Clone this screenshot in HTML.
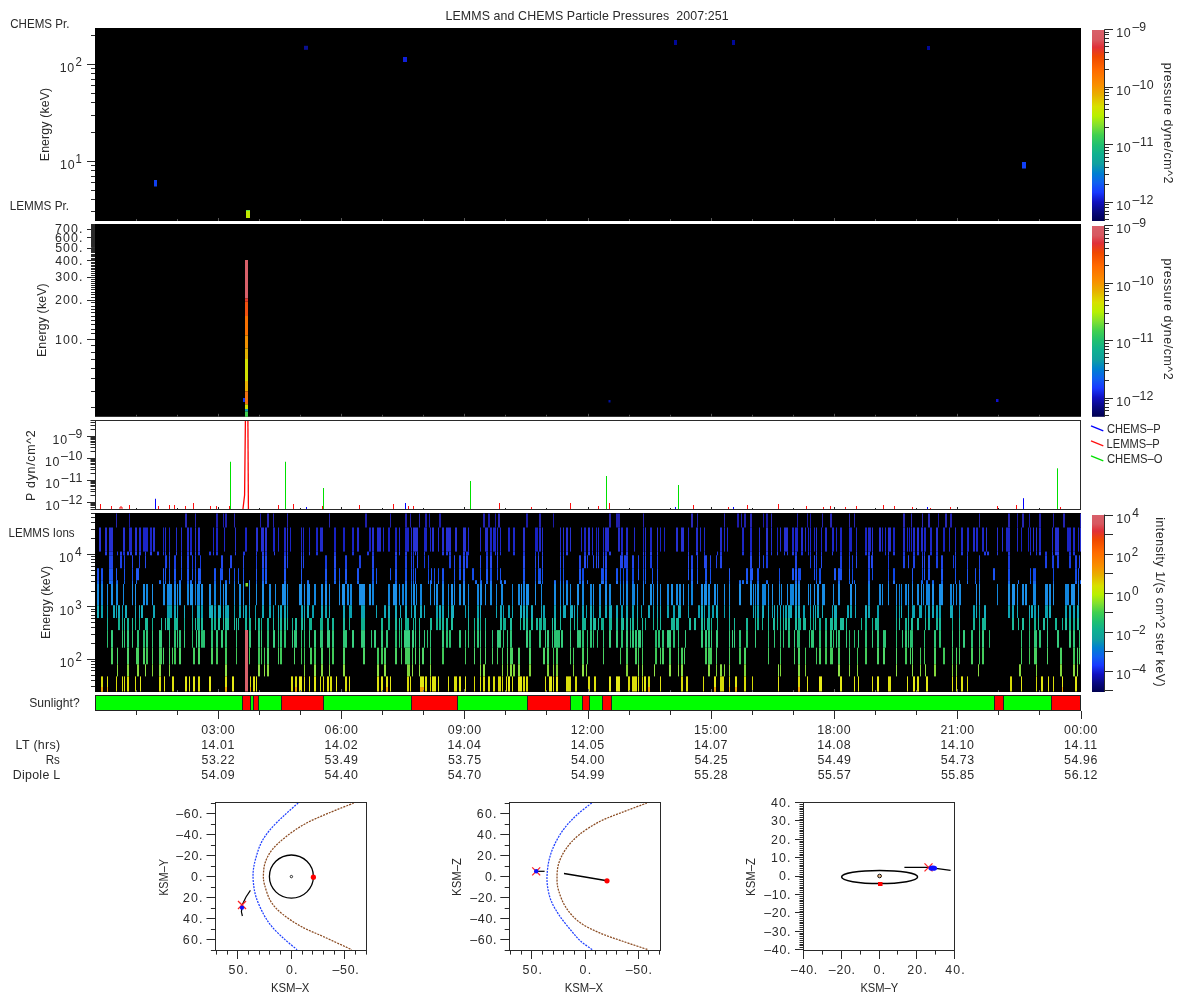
<!DOCTYPE html>
<html><head><meta charset="utf-8"><style>
html,body{margin:0;padding:0;background:#fff;width:1200px;height:1000px;overflow:hidden}
svg{display:block;will-change:transform}
text{font-family:"Liberation Sans",sans-serif;white-space:pre}
</style></head><body>
<svg width="1200" height="1000" viewBox="0 0 1200 1000">
<defs><linearGradient id="cmap" x1="0" y1="0" x2="0" y2="1"><stop offset="0.0" stop-color="rgb(216, 96, 106)"/><stop offset="0.05" stop-color="rgb(216, 88, 96)"/><stop offset="0.09" stop-color="rgb(224, 48, 56)"/><stop offset="0.14" stop-color="rgb(240, 72, 0)"/><stop offset="0.21" stop-color="rgb(255, 106, 0)"/><stop offset="0.29" stop-color="rgb(248, 144, 0)"/><stop offset="0.34" stop-color="rgb(232, 176, 0)"/><stop offset="0.4" stop-color="rgb(216, 224, 0)"/><stop offset="0.45" stop-color="rgb(184, 240, 0)"/><stop offset="0.5" stop-color="rgb(128, 224, 48)"/><stop offset="0.55" stop-color="rgb(64, 208, 80)"/><stop offset="0.6" stop-color="rgb(32, 192, 112)"/><stop offset="0.65" stop-color="rgb(16, 176, 144)"/><stop offset="0.7" stop-color="rgb(16, 160, 160)"/><stop offset="0.75" stop-color="rgb(0, 128, 208)"/><stop offset="0.8" stop-color="rgb(16, 96, 240)"/><stop offset="0.85" stop-color="rgb(24, 56, 255)"/><stop offset="0.9" stop-color="rgb(16, 16, 192)"/><stop offset="0.95" stop-color="rgb(8, 8, 128)"/><stop offset="1.0" stop-color="rgb(0, 0, 80)"/></linearGradient></defs>
<rect x="0" y="0" width="1200" height="1000" fill="#fff"/>
<text x="445.49" y="19.75" font-size="12.4" fill="#2a2a2a" textLength="283.18" lengthAdjust="spacing">LEMMS and CHEMS Particle Pressures  2007:251</text>
<rect x="95.00" y="28.00" width="986.00" height="193.00" fill="#000" />
<line x1="91.00" y1="211.50" x2="95.00" y2="211.50" stroke="#2a2a2a" stroke-width="1"/>
<line x1="91.00" y1="199.50" x2="95.00" y2="199.50" stroke="#2a2a2a" stroke-width="1"/>
<line x1="91.00" y1="190.50" x2="95.00" y2="190.50" stroke="#2a2a2a" stroke-width="1"/>
<line x1="91.00" y1="182.50" x2="95.00" y2="182.50" stroke="#2a2a2a" stroke-width="1"/>
<line x1="91.00" y1="176.50" x2="95.00" y2="176.50" stroke="#2a2a2a" stroke-width="1"/>
<line x1="91.00" y1="170.50" x2="95.00" y2="170.50" stroke="#2a2a2a" stroke-width="1"/>
<line x1="91.00" y1="165.50" x2="95.00" y2="165.50" stroke="#2a2a2a" stroke-width="1"/>
<line x1="87.00" y1="161.50" x2="95.00" y2="161.50" stroke="#2a2a2a" stroke-width="1"/>
<line x1="91.00" y1="132.50" x2="95.00" y2="132.50" stroke="#2a2a2a" stroke-width="1"/>
<line x1="91.00" y1="115.50" x2="95.00" y2="115.50" stroke="#2a2a2a" stroke-width="1"/>
<line x1="91.00" y1="102.50" x2="95.00" y2="102.50" stroke="#2a2a2a" stroke-width="1"/>
<line x1="91.00" y1="93.50" x2="95.00" y2="93.50" stroke="#2a2a2a" stroke-width="1"/>
<line x1="91.00" y1="85.50" x2="95.00" y2="85.50" stroke="#2a2a2a" stroke-width="1"/>
<line x1="91.00" y1="79.50" x2="95.00" y2="79.50" stroke="#2a2a2a" stroke-width="1"/>
<line x1="91.00" y1="73.50" x2="95.00" y2="73.50" stroke="#2a2a2a" stroke-width="1"/>
<line x1="91.00" y1="68.50" x2="95.00" y2="68.50" stroke="#2a2a2a" stroke-width="1"/>
<line x1="87.00" y1="64.50" x2="95.00" y2="64.50" stroke="#2a2a2a" stroke-width="1"/>
<line x1="91.00" y1="35.50" x2="95.00" y2="35.50" stroke="#2a2a2a" stroke-width="1"/>
<text x="75.40" y="66.10" font-size="12.4" fill="#2a2a2a" textLength="6.39" lengthAdjust="spacingAndGlyphs">2</text>
<text x="59.80" y="72.10" font-size="12.4" fill="#2a2a2a" textLength="14.46" lengthAdjust="spacing">10</text>
<text x="75.41" y="163.00" font-size="12.4" fill="#2a2a2a" textLength="6.32" lengthAdjust="spacingAndGlyphs">1</text>
<text x="60.09" y="169.00" font-size="12.4" fill="#2a2a2a" textLength="14.46" lengthAdjust="spacing">10</text>
<text x="10.22" y="27.90" font-size="12.4" fill="#2a2a2a" textLength="59.14" lengthAdjust="spacingAndGlyphs">CHEMS Pr.</text>
<text x="9.66" y="209.60" font-size="12.4" fill="#2a2a2a" textLength="59.42" lengthAdjust="spacingAndGlyphs">LEMMS Pr.</text>
<text transform="translate(49.00,161.21) rotate(-90)" x="0" y="0" font-size="12.4" fill="#2a2a2a" textLength="73.37" lengthAdjust="spacing">Energy (keV)</text>
<rect x="304.00" y="45.80" width="4.00" height="4.00" fill="#0a1090" />
<rect x="403.00" y="57.00" width="4.00" height="5.00" fill="#1020d8" />
<rect x="674.00" y="40.00" width="3.00" height="5.00" fill="#000898" />
<rect x="732.00" y="40.00" width="3.00" height="5.00" fill="#000898" />
<rect x="927.00" y="46.00" width="3.00" height="4.00" fill="#000898" />
<rect x="1022.00" y="162.00" width="4.00" height="6.50" fill="#1040f8" />
<rect x="154.00" y="180.00" width="3.00" height="6.50" fill="#1040f0" />
<rect x="246.00" y="210.00" width="4.00" height="8.00" fill="#c0e800" />
<rect x="246.00" y="210.00" width="4.00" height="1.00" fill="#60e040" />
<line x1="136.50" y1="219.00" x2="136.50" y2="221.00" stroke="#555" stroke-width="1"/>
<line x1="177.50" y1="219.00" x2="177.50" y2="221.00" stroke="#555" stroke-width="1"/>
<line x1="218.50" y1="218.00" x2="218.50" y2="221.00" stroke="#555" stroke-width="1"/>
<line x1="259.50" y1="219.00" x2="259.50" y2="221.00" stroke="#555" stroke-width="1"/>
<line x1="300.50" y1="219.00" x2="300.50" y2="221.00" stroke="#555" stroke-width="1"/>
<line x1="341.50" y1="218.00" x2="341.50" y2="221.00" stroke="#555" stroke-width="1"/>
<line x1="382.50" y1="219.00" x2="382.50" y2="221.00" stroke="#555" stroke-width="1"/>
<line x1="423.50" y1="219.00" x2="423.50" y2="221.00" stroke="#555" stroke-width="1"/>
<line x1="464.50" y1="218.00" x2="464.50" y2="221.00" stroke="#555" stroke-width="1"/>
<line x1="505.50" y1="219.00" x2="505.50" y2="221.00" stroke="#555" stroke-width="1"/>
<line x1="546.50" y1="219.00" x2="546.50" y2="221.00" stroke="#555" stroke-width="1"/>
<line x1="588.50" y1="218.00" x2="588.50" y2="221.00" stroke="#555" stroke-width="1"/>
<line x1="629.50" y1="219.00" x2="629.50" y2="221.00" stroke="#555" stroke-width="1"/>
<line x1="670.50" y1="219.00" x2="670.50" y2="221.00" stroke="#555" stroke-width="1"/>
<line x1="711.50" y1="218.00" x2="711.50" y2="221.00" stroke="#555" stroke-width="1"/>
<line x1="752.50" y1="219.00" x2="752.50" y2="221.00" stroke="#555" stroke-width="1"/>
<line x1="793.50" y1="219.00" x2="793.50" y2="221.00" stroke="#555" stroke-width="1"/>
<line x1="834.50" y1="218.00" x2="834.50" y2="221.00" stroke="#555" stroke-width="1"/>
<line x1="875.50" y1="219.00" x2="875.50" y2="221.00" stroke="#555" stroke-width="1"/>
<line x1="916.50" y1="219.00" x2="916.50" y2="221.00" stroke="#555" stroke-width="1"/>
<line x1="957.50" y1="218.00" x2="957.50" y2="221.00" stroke="#555" stroke-width="1"/>
<line x1="998.50" y1="219.00" x2="998.50" y2="221.00" stroke="#555" stroke-width="1"/>
<line x1="1039.50" y1="219.00" x2="1039.50" y2="221.00" stroke="#555" stroke-width="1"/>
<rect x="95.00" y="224.00" width="986.00" height="192.80" fill="#000" />
<rect x="91.20" y="224.00" width="3.80" height="26.40" fill="#333" />
<line x1="91.00" y1="407.50" x2="95.00" y2="407.50" stroke="#2a2a2a" stroke-width="1"/>
<line x1="91.00" y1="391.50" x2="95.00" y2="391.50" stroke="#2a2a2a" stroke-width="1"/>
<line x1="91.00" y1="378.50" x2="95.00" y2="378.50" stroke="#2a2a2a" stroke-width="1"/>
<line x1="91.00" y1="368.50" x2="95.00" y2="368.50" stroke="#2a2a2a" stroke-width="1"/>
<line x1="91.00" y1="359.50" x2="95.00" y2="359.50" stroke="#2a2a2a" stroke-width="1"/>
<line x1="91.00" y1="352.50" x2="95.00" y2="352.50" stroke="#2a2a2a" stroke-width="1"/>
<line x1="91.00" y1="345.50" x2="95.00" y2="345.50" stroke="#2a2a2a" stroke-width="1"/>
<line x1="87.00" y1="339.50" x2="95.00" y2="339.50" stroke="#2a2a2a" stroke-width="1"/>
<line x1="91.00" y1="333.50" x2="95.00" y2="333.50" stroke="#2a2a2a" stroke-width="1"/>
<line x1="91.00" y1="329.50" x2="95.00" y2="329.50" stroke="#2a2a2a" stroke-width="1"/>
<line x1="91.00" y1="324.50" x2="95.00" y2="324.50" stroke="#2a2a2a" stroke-width="1"/>
<line x1="91.00" y1="320.50" x2="95.00" y2="320.50" stroke="#2a2a2a" stroke-width="1"/>
<line x1="91.00" y1="316.50" x2="95.00" y2="316.50" stroke="#2a2a2a" stroke-width="1"/>
<line x1="91.00" y1="312.50" x2="95.00" y2="312.50" stroke="#2a2a2a" stroke-width="1"/>
<line x1="91.00" y1="309.50" x2="95.00" y2="309.50" stroke="#2a2a2a" stroke-width="1"/>
<line x1="91.00" y1="306.50" x2="95.00" y2="306.50" stroke="#2a2a2a" stroke-width="1"/>
<line x1="91.00" y1="302.50" x2="95.00" y2="302.50" stroke="#2a2a2a" stroke-width="1"/>
<line x1="87.00" y1="300.50" x2="95.00" y2="300.50" stroke="#2a2a2a" stroke-width="1"/>
<line x1="91.00" y1="297.50" x2="95.00" y2="297.50" stroke="#2a2a2a" stroke-width="1"/>
<line x1="91.00" y1="294.50" x2="95.00" y2="294.50" stroke="#2a2a2a" stroke-width="1"/>
<line x1="91.00" y1="292.50" x2="95.00" y2="292.50" stroke="#2a2a2a" stroke-width="1"/>
<line x1="91.00" y1="289.50" x2="95.00" y2="289.50" stroke="#2a2a2a" stroke-width="1"/>
<line x1="91.00" y1="287.50" x2="95.00" y2="287.50" stroke="#2a2a2a" stroke-width="1"/>
<line x1="91.00" y1="285.50" x2="95.00" y2="285.50" stroke="#2a2a2a" stroke-width="1"/>
<line x1="91.00" y1="283.50" x2="95.00" y2="283.50" stroke="#2a2a2a" stroke-width="1"/>
<line x1="91.00" y1="281.50" x2="95.00" y2="281.50" stroke="#2a2a2a" stroke-width="1"/>
<line x1="91.00" y1="279.50" x2="95.00" y2="279.50" stroke="#2a2a2a" stroke-width="1"/>
<line x1="87.00" y1="277.50" x2="95.00" y2="277.50" stroke="#2a2a2a" stroke-width="1"/>
<line x1="91.00" y1="275.50" x2="95.00" y2="275.50" stroke="#2a2a2a" stroke-width="1"/>
<line x1="91.00" y1="273.50" x2="95.00" y2="273.50" stroke="#2a2a2a" stroke-width="1"/>
<line x1="91.00" y1="271.50" x2="95.00" y2="271.50" stroke="#2a2a2a" stroke-width="1"/>
<line x1="91.00" y1="269.50" x2="95.00" y2="269.50" stroke="#2a2a2a" stroke-width="1"/>
<line x1="91.00" y1="268.50" x2="95.00" y2="268.50" stroke="#2a2a2a" stroke-width="1"/>
<line x1="91.00" y1="266.50" x2="95.00" y2="266.50" stroke="#2a2a2a" stroke-width="1"/>
<line x1="91.00" y1="265.50" x2="95.00" y2="265.50" stroke="#2a2a2a" stroke-width="1"/>
<line x1="91.00" y1="263.50" x2="95.00" y2="263.50" stroke="#2a2a2a" stroke-width="1"/>
<line x1="91.00" y1="262.50" x2="95.00" y2="262.50" stroke="#2a2a2a" stroke-width="1"/>
<line x1="87.00" y1="260.50" x2="95.00" y2="260.50" stroke="#2a2a2a" stroke-width="1"/>
<line x1="91.00" y1="259.50" x2="95.00" y2="259.50" stroke="#2a2a2a" stroke-width="1"/>
<line x1="91.00" y1="258.50" x2="95.00" y2="258.50" stroke="#2a2a2a" stroke-width="1"/>
<line x1="91.00" y1="256.50" x2="95.00" y2="256.50" stroke="#2a2a2a" stroke-width="1"/>
<line x1="91.00" y1="255.50" x2="95.00" y2="255.50" stroke="#2a2a2a" stroke-width="1"/>
<line x1="91.00" y1="254.50" x2="95.00" y2="254.50" stroke="#2a2a2a" stroke-width="1"/>
<line x1="91.00" y1="252.50" x2="95.00" y2="252.50" stroke="#2a2a2a" stroke-width="1"/>
<line x1="91.00" y1="251.50" x2="95.00" y2="251.50" stroke="#2a2a2a" stroke-width="1"/>
<line x1="91.00" y1="250.50" x2="95.00" y2="250.50" stroke="#2a2a2a" stroke-width="1"/>
<line x1="91.00" y1="249.50" x2="95.00" y2="249.50" stroke="#2a2a2a" stroke-width="1"/>
<line x1="87.00" y1="248.50" x2="95.00" y2="248.50" stroke="#2a2a2a" stroke-width="1"/>
<line x1="91.00" y1="246.50" x2="95.00" y2="246.50" stroke="#2a2a2a" stroke-width="1"/>
<line x1="91.00" y1="245.50" x2="95.00" y2="245.50" stroke="#2a2a2a" stroke-width="1"/>
<line x1="91.00" y1="244.50" x2="95.00" y2="244.50" stroke="#2a2a2a" stroke-width="1"/>
<line x1="91.00" y1="243.50" x2="95.00" y2="243.50" stroke="#2a2a2a" stroke-width="1"/>
<line x1="91.00" y1="242.50" x2="95.00" y2="242.50" stroke="#2a2a2a" stroke-width="1"/>
<line x1="91.00" y1="241.50" x2="95.00" y2="241.50" stroke="#2a2a2a" stroke-width="1"/>
<line x1="91.00" y1="240.50" x2="95.00" y2="240.50" stroke="#2a2a2a" stroke-width="1"/>
<line x1="91.00" y1="239.50" x2="95.00" y2="239.50" stroke="#2a2a2a" stroke-width="1"/>
<line x1="91.00" y1="238.50" x2="95.00" y2="238.50" stroke="#2a2a2a" stroke-width="1"/>
<line x1="87.00" y1="237.50" x2="95.00" y2="237.50" stroke="#2a2a2a" stroke-width="1"/>
<line x1="91.00" y1="236.50" x2="95.00" y2="236.50" stroke="#2a2a2a" stroke-width="1"/>
<line x1="91.00" y1="235.50" x2="95.00" y2="235.50" stroke="#2a2a2a" stroke-width="1"/>
<line x1="91.00" y1="235.50" x2="95.00" y2="235.50" stroke="#2a2a2a" stroke-width="1"/>
<line x1="91.00" y1="234.50" x2="95.00" y2="234.50" stroke="#2a2a2a" stroke-width="1"/>
<line x1="91.00" y1="233.50" x2="95.00" y2="233.50" stroke="#2a2a2a" stroke-width="1"/>
<line x1="91.00" y1="232.50" x2="95.00" y2="232.50" stroke="#2a2a2a" stroke-width="1"/>
<line x1="91.00" y1="231.50" x2="95.00" y2="231.50" stroke="#2a2a2a" stroke-width="1"/>
<line x1="91.00" y1="230.50" x2="95.00" y2="230.50" stroke="#2a2a2a" stroke-width="1"/>
<line x1="91.00" y1="229.50" x2="95.00" y2="229.50" stroke="#2a2a2a" stroke-width="1"/>
<line x1="87.00" y1="229.50" x2="95.00" y2="229.50" stroke="#2a2a2a" stroke-width="1"/>
<line x1="91.00" y1="228.50" x2="95.00" y2="228.50" stroke="#2a2a2a" stroke-width="1"/>
<line x1="91.00" y1="227.50" x2="95.00" y2="227.50" stroke="#2a2a2a" stroke-width="1"/>
<line x1="91.00" y1="226.50" x2="95.00" y2="226.50" stroke="#2a2a2a" stroke-width="1"/>
<line x1="91.00" y1="225.50" x2="95.00" y2="225.50" stroke="#2a2a2a" stroke-width="1"/>
<line x1="91.00" y1="225.50" x2="95.00" y2="225.50" stroke="#2a2a2a" stroke-width="1"/>
<line x1="91.00" y1="224.50" x2="95.00" y2="224.50" stroke="#2a2a2a" stroke-width="1"/>
<text x="55.08" y="343.50" font-size="12.4" fill="#2a2a2a" textLength="27.41" lengthAdjust="spacing">100.</text>
<text x="55.01" y="304.19" font-size="12.4" fill="#2a2a2a" textLength="27.48" lengthAdjust="spacing">200.</text>
<text x="55.16" y="281.19" font-size="12.4" fill="#2a2a2a" textLength="27.32" lengthAdjust="spacing">300.</text>
<text x="55.13" y="264.87" font-size="12.4" fill="#2a2a2a" textLength="27.36" lengthAdjust="spacing">400.</text>
<text x="55.16" y="252.21" font-size="12.4" fill="#2a2a2a" textLength="27.32" lengthAdjust="spacing">500.</text>
<text x="54.91" y="241.87" font-size="12.4" fill="#2a2a2a" textLength="27.59" lengthAdjust="spacing">600.</text>
<text x="55.12" y="233.13" font-size="12.4" fill="#2a2a2a" textLength="27.36" lengthAdjust="spacing">700.</text>
<text transform="translate(45.60,357.01) rotate(-90)" x="0" y="0" font-size="12.4" fill="#2a2a2a" textLength="73.78" lengthAdjust="spacing">Energy (keV)</text>
<rect x="245.00" y="260.00" width="3.00" height="38.50" fill="#d8606a" />
<rect x="245.00" y="298.50" width="3.00" height="3.20" fill="#e83828" />
<rect x="245.00" y="301.70" width="3.00" height="14.30" fill="#f05010" />
<rect x="245.00" y="316.00" width="3.00" height="19.50" fill="#f87000" />
<rect x="245.00" y="335.50" width="3.00" height="13.00" fill="#f09000" />
<rect x="245.00" y="348.50" width="3.00" height="10.50" fill="#e0b000" />
<rect x="245.00" y="359.00" width="3.00" height="22.00" fill="#d0e000" />
<rect x="245.00" y="381.00" width="3.00" height="10.40" fill="#e8b000" />
<rect x="245.00" y="391.40" width="3.00" height="13.00" fill="#f07010" />
<rect x="245.00" y="404.40" width="3.00" height="4.60" fill="#d0e000" />
<rect x="245.00" y="409.00" width="3.00" height="2.60" fill="#10a0b0" />
<rect x="245.00" y="411.60" width="3.00" height="5.20" fill="#40d050" />
<rect x="243.00" y="398.00" width="2.00" height="4.00" fill="#1030f0" />
<rect x="608.50" y="400.00" width="2.00" height="2.50" fill="#0010a0" />
<rect x="996.00" y="399.00" width="2.50" height="3.00" fill="#1010d0" />
<line x1="136.50" y1="414.80" x2="136.50" y2="416.80" stroke="#555" stroke-width="1"/>
<line x1="177.50" y1="414.80" x2="177.50" y2="416.80" stroke="#555" stroke-width="1"/>
<line x1="218.50" y1="413.80" x2="218.50" y2="416.80" stroke="#555" stroke-width="1"/>
<line x1="259.50" y1="414.80" x2="259.50" y2="416.80" stroke="#555" stroke-width="1"/>
<line x1="300.50" y1="414.80" x2="300.50" y2="416.80" stroke="#555" stroke-width="1"/>
<line x1="341.50" y1="413.80" x2="341.50" y2="416.80" stroke="#555" stroke-width="1"/>
<line x1="382.50" y1="414.80" x2="382.50" y2="416.80" stroke="#555" stroke-width="1"/>
<line x1="423.50" y1="414.80" x2="423.50" y2="416.80" stroke="#555" stroke-width="1"/>
<line x1="464.50" y1="413.80" x2="464.50" y2="416.80" stroke="#555" stroke-width="1"/>
<line x1="505.50" y1="414.80" x2="505.50" y2="416.80" stroke="#555" stroke-width="1"/>
<line x1="546.50" y1="414.80" x2="546.50" y2="416.80" stroke="#555" stroke-width="1"/>
<line x1="588.50" y1="413.80" x2="588.50" y2="416.80" stroke="#555" stroke-width="1"/>
<line x1="629.50" y1="414.80" x2="629.50" y2="416.80" stroke="#555" stroke-width="1"/>
<line x1="670.50" y1="414.80" x2="670.50" y2="416.80" stroke="#555" stroke-width="1"/>
<line x1="711.50" y1="413.80" x2="711.50" y2="416.80" stroke="#555" stroke-width="1"/>
<line x1="752.50" y1="414.80" x2="752.50" y2="416.80" stroke="#555" stroke-width="1"/>
<line x1="793.50" y1="414.80" x2="793.50" y2="416.80" stroke="#555" stroke-width="1"/>
<line x1="834.50" y1="413.80" x2="834.50" y2="416.80" stroke="#555" stroke-width="1"/>
<line x1="875.50" y1="414.80" x2="875.50" y2="416.80" stroke="#555" stroke-width="1"/>
<line x1="916.50" y1="414.80" x2="916.50" y2="416.80" stroke="#555" stroke-width="1"/>
<line x1="957.50" y1="413.80" x2="957.50" y2="416.80" stroke="#555" stroke-width="1"/>
<line x1="998.50" y1="414.80" x2="998.50" y2="416.80" stroke="#555" stroke-width="1"/>
<line x1="1039.50" y1="414.80" x2="1039.50" y2="416.80" stroke="#555" stroke-width="1"/>
<rect x="95.00" y="420.00" width="986.00" height="90.00" fill="#fff" />
<line x1="90.50" y1="509.50" x2="95.00" y2="509.50" stroke="#2a2a2a" stroke-width="1"/>
<line x1="90.50" y1="507.50" x2="95.00" y2="507.50" stroke="#2a2a2a" stroke-width="1"/>
<line x1="90.50" y1="505.50" x2="95.00" y2="505.50" stroke="#2a2a2a" stroke-width="1"/>
<line x1="90.50" y1="504.50" x2="95.00" y2="504.50" stroke="#2a2a2a" stroke-width="1"/>
<line x1="90.50" y1="503.50" x2="95.00" y2="503.50" stroke="#2a2a2a" stroke-width="1"/>
<line x1="87.00" y1="502.50" x2="95.00" y2="502.50" stroke="#2a2a2a" stroke-width="1"/>
<line x1="90.50" y1="495.50" x2="95.00" y2="495.50" stroke="#2a2a2a" stroke-width="1"/>
<line x1="90.50" y1="491.50" x2="95.00" y2="491.50" stroke="#2a2a2a" stroke-width="1"/>
<line x1="90.50" y1="489.50" x2="95.00" y2="489.50" stroke="#2a2a2a" stroke-width="1"/>
<line x1="90.50" y1="486.50" x2="95.00" y2="486.50" stroke="#2a2a2a" stroke-width="1"/>
<line x1="90.50" y1="485.50" x2="95.00" y2="485.50" stroke="#2a2a2a" stroke-width="1"/>
<line x1="90.50" y1="483.50" x2="95.00" y2="483.50" stroke="#2a2a2a" stroke-width="1"/>
<line x1="90.50" y1="482.50" x2="95.00" y2="482.50" stroke="#2a2a2a" stroke-width="1"/>
<line x1="90.50" y1="481.50" x2="95.00" y2="481.50" stroke="#2a2a2a" stroke-width="1"/>
<line x1="87.00" y1="480.50" x2="95.00" y2="480.50" stroke="#2a2a2a" stroke-width="1"/>
<line x1="90.50" y1="473.50" x2="95.00" y2="473.50" stroke="#2a2a2a" stroke-width="1"/>
<line x1="90.50" y1="469.50" x2="95.00" y2="469.50" stroke="#2a2a2a" stroke-width="1"/>
<line x1="90.50" y1="467.50" x2="95.00" y2="467.50" stroke="#2a2a2a" stroke-width="1"/>
<line x1="90.50" y1="464.50" x2="95.00" y2="464.50" stroke="#2a2a2a" stroke-width="1"/>
<line x1="90.50" y1="463.50" x2="95.00" y2="463.50" stroke="#2a2a2a" stroke-width="1"/>
<line x1="90.50" y1="461.50" x2="95.00" y2="461.50" stroke="#2a2a2a" stroke-width="1"/>
<line x1="90.50" y1="460.50" x2="95.00" y2="460.50" stroke="#2a2a2a" stroke-width="1"/>
<line x1="90.50" y1="459.50" x2="95.00" y2="459.50" stroke="#2a2a2a" stroke-width="1"/>
<line x1="87.00" y1="458.50" x2="95.00" y2="458.50" stroke="#2a2a2a" stroke-width="1"/>
<line x1="90.50" y1="451.50" x2="95.00" y2="451.50" stroke="#2a2a2a" stroke-width="1"/>
<line x1="90.50" y1="447.50" x2="95.00" y2="447.50" stroke="#2a2a2a" stroke-width="1"/>
<line x1="90.50" y1="444.50" x2="95.00" y2="444.50" stroke="#2a2a2a" stroke-width="1"/>
<line x1="90.50" y1="442.50" x2="95.00" y2="442.50" stroke="#2a2a2a" stroke-width="1"/>
<line x1="90.50" y1="441.50" x2="95.00" y2="441.50" stroke="#2a2a2a" stroke-width="1"/>
<line x1="90.50" y1="439.50" x2="95.00" y2="439.50" stroke="#2a2a2a" stroke-width="1"/>
<line x1="90.50" y1="438.50" x2="95.00" y2="438.50" stroke="#2a2a2a" stroke-width="1"/>
<line x1="90.50" y1="437.50" x2="95.00" y2="437.50" stroke="#2a2a2a" stroke-width="1"/>
<line x1="87.00" y1="436.50" x2="95.00" y2="436.50" stroke="#2a2a2a" stroke-width="1"/>
<line x1="90.50" y1="429.50" x2="95.00" y2="429.50" stroke="#2a2a2a" stroke-width="1"/>
<line x1="90.50" y1="425.50" x2="95.00" y2="425.50" stroke="#2a2a2a" stroke-width="1"/>
<line x1="90.50" y1="422.50" x2="95.00" y2="422.50" stroke="#2a2a2a" stroke-width="1"/>
<line x1="90.50" y1="420.50" x2="95.00" y2="420.50" stroke="#2a2a2a" stroke-width="1"/>
<text x="68.80" y="437.90" font-size="12.4" fill="#2a2a2a" textLength="13.58" lengthAdjust="spacingAndGlyphs">–9</text>
<text x="52.62" y="443.90" font-size="12.4" fill="#2a2a2a" textLength="14.46" lengthAdjust="spacing">10</text>
<text x="61.10" y="459.97" font-size="12.4" fill="#2a2a2a" textLength="21.19" lengthAdjust="spacing">–10</text>
<text x="44.92" y="465.97" font-size="12.4" fill="#2a2a2a" textLength="14.46" lengthAdjust="spacing">10</text>
<text x="61.40" y="482.04" font-size="12.4" fill="#2a2a2a" textLength="20.98" lengthAdjust="spacing">–11</text>
<text x="45.22" y="488.04" font-size="12.4" fill="#2a2a2a" textLength="14.46" lengthAdjust="spacing">10</text>
<text x="61.50" y="504.11" font-size="12.4" fill="#2a2a2a" textLength="20.97" lengthAdjust="spacing">–12</text>
<text x="45.32" y="510.11" font-size="12.4" fill="#2a2a2a" textLength="14.46" lengthAdjust="spacing">10</text>
<text transform="translate(35.10,500.89) rotate(-90)" x="0" y="0" font-size="12.4" fill="#2a2a2a" textLength="70.58" lengthAdjust="spacing">P dyn/cm^2</text>
<line x1="136.50" y1="508.00" x2="136.50" y2="510.00" stroke="#222" stroke-width="1"/>
<line x1="177.50" y1="508.00" x2="177.50" y2="510.00" stroke="#222" stroke-width="1"/>
<line x1="218.50" y1="507.00" x2="218.50" y2="510.00" stroke="#222" stroke-width="1"/>
<line x1="259.50" y1="508.00" x2="259.50" y2="510.00" stroke="#222" stroke-width="1"/>
<line x1="300.50" y1="508.00" x2="300.50" y2="510.00" stroke="#222" stroke-width="1"/>
<line x1="341.50" y1="507.00" x2="341.50" y2="510.00" stroke="#222" stroke-width="1"/>
<line x1="382.50" y1="508.00" x2="382.50" y2="510.00" stroke="#222" stroke-width="1"/>
<line x1="423.50" y1="508.00" x2="423.50" y2="510.00" stroke="#222" stroke-width="1"/>
<line x1="464.50" y1="507.00" x2="464.50" y2="510.00" stroke="#222" stroke-width="1"/>
<line x1="505.50" y1="508.00" x2="505.50" y2="510.00" stroke="#222" stroke-width="1"/>
<line x1="546.50" y1="508.00" x2="546.50" y2="510.00" stroke="#222" stroke-width="1"/>
<line x1="588.50" y1="507.00" x2="588.50" y2="510.00" stroke="#222" stroke-width="1"/>
<line x1="629.50" y1="508.00" x2="629.50" y2="510.00" stroke="#222" stroke-width="1"/>
<line x1="670.50" y1="508.00" x2="670.50" y2="510.00" stroke="#222" stroke-width="1"/>
<line x1="711.50" y1="507.00" x2="711.50" y2="510.00" stroke="#222" stroke-width="1"/>
<line x1="752.50" y1="508.00" x2="752.50" y2="510.00" stroke="#222" stroke-width="1"/>
<line x1="793.50" y1="508.00" x2="793.50" y2="510.00" stroke="#222" stroke-width="1"/>
<line x1="834.50" y1="507.00" x2="834.50" y2="510.00" stroke="#222" stroke-width="1"/>
<line x1="875.50" y1="508.00" x2="875.50" y2="510.00" stroke="#222" stroke-width="1"/>
<line x1="916.50" y1="508.00" x2="916.50" y2="510.00" stroke="#222" stroke-width="1"/>
<line x1="957.50" y1="507.00" x2="957.50" y2="510.00" stroke="#222" stroke-width="1"/>
<line x1="998.50" y1="508.00" x2="998.50" y2="510.00" stroke="#222" stroke-width="1"/>
<line x1="1039.50" y1="508.00" x2="1039.50" y2="510.00" stroke="#222" stroke-width="1"/>
<line x1="155.50" y1="498.75" x2="155.50" y2="509.50" stroke="#0000ff" stroke-width="1"/>
<line x1="230.50" y1="461.75" x2="230.50" y2="509.50" stroke="#00e000" stroke-width="1"/>
<line x1="285.50" y1="461.75" x2="285.50" y2="509.50" stroke="#00e000" stroke-width="1"/>
<line x1="323.50" y1="488.00" x2="323.50" y2="509.50" stroke="#00e000" stroke-width="1"/>
<line x1="470.50" y1="481.00" x2="470.50" y2="509.50" stroke="#00e000" stroke-width="1"/>
<line x1="606.50" y1="476.00" x2="606.50" y2="509.50" stroke="#00e000" stroke-width="1"/>
<line x1="678.50" y1="485.00" x2="678.50" y2="509.50" stroke="#00e000" stroke-width="1"/>
<line x1="1057.50" y1="468.30" x2="1057.50" y2="509.50" stroke="#00e000" stroke-width="1"/>
<line x1="1023.50" y1="498.20" x2="1023.50" y2="509.50" stroke="#0000ff" stroke-width="1"/>
<line x1="405.50" y1="503.00" x2="405.50" y2="509.50" stroke="#0000ff" stroke-width="1"/>
<line x1="100.50" y1="504.00" x2="100.50" y2="509.50" stroke="#ff1010" stroke-width="1"/>
<line x1="111.50" y1="506.00" x2="111.50" y2="509.50" stroke="#ff1010" stroke-width="1"/>
<line x1="129.50" y1="505.00" x2="129.50" y2="509.50" stroke="#ff1010" stroke-width="1"/>
<line x1="158.50" y1="506.00" x2="158.50" y2="509.50" stroke="#ff1010" stroke-width="1"/>
<line x1="169.50" y1="505.00" x2="169.50" y2="509.50" stroke="#ff1010" stroke-width="1"/>
<line x1="174.50" y1="505.00" x2="174.50" y2="509.50" stroke="#ff1010" stroke-width="1"/>
<line x1="185.50" y1="506.00" x2="185.50" y2="509.50" stroke="#ff1010" stroke-width="1"/>
<line x1="193.50" y1="503.00" x2="193.50" y2="509.50" stroke="#ff1010" stroke-width="1"/>
<line x1="210.50" y1="506.00" x2="210.50" y2="509.50" stroke="#ff1010" stroke-width="1"/>
<line x1="216.50" y1="506.00" x2="216.50" y2="509.50" stroke="#ff1010" stroke-width="1"/>
<line x1="229.50" y1="506.00" x2="229.50" y2="509.50" stroke="#ff1010" stroke-width="1"/>
<line x1="278.50" y1="505.00" x2="278.50" y2="509.50" stroke="#ff1010" stroke-width="1"/>
<line x1="293.50" y1="504.00" x2="293.50" y2="509.50" stroke="#ff1010" stroke-width="1"/>
<line x1="306.50" y1="507.00" x2="306.50" y2="509.50" stroke="#0000ff" stroke-width="1"/>
<line x1="322.50" y1="506.00" x2="322.50" y2="509.50" stroke="#ff1010" stroke-width="1"/>
<line x1="359.50" y1="505.00" x2="359.50" y2="509.50" stroke="#ff1010" stroke-width="1"/>
<line x1="393.50" y1="504.00" x2="393.50" y2="509.50" stroke="#ff1010" stroke-width="1"/>
<line x1="408.50" y1="506.00" x2="408.50" y2="509.50" stroke="#ff1010" stroke-width="1"/>
<line x1="413.50" y1="506.00" x2="413.50" y2="509.50" stroke="#ff1010" stroke-width="1"/>
<line x1="499.50" y1="503.00" x2="499.50" y2="509.50" stroke="#ff1010" stroke-width="1"/>
<line x1="531.50" y1="507.00" x2="531.50" y2="509.50" stroke="#ff1010" stroke-width="1"/>
<line x1="570.50" y1="503.00" x2="570.50" y2="509.50" stroke="#ff1010" stroke-width="1"/>
<line x1="598.50" y1="506.00" x2="598.50" y2="509.50" stroke="#ff1010" stroke-width="1"/>
<line x1="609.50" y1="503.00" x2="609.50" y2="509.50" stroke="#ff1010" stroke-width="1"/>
<line x1="675.50" y1="507.00" x2="675.50" y2="509.50" stroke="#0000ff" stroke-width="1"/>
<line x1="693.50" y1="505.00" x2="693.50" y2="509.50" stroke="#ff1010" stroke-width="1"/>
<line x1="728.50" y1="507.00" x2="728.50" y2="509.50" stroke="#ff1010" stroke-width="1"/>
<line x1="733.50" y1="507.00" x2="733.50" y2="509.50" stroke="#0000ff" stroke-width="1"/>
<line x1="747.50" y1="505.00" x2="747.50" y2="509.50" stroke="#ff1010" stroke-width="1"/>
<line x1="778.50" y1="504.00" x2="778.50" y2="509.50" stroke="#ff1010" stroke-width="1"/>
<line x1="806.50" y1="506.00" x2="806.50" y2="509.50" stroke="#ff1010" stroke-width="1"/>
<line x1="823.50" y1="507.00" x2="823.50" y2="509.50" stroke="#ff1010" stroke-width="1"/>
<line x1="830.50" y1="506.00" x2="830.50" y2="509.50" stroke="#ff1010" stroke-width="1"/>
<line x1="845.50" y1="507.00" x2="845.50" y2="509.50" stroke="#ff1010" stroke-width="1"/>
<line x1="856.50" y1="506.00" x2="856.50" y2="509.50" stroke="#ff1010" stroke-width="1"/>
<line x1="883.50" y1="505.00" x2="883.50" y2="509.50" stroke="#ff1010" stroke-width="1"/>
<line x1="894.50" y1="506.00" x2="894.50" y2="509.50" stroke="#ff1010" stroke-width="1"/>
<line x1="912.50" y1="507.00" x2="912.50" y2="509.50" stroke="#ff1010" stroke-width="1"/>
<line x1="927.50" y1="507.00" x2="927.50" y2="509.50" stroke="#0000ff" stroke-width="1"/>
<line x1="930.50" y1="508.00" x2="930.50" y2="509.50" stroke="#ff1010" stroke-width="1"/>
<line x1="950.50" y1="507.00" x2="950.50" y2="509.50" stroke="#ff1010" stroke-width="1"/>
<line x1="997.50" y1="506.00" x2="997.50" y2="509.50" stroke="#ff1010" stroke-width="1"/>
<line x1="1016.50" y1="505.00" x2="1016.50" y2="509.50" stroke="#ff1010" stroke-width="1"/>
<line x1="1060.50" y1="507.00" x2="1060.50" y2="509.50" stroke="#ff1010" stroke-width="1"/>
<polyline points="242.9,509.5 244.6,495 245.4,420.5" fill="none" stroke="#ff0000" stroke-width="1.3"/>
<polyline points="247.9,420.5 248.4,509.5" fill="none" stroke="#ff0000" stroke-width="1.3"/>
<polyline points="120,510 120,507 122,507 122,510" fill="none" stroke="#ff1010" stroke-width="1"/>
<rect x="95.50" y="420.50" width="985.00" height="89.00" fill="none" stroke="#2a2a2a" stroke-width="1"/>
<line x1="1091.00" y1="425.80" x2="1103.30" y2="430.80" stroke="#0000ff" stroke-width="1.3"/>
<text x="1106.95" y="432.60" font-size="12.4" fill="#2a2a2a" textLength="53.61" lengthAdjust="spacingAndGlyphs">CHEMS–P</text>
<line x1="1091.00" y1="440.80" x2="1103.30" y2="445.80" stroke="#ff1010" stroke-width="1.3"/>
<text x="1106.61" y="447.60" font-size="12.4" fill="#2a2a2a" textLength="53.14" lengthAdjust="spacingAndGlyphs">LEMMS–P</text>
<line x1="1091.00" y1="455.80" x2="1103.30" y2="460.80" stroke="#00e000" stroke-width="1.3"/>
<text x="1106.94" y="462.60" font-size="12.4" fill="#2a2a2a" textLength="55.57" lengthAdjust="spacingAndGlyphs">CHEMS–O</text>
<rect x="1092.00" y="30.00" width="12.40" height="191.00" fill="url(#cmap)" />
<line x1="1104.50" y1="29.50" x2="1104.50" y2="221.00" stroke="#2a2a2a" stroke-width="1"/>
<line x1="1104.50" y1="202.50" x2="1113.00" y2="202.50" stroke="#2a2a2a" stroke-width="1"/>
<line x1="1104.50" y1="144.50" x2="1113.00" y2="144.50" stroke="#2a2a2a" stroke-width="1"/>
<line x1="1104.50" y1="87.50" x2="1113.00" y2="87.50" stroke="#2a2a2a" stroke-width="1"/>
<line x1="1104.50" y1="29.50" x2="1113.00" y2="29.50" stroke="#2a2a2a" stroke-width="1"/>
<line x1="1104.50" y1="219.50" x2="1109.00" y2="219.50" stroke="#2a2a2a" stroke-width="1"/>
<line x1="1104.50" y1="214.50" x2="1109.00" y2="214.50" stroke="#2a2a2a" stroke-width="1"/>
<line x1="1104.50" y1="211.50" x2="1109.00" y2="211.50" stroke="#2a2a2a" stroke-width="1"/>
<line x1="1104.50" y1="207.50" x2="1109.00" y2="207.50" stroke="#2a2a2a" stroke-width="1"/>
<line x1="1104.50" y1="204.50" x2="1109.00" y2="204.50" stroke="#2a2a2a" stroke-width="1"/>
<line x1="1104.50" y1="184.50" x2="1109.00" y2="184.50" stroke="#2a2a2a" stroke-width="1"/>
<line x1="1104.50" y1="174.50" x2="1109.00" y2="174.50" stroke="#2a2a2a" stroke-width="1"/>
<line x1="1104.50" y1="167.50" x2="1109.00" y2="167.50" stroke="#2a2a2a" stroke-width="1"/>
<line x1="1104.50" y1="161.50" x2="1109.00" y2="161.50" stroke="#2a2a2a" stroke-width="1"/>
<line x1="1104.50" y1="157.50" x2="1109.00" y2="157.50" stroke="#2a2a2a" stroke-width="1"/>
<line x1="1104.50" y1="153.50" x2="1109.00" y2="153.50" stroke="#2a2a2a" stroke-width="1"/>
<line x1="1104.50" y1="150.50" x2="1109.00" y2="150.50" stroke="#2a2a2a" stroke-width="1"/>
<line x1="1104.50" y1="147.50" x2="1109.00" y2="147.50" stroke="#2a2a2a" stroke-width="1"/>
<line x1="1104.50" y1="127.50" x2="1109.00" y2="127.50" stroke="#2a2a2a" stroke-width="1"/>
<line x1="1104.50" y1="117.50" x2="1109.00" y2="117.50" stroke="#2a2a2a" stroke-width="1"/>
<line x1="1104.50" y1="109.50" x2="1109.00" y2="109.50" stroke="#2a2a2a" stroke-width="1"/>
<line x1="1104.50" y1="104.50" x2="1109.00" y2="104.50" stroke="#2a2a2a" stroke-width="1"/>
<line x1="1104.50" y1="99.50" x2="1109.00" y2="99.50" stroke="#2a2a2a" stroke-width="1"/>
<line x1="1104.50" y1="95.50" x2="1109.00" y2="95.50" stroke="#2a2a2a" stroke-width="1"/>
<line x1="1104.50" y1="92.50" x2="1109.00" y2="92.50" stroke="#2a2a2a" stroke-width="1"/>
<line x1="1104.50" y1="89.50" x2="1109.00" y2="89.50" stroke="#2a2a2a" stroke-width="1"/>
<line x1="1104.50" y1="69.50" x2="1109.00" y2="69.50" stroke="#2a2a2a" stroke-width="1"/>
<line x1="1104.50" y1="59.50" x2="1109.00" y2="59.50" stroke="#2a2a2a" stroke-width="1"/>
<line x1="1104.50" y1="52.50" x2="1109.00" y2="52.50" stroke="#2a2a2a" stroke-width="1"/>
<line x1="1104.50" y1="46.50" x2="1109.00" y2="46.50" stroke="#2a2a2a" stroke-width="1"/>
<line x1="1104.50" y1="42.50" x2="1109.00" y2="42.50" stroke="#2a2a2a" stroke-width="1"/>
<line x1="1104.50" y1="38.50" x2="1109.00" y2="38.50" stroke="#2a2a2a" stroke-width="1"/>
<line x1="1104.50" y1="34.50" x2="1109.00" y2="34.50" stroke="#2a2a2a" stroke-width="1"/>
<line x1="1104.50" y1="32.50" x2="1109.00" y2="32.50" stroke="#2a2a2a" stroke-width="1"/>
<text x="1116.23" y="209.90" font-size="12.4" fill="#2a2a2a" textLength="14.46" lengthAdjust="spacing">10</text>
<text x="1132.40" y="203.90" font-size="12.4" fill="#2a2a2a" textLength="20.97" lengthAdjust="spacing">–12</text>
<text x="1116.23" y="152.30" font-size="12.4" fill="#2a2a2a" textLength="14.46" lengthAdjust="spacing">10</text>
<text x="1132.40" y="146.30" font-size="12.4" fill="#2a2a2a" textLength="20.98" lengthAdjust="spacing">–11</text>
<text x="1116.23" y="94.70" font-size="12.4" fill="#2a2a2a" textLength="14.46" lengthAdjust="spacing">10</text>
<text x="1132.40" y="88.70" font-size="12.4" fill="#2a2a2a" textLength="21.19" lengthAdjust="spacing">–10</text>
<text x="1116.23" y="37.10" font-size="12.4" fill="#2a2a2a" textLength="14.46" lengthAdjust="spacing">10</text>
<text x="1132.40" y="31.10" font-size="12.4" fill="#2a2a2a" textLength="13.58" lengthAdjust="spacingAndGlyphs">–9</text>
<text transform="translate(1164.20,62.73) rotate(90)" x="0" y="0" font-size="12.4" fill="#2a2a2a" textLength="120.79" lengthAdjust="spacing">pressure dyne/cm^2</text>
<rect x="1092.00" y="226.00" width="12.40" height="190.80" fill="url(#cmap)" />
<line x1="1104.50" y1="225.50" x2="1104.50" y2="416.80" stroke="#2a2a2a" stroke-width="1"/>
<line x1="1104.50" y1="398.50" x2="1113.00" y2="398.50" stroke="#2a2a2a" stroke-width="1"/>
<line x1="1104.50" y1="340.50" x2="1113.00" y2="340.50" stroke="#2a2a2a" stroke-width="1"/>
<line x1="1104.50" y1="283.50" x2="1113.00" y2="283.50" stroke="#2a2a2a" stroke-width="1"/>
<line x1="1104.50" y1="225.50" x2="1113.00" y2="225.50" stroke="#2a2a2a" stroke-width="1"/>
<line x1="1104.50" y1="415.50" x2="1109.00" y2="415.50" stroke="#2a2a2a" stroke-width="1"/>
<line x1="1104.50" y1="410.50" x2="1109.00" y2="410.50" stroke="#2a2a2a" stroke-width="1"/>
<line x1="1104.50" y1="407.50" x2="1109.00" y2="407.50" stroke="#2a2a2a" stroke-width="1"/>
<line x1="1104.50" y1="403.50" x2="1109.00" y2="403.50" stroke="#2a2a2a" stroke-width="1"/>
<line x1="1104.50" y1="400.50" x2="1109.00" y2="400.50" stroke="#2a2a2a" stroke-width="1"/>
<line x1="1104.50" y1="380.50" x2="1109.00" y2="380.50" stroke="#2a2a2a" stroke-width="1"/>
<line x1="1104.50" y1="370.50" x2="1109.00" y2="370.50" stroke="#2a2a2a" stroke-width="1"/>
<line x1="1104.50" y1="363.50" x2="1109.00" y2="363.50" stroke="#2a2a2a" stroke-width="1"/>
<line x1="1104.50" y1="357.50" x2="1109.00" y2="357.50" stroke="#2a2a2a" stroke-width="1"/>
<line x1="1104.50" y1="353.50" x2="1109.00" y2="353.50" stroke="#2a2a2a" stroke-width="1"/>
<line x1="1104.50" y1="349.50" x2="1109.00" y2="349.50" stroke="#2a2a2a" stroke-width="1"/>
<line x1="1104.50" y1="346.50" x2="1109.00" y2="346.50" stroke="#2a2a2a" stroke-width="1"/>
<line x1="1104.50" y1="343.50" x2="1109.00" y2="343.50" stroke="#2a2a2a" stroke-width="1"/>
<line x1="1104.50" y1="323.50" x2="1109.00" y2="323.50" stroke="#2a2a2a" stroke-width="1"/>
<line x1="1104.50" y1="313.50" x2="1109.00" y2="313.50" stroke="#2a2a2a" stroke-width="1"/>
<line x1="1104.50" y1="305.50" x2="1109.00" y2="305.50" stroke="#2a2a2a" stroke-width="1"/>
<line x1="1104.50" y1="300.50" x2="1109.00" y2="300.50" stroke="#2a2a2a" stroke-width="1"/>
<line x1="1104.50" y1="295.50" x2="1109.00" y2="295.50" stroke="#2a2a2a" stroke-width="1"/>
<line x1="1104.50" y1="291.50" x2="1109.00" y2="291.50" stroke="#2a2a2a" stroke-width="1"/>
<line x1="1104.50" y1="288.50" x2="1109.00" y2="288.50" stroke="#2a2a2a" stroke-width="1"/>
<line x1="1104.50" y1="285.50" x2="1109.00" y2="285.50" stroke="#2a2a2a" stroke-width="1"/>
<line x1="1104.50" y1="265.50" x2="1109.00" y2="265.50" stroke="#2a2a2a" stroke-width="1"/>
<line x1="1104.50" y1="255.50" x2="1109.00" y2="255.50" stroke="#2a2a2a" stroke-width="1"/>
<line x1="1104.50" y1="248.50" x2="1109.00" y2="248.50" stroke="#2a2a2a" stroke-width="1"/>
<line x1="1104.50" y1="242.50" x2="1109.00" y2="242.50" stroke="#2a2a2a" stroke-width="1"/>
<line x1="1104.50" y1="238.50" x2="1109.00" y2="238.50" stroke="#2a2a2a" stroke-width="1"/>
<line x1="1104.50" y1="234.50" x2="1109.00" y2="234.50" stroke="#2a2a2a" stroke-width="1"/>
<line x1="1104.50" y1="230.50" x2="1109.00" y2="230.50" stroke="#2a2a2a" stroke-width="1"/>
<line x1="1104.50" y1="228.50" x2="1109.00" y2="228.50" stroke="#2a2a2a" stroke-width="1"/>
<text x="1116.23" y="405.90" font-size="12.4" fill="#2a2a2a" textLength="14.46" lengthAdjust="spacing">10</text>
<text x="1132.40" y="399.90" font-size="12.4" fill="#2a2a2a" textLength="20.97" lengthAdjust="spacing">–12</text>
<text x="1116.23" y="348.30" font-size="12.4" fill="#2a2a2a" textLength="14.46" lengthAdjust="spacing">10</text>
<text x="1132.40" y="342.30" font-size="12.4" fill="#2a2a2a" textLength="20.98" lengthAdjust="spacing">–11</text>
<text x="1116.23" y="290.70" font-size="12.4" fill="#2a2a2a" textLength="14.46" lengthAdjust="spacing">10</text>
<text x="1132.40" y="284.70" font-size="12.4" fill="#2a2a2a" textLength="21.19" lengthAdjust="spacing">–10</text>
<text x="1116.23" y="233.10" font-size="12.4" fill="#2a2a2a" textLength="14.46" lengthAdjust="spacing">10</text>
<text x="1132.40" y="227.10" font-size="12.4" fill="#2a2a2a" textLength="13.58" lengthAdjust="spacingAndGlyphs">–9</text>
<text transform="translate(1163.60,258.62) rotate(90)" x="0" y="0" font-size="12.4" fill="#2a2a2a" textLength="121.00" lengthAdjust="spacing">pressure dyne/cm^2</text>
<rect x="95.00" y="513.00" width="986.00" height="179.00" fill="#000" />
<rect x="116.00" y="513.50" width="1.00" height="14.00" fill="#2424b2" />
<rect x="129.00" y="513.50" width="1.00" height="14.00" fill="#1919a7" />
<rect x="185.00" y="513.50" width="2.00" height="14.00" fill="#2828b6" />
<rect x="195.00" y="513.50" width="1.00" height="14.00" fill="#2424b2" />
<rect x="216.00" y="513.50" width="2.00" height="14.00" fill="#1e1eac" />
<rect x="223.00" y="513.50" width="1.00" height="14.00" fill="#1f1fad" />
<rect x="225.00" y="513.50" width="2.00" height="14.00" fill="#1f1fad" />
<rect x="234.00" y="513.50" width="1.00" height="14.00" fill="#2828b6" />
<rect x="260.00" y="513.50" width="1.00" height="14.00" fill="#1f1fad" />
<rect x="267.00" y="513.50" width="2.00" height="14.00" fill="#2727b5" />
<rect x="273.00" y="513.50" width="1.00" height="14.00" fill="#2424b2" />
<rect x="287.00" y="513.50" width="1.00" height="14.00" fill="#2525b3" />
<rect x="329.00" y="513.50" width="1.00" height="14.00" fill="#2626b4" />
<rect x="365.00" y="513.50" width="2.00" height="14.00" fill="#1e1eac" />
<rect x="390.00" y="513.50" width="1.00" height="14.00" fill="#2222b0" />
<rect x="405.00" y="513.50" width="2.00" height="14.00" fill="#2020ae" />
<rect x="410.00" y="513.50" width="1.00" height="14.00" fill="#2323b1" />
<rect x="419.00" y="513.50" width="1.00" height="14.00" fill="#2727b5" />
<rect x="425.00" y="513.50" width="2.00" height="14.00" fill="#1e1eac" />
<rect x="429.00" y="513.50" width="1.00" height="14.00" fill="#1d1dab" />
<rect x="439.00" y="513.50" width="2.00" height="14.00" fill="#1c1caa" />
<rect x="483.00" y="513.50" width="2.00" height="14.00" fill="#2121af" />
<rect x="488.00" y="513.50" width="2.00" height="14.00" fill="#1b1ba9" />
<rect x="495.00" y="513.50" width="1.00" height="14.00" fill="#1919a7" />
<rect x="498.00" y="513.50" width="2.00" height="14.00" fill="#2b2bb9" />
<rect x="526.00" y="513.50" width="2.00" height="14.00" fill="#1b1ba9" />
<rect x="539.00" y="513.50" width="2.00" height="14.00" fill="#2222b0" />
<rect x="553.00" y="513.50" width="1.00" height="14.00" fill="#1a1aa8" />
<rect x="609.00" y="513.50" width="2.00" height="14.00" fill="#2323b1" />
<rect x="616.00" y="513.50" width="4.00" height="14.00" fill="#1f1fad" />
<rect x="643.00" y="513.50" width="1.00" height="14.00" fill="#2424b2" />
<rect x="691.00" y="513.50" width="2.00" height="14.00" fill="#2929b7" />
<rect x="697.00" y="513.50" width="1.00" height="14.00" fill="#2121af" />
<rect x="724.00" y="513.50" width="1.00" height="14.00" fill="#2727b5" />
<rect x="737.00" y="513.50" width="2.00" height="14.00" fill="#1c1caa" />
<rect x="741.00" y="513.50" width="1.00" height="14.00" fill="#2222b0" />
<rect x="744.00" y="513.50" width="2.00" height="14.00" fill="#1f1fad" />
<rect x="750.00" y="513.50" width="2.00" height="14.00" fill="#2525b3" />
<rect x="763.00" y="513.50" width="1.00" height="14.00" fill="#1b1ba9" />
<rect x="766.00" y="513.50" width="2.00" height="14.00" fill="#1919a7" />
<rect x="771.00" y="513.50" width="1.00" height="14.00" fill="#2929b7" />
<rect x="797.00" y="513.50" width="1.00" height="14.00" fill="#1b1ba9" />
<rect x="807.00" y="513.50" width="1.00" height="14.00" fill="#1919a7" />
<rect x="810.00" y="513.50" width="1.00" height="14.00" fill="#1818a6" />
<rect x="822.00" y="513.50" width="1.00" height="14.00" fill="#2525b3" />
<rect x="830.00" y="513.50" width="2.00" height="14.00" fill="#2626b4" />
<rect x="849.00" y="513.50" width="1.00" height="14.00" fill="#2a2ab8" />
<rect x="854.00" y="513.50" width="1.00" height="14.00" fill="#2626b4" />
<rect x="903.00" y="513.50" width="2.00" height="14.00" fill="#2828b6" />
<rect x="911.00" y="513.50" width="1.00" height="14.00" fill="#2727b5" />
<rect x="922.00" y="513.50" width="1.00" height="14.00" fill="#2b2bb9" />
<rect x="928.00" y="513.50" width="2.00" height="14.00" fill="#2a2ab8" />
<rect x="938.00" y="513.50" width="1.00" height="14.00" fill="#1818a6" />
<rect x="945.00" y="513.50" width="2.00" height="14.00" fill="#2727b5" />
<rect x="950.00" y="513.50" width="2.00" height="14.00" fill="#2020ae" />
<rect x="979.00" y="513.50" width="1.00" height="14.00" fill="#2323b1" />
<rect x="1008.00" y="513.50" width="2.00" height="14.00" fill="#2727b5" />
<rect x="1017.00" y="513.50" width="1.00" height="14.00" fill="#1a1aa8" />
<rect x="1022.00" y="513.50" width="2.00" height="14.00" fill="#2727b5" />
<rect x="1029.00" y="513.50" width="1.00" height="14.00" fill="#1818a6" />
<rect x="1039.00" y="513.50" width="2.00" height="14.00" fill="#1e1eac" />
<rect x="1053.00" y="513.50" width="1.00" height="14.00" fill="#1f1fad" />
<rect x="1063.00" y="513.50" width="2.00" height="14.00" fill="#2323b1" />
<rect x="1080.00" y="513.50" width="1.00" height="14.00" fill="#2121af" />
<rect x="99.00" y="527.50" width="2.00" height="24.10" fill="#2933d5" />
<rect x="105.00" y="527.50" width="2.00" height="24.10" fill="#242ed0" />
<rect x="109.00" y="527.50" width="4.00" height="24.10" fill="#2630d2" />
<rect x="123.00" y="527.50" width="2.00" height="24.10" fill="#2731d3" />
<rect x="129.00" y="527.50" width="3.00" height="24.10" fill="#1d27c9" />
<rect x="135.00" y="527.50" width="2.00" height="24.10" fill="#2731d3" />
<rect x="139.00" y="527.50" width="2.00" height="24.10" fill="#212bcd" />
<rect x="143.00" y="527.50" width="5.00" height="24.10" fill="#1b25c7" />
<rect x="150.00" y="527.50" width="2.00" height="24.10" fill="#1a24c6" />
<rect x="153.00" y="527.50" width="2.00" height="24.10" fill="#2630d2" />
<rect x="163.00" y="527.50" width="1.00" height="24.10" fill="#1822c4" />
<rect x="165.00" y="527.50" width="1.00" height="24.10" fill="#242ed0" />
<rect x="169.00" y="527.50" width="1.00" height="24.10" fill="#1721c3" />
<rect x="176.00" y="527.50" width="1.00" height="24.10" fill="#212bcd" />
<rect x="181.00" y="527.50" width="1.00" height="24.10" fill="#232dcf" />
<rect x="187.00" y="527.50" width="2.00" height="24.10" fill="#212bcd" />
<rect x="190.00" y="527.50" width="2.00" height="24.10" fill="#1721c3" />
<rect x="195.00" y="527.50" width="1.00" height="24.10" fill="#252fd1" />
<rect x="198.00" y="527.50" width="2.00" height="24.10" fill="#252fd1" />
<rect x="213.00" y="527.50" width="1.00" height="24.10" fill="#1a24c6" />
<rect x="216.00" y="527.50" width="2.00" height="24.10" fill="#1a24c6" />
<rect x="224.00" y="527.50" width="1.00" height="24.10" fill="#1e28ca" />
<rect x="235.00" y="527.50" width="1.00" height="24.10" fill="#252fd1" />
<rect x="245.00" y="527.50" width="2.00" height="24.10" fill="#1b25c7" />
<rect x="256.00" y="527.50" width="2.00" height="24.10" fill="#2731d3" />
<rect x="261.00" y="527.50" width="3.00" height="24.10" fill="#2731d3" />
<rect x="265.00" y="527.50" width="2.00" height="24.10" fill="#2832d4" />
<rect x="273.00" y="527.50" width="2.00" height="24.10" fill="#1b25c7" />
<rect x="278.00" y="527.50" width="1.00" height="24.10" fill="#1d27c9" />
<rect x="284.00" y="527.50" width="2.00" height="24.10" fill="#1c26c8" />
<rect x="287.00" y="527.50" width="1.00" height="24.10" fill="#2933d5" />
<rect x="290.00" y="527.50" width="1.00" height="24.10" fill="#1a24c6" />
<rect x="301.00" y="527.50" width="1.00" height="24.10" fill="#1e28ca" />
<rect x="303.00" y="527.50" width="1.00" height="24.10" fill="#1f29cb" />
<rect x="309.00" y="527.50" width="1.00" height="24.10" fill="#1822c4" />
<rect x="316.00" y="527.50" width="2.00" height="24.10" fill="#1a24c6" />
<rect x="320.00" y="527.50" width="3.00" height="24.10" fill="#212bcd" />
<rect x="334.00" y="527.50" width="2.00" height="24.10" fill="#1822c4" />
<rect x="343.00" y="527.50" width="2.00" height="24.10" fill="#1721c3" />
<rect x="352.00" y="527.50" width="2.00" height="24.10" fill="#1822c4" />
<rect x="357.00" y="527.50" width="2.00" height="24.10" fill="#212bcd" />
<rect x="369.00" y="527.50" width="2.00" height="24.10" fill="#1620c2" />
<rect x="372.00" y="527.50" width="2.00" height="24.10" fill="#252fd1" />
<rect x="377.00" y="527.50" width="4.00" height="24.10" fill="#202acc" />
<rect x="383.00" y="527.50" width="1.00" height="24.10" fill="#1e28ca" />
<rect x="388.00" y="527.50" width="2.00" height="24.10" fill="#1620c2" />
<rect x="395.00" y="527.50" width="2.00" height="24.10" fill="#1721c3" />
<rect x="399.00" y="527.50" width="1.00" height="24.10" fill="#232dcf" />
<rect x="405.00" y="527.50" width="4.00" height="24.10" fill="#1923c5" />
<rect x="411.00" y="527.50" width="1.00" height="24.10" fill="#252fd1" />
<rect x="413.00" y="527.50" width="5.00" height="24.10" fill="#2933d5" />
<rect x="424.00" y="527.50" width="3.00" height="24.10" fill="#1b25c7" />
<rect x="430.00" y="527.50" width="1.00" height="24.10" fill="#1d27c9" />
<rect x="432.00" y="527.50" width="2.00" height="24.10" fill="#2630d2" />
<rect x="438.00" y="527.50" width="1.00" height="24.10" fill="#232dcf" />
<rect x="442.00" y="527.50" width="2.00" height="24.10" fill="#252fd1" />
<rect x="446.00" y="527.50" width="5.00" height="24.10" fill="#252fd1" />
<rect x="455.00" y="527.50" width="2.00" height="24.10" fill="#2832d4" />
<rect x="463.00" y="527.50" width="3.00" height="24.10" fill="#2832d4" />
<rect x="468.00" y="527.50" width="1.00" height="24.10" fill="#212bcd" />
<rect x="480.00" y="527.50" width="1.00" height="24.10" fill="#222cce" />
<rect x="485.00" y="527.50" width="3.00" height="24.10" fill="#252fd1" />
<rect x="490.00" y="527.50" width="2.00" height="24.10" fill="#1d27c9" />
<rect x="493.00" y="527.50" width="3.00" height="24.10" fill="#1b25c7" />
<rect x="497.00" y="527.50" width="1.00" height="24.10" fill="#202acc" />
<rect x="500.00" y="527.50" width="1.00" height="24.10" fill="#1e28ca" />
<rect x="508.00" y="527.50" width="2.00" height="24.10" fill="#1b25c7" />
<rect x="513.00" y="527.50" width="2.00" height="24.10" fill="#1d27c9" />
<rect x="523.00" y="527.50" width="2.00" height="24.10" fill="#2731d3" />
<rect x="535.00" y="527.50" width="3.00" height="24.10" fill="#1721c3" />
<rect x="539.00" y="527.50" width="2.00" height="24.10" fill="#1f29cb" />
<rect x="542.00" y="527.50" width="1.00" height="24.10" fill="#232dcf" />
<rect x="560.00" y="527.50" width="1.00" height="24.10" fill="#232dcf" />
<rect x="563.00" y="527.50" width="1.00" height="24.10" fill="#2933d5" />
<rect x="566.00" y="527.50" width="2.00" height="24.10" fill="#2731d3" />
<rect x="570.00" y="527.50" width="1.00" height="24.10" fill="#2731d3" />
<rect x="581.00" y="527.50" width="1.00" height="24.10" fill="#1e28ca" />
<rect x="584.00" y="527.50" width="2.00" height="24.10" fill="#1a24c6" />
<rect x="588.00" y="527.50" width="2.00" height="24.10" fill="#2731d3" />
<rect x="592.00" y="527.50" width="1.00" height="24.10" fill="#232dcf" />
<rect x="596.00" y="527.50" width="1.00" height="24.10" fill="#1721c3" />
<rect x="598.00" y="527.50" width="1.00" height="24.10" fill="#202acc" />
<rect x="603.00" y="527.50" width="1.00" height="24.10" fill="#1c26c8" />
<rect x="605.00" y="527.50" width="4.00" height="24.10" fill="#222cce" />
<rect x="618.00" y="527.50" width="2.00" height="24.10" fill="#242ed0" />
<rect x="621.00" y="527.50" width="2.00" height="24.10" fill="#1b25c7" />
<rect x="626.00" y="527.50" width="2.00" height="24.10" fill="#202acc" />
<rect x="634.00" y="527.50" width="1.00" height="24.10" fill="#212bcd" />
<rect x="643.00" y="527.50" width="1.00" height="24.10" fill="#1923c5" />
<rect x="645.00" y="527.50" width="1.00" height="24.10" fill="#242ed0" />
<rect x="650.00" y="527.50" width="2.00" height="24.10" fill="#1d27c9" />
<rect x="657.00" y="527.50" width="1.00" height="24.10" fill="#2832d4" />
<rect x="660.00" y="527.50" width="1.00" height="24.10" fill="#1a24c6" />
<rect x="664.00" y="527.50" width="1.00" height="24.10" fill="#1923c5" />
<rect x="676.00" y="527.50" width="2.00" height="24.10" fill="#2630d2" />
<rect x="681.00" y="527.50" width="3.00" height="24.10" fill="#2731d3" />
<rect x="688.00" y="527.50" width="1.00" height="24.10" fill="#1b25c7" />
<rect x="696.00" y="527.50" width="2.00" height="24.10" fill="#232dcf" />
<rect x="700.00" y="527.50" width="1.00" height="24.10" fill="#202acc" />
<rect x="704.00" y="527.50" width="1.00" height="24.10" fill="#1e28ca" />
<rect x="720.00" y="527.50" width="2.00" height="24.10" fill="#232dcf" />
<rect x="724.00" y="527.50" width="1.00" height="24.10" fill="#1d27c9" />
<rect x="727.00" y="527.50" width="1.00" height="24.10" fill="#1e28ca" />
<rect x="742.00" y="527.50" width="2.00" height="24.10" fill="#1c26c8" />
<rect x="750.00" y="527.50" width="2.00" height="24.10" fill="#1a24c6" />
<rect x="759.00" y="527.50" width="1.00" height="24.10" fill="#212bcd" />
<rect x="766.00" y="527.50" width="2.00" height="24.10" fill="#2933d5" />
<rect x="771.00" y="527.50" width="1.00" height="24.10" fill="#242ed0" />
<rect x="777.00" y="527.50" width="1.00" height="24.10" fill="#1620c2" />
<rect x="780.00" y="527.50" width="1.00" height="24.10" fill="#252fd1" />
<rect x="784.00" y="527.50" width="4.00" height="24.10" fill="#2630d2" />
<rect x="792.00" y="527.50" width="2.00" height="24.10" fill="#1b25c7" />
<rect x="795.00" y="527.50" width="3.00" height="24.10" fill="#1b25c7" />
<rect x="801.00" y="527.50" width="2.00" height="24.10" fill="#232dcf" />
<rect x="805.00" y="527.50" width="1.00" height="24.10" fill="#232dcf" />
<rect x="808.00" y="527.50" width="1.00" height="24.10" fill="#1a24c6" />
<rect x="810.00" y="527.50" width="1.00" height="24.10" fill="#1f29cb" />
<rect x="814.00" y="527.50" width="1.00" height="24.10" fill="#1b25c7" />
<rect x="816.00" y="527.50" width="1.00" height="24.10" fill="#2630d2" />
<rect x="821.00" y="527.50" width="1.00" height="24.10" fill="#1e28ca" />
<rect x="825.00" y="527.50" width="2.00" height="24.10" fill="#202acc" />
<rect x="832.00" y="527.50" width="2.00" height="24.10" fill="#1d27c9" />
<rect x="836.00" y="527.50" width="1.00" height="24.10" fill="#1a24c6" />
<rect x="840.00" y="527.50" width="2.00" height="24.10" fill="#1b25c7" />
<rect x="849.00" y="527.50" width="3.00" height="24.10" fill="#1a24c6" />
<rect x="856.00" y="527.50" width="1.00" height="24.10" fill="#1d27c9" />
<rect x="865.00" y="527.50" width="2.00" height="24.10" fill="#1b25c7" />
<rect x="868.00" y="527.50" width="3.00" height="24.10" fill="#1e28ca" />
<rect x="872.00" y="527.50" width="1.00" height="24.10" fill="#2630d2" />
<rect x="879.00" y="527.50" width="2.00" height="24.10" fill="#2731d3" />
<rect x="882.00" y="527.50" width="1.00" height="24.10" fill="#1923c5" />
<rect x="885.00" y="527.50" width="1.00" height="24.10" fill="#1e28ca" />
<rect x="888.00" y="527.50" width="3.00" height="24.10" fill="#2630d2" />
<rect x="893.00" y="527.50" width="2.00" height="24.10" fill="#1923c5" />
<rect x="903.00" y="527.50" width="2.00" height="24.10" fill="#222cce" />
<rect x="907.00" y="527.50" width="1.00" height="24.10" fill="#1c26c8" />
<rect x="909.00" y="527.50" width="1.00" height="24.10" fill="#1721c3" />
<rect x="911.00" y="527.50" width="1.00" height="24.10" fill="#1a24c6" />
<rect x="913.00" y="527.50" width="2.00" height="24.10" fill="#212bcd" />
<rect x="917.00" y="527.50" width="2.00" height="24.10" fill="#2630d2" />
<rect x="921.00" y="527.50" width="2.00" height="24.10" fill="#212bcd" />
<rect x="924.00" y="527.50" width="2.00" height="24.10" fill="#1b25c7" />
<rect x="930.00" y="527.50" width="2.00" height="24.10" fill="#1c26c8" />
<rect x="936.00" y="527.50" width="2.00" height="24.10" fill="#2832d4" />
<rect x="943.00" y="527.50" width="2.00" height="24.10" fill="#1822c4" />
<rect x="949.00" y="527.50" width="1.00" height="24.10" fill="#1c26c8" />
<rect x="955.00" y="527.50" width="1.00" height="24.10" fill="#1e28ca" />
<rect x="961.00" y="527.50" width="2.00" height="24.10" fill="#1e28ca" />
<rect x="967.00" y="527.50" width="2.00" height="24.10" fill="#1c26c8" />
<rect x="973.00" y="527.50" width="2.00" height="24.10" fill="#202acc" />
<rect x="976.00" y="527.50" width="2.00" height="24.10" fill="#1c26c8" />
<rect x="982.00" y="527.50" width="2.00" height="24.10" fill="#1d27c9" />
<rect x="986.00" y="527.50" width="1.00" height="24.10" fill="#2933d5" />
<rect x="997.00" y="527.50" width="1.00" height="24.10" fill="#252fd1" />
<rect x="1002.00" y="527.50" width="1.00" height="24.10" fill="#2832d4" />
<rect x="1006.00" y="527.50" width="4.00" height="24.10" fill="#1b25c7" />
<rect x="1017.00" y="527.50" width="1.00" height="24.10" fill="#1e28ca" />
<rect x="1021.00" y="527.50" width="1.00" height="24.10" fill="#1923c5" />
<rect x="1028.00" y="527.50" width="1.00" height="24.10" fill="#1721c3" />
<rect x="1030.00" y="527.50" width="1.00" height="24.10" fill="#1822c4" />
<rect x="1033.00" y="527.50" width="1.00" height="24.10" fill="#2933d5" />
<rect x="1036.00" y="527.50" width="1.00" height="24.10" fill="#2933d5" />
<rect x="1039.00" y="527.50" width="2.00" height="24.10" fill="#1c26c8" />
<rect x="1052.00" y="527.50" width="1.00" height="24.10" fill="#232dcf" />
<rect x="1055.00" y="527.50" width="4.00" height="24.10" fill="#242ed0" />
<rect x="1067.00" y="527.50" width="4.00" height="24.10" fill="#1923c5" />
<rect x="1073.00" y="527.50" width="2.00" height="24.10" fill="#1d27c9" />
<rect x="1078.00" y="527.50" width="1.00" height="24.10" fill="#1b25c7" />
<rect x="1080.00" y="527.50" width="1.00" height="24.10" fill="#242ed0" />
<rect x="105.00" y="551.60" width="2.00" height="3.70" fill="#243ce4" />
<rect x="109.00" y="551.60" width="4.00" height="3.70" fill="#233be3" />
<rect x="117.00" y="551.60" width="1.00" height="3.70" fill="#1b33db" />
<rect x="120.00" y="551.60" width="2.00" height="3.70" fill="#233be3" />
<rect x="123.00" y="551.60" width="2.00" height="3.70" fill="#1830d8" />
<rect x="127.00" y="551.60" width="2.00" height="3.70" fill="#273fe7" />
<rect x="130.00" y="551.60" width="2.00" height="3.70" fill="#273fe7" />
<rect x="135.00" y="551.60" width="2.00" height="3.70" fill="#273fe7" />
<rect x="139.00" y="551.60" width="2.00" height="3.70" fill="#2038e0" />
<rect x="145.00" y="551.60" width="1.00" height="3.70" fill="#243ce4" />
<rect x="150.00" y="551.60" width="2.00" height="3.70" fill="#263ee6" />
<rect x="157.00" y="551.60" width="2.00" height="3.70" fill="#263ee6" />
<rect x="163.00" y="551.60" width="1.00" height="3.70" fill="#1e36de" />
<rect x="165.00" y="551.60" width="1.00" height="3.70" fill="#1e36de" />
<rect x="169.00" y="551.60" width="1.00" height="3.70" fill="#2840e8" />
<rect x="176.00" y="551.60" width="1.00" height="3.70" fill="#243ce4" />
<rect x="181.00" y="551.60" width="1.00" height="3.70" fill="#1d35dd" />
<rect x="187.00" y="551.60" width="2.00" height="3.70" fill="#1d35dd" />
<rect x="190.00" y="551.60" width="2.00" height="3.70" fill="#2038e0" />
<rect x="195.00" y="551.60" width="1.00" height="3.70" fill="#253de5" />
<rect x="198.00" y="551.60" width="2.00" height="3.70" fill="#1c34dc" />
<rect x="209.00" y="551.60" width="2.00" height="3.70" fill="#1e36de" />
<rect x="213.00" y="551.60" width="1.00" height="3.70" fill="#1e36de" />
<rect x="216.00" y="551.60" width="2.00" height="3.70" fill="#1a32da" />
<rect x="235.00" y="551.60" width="1.00" height="3.70" fill="#233be3" />
<rect x="243.00" y="551.60" width="2.00" height="3.70" fill="#1d35dd" />
<rect x="256.00" y="551.60" width="1.00" height="3.70" fill="#1f37df" />
<rect x="262.00" y="551.60" width="2.00" height="3.70" fill="#2840e8" />
<rect x="265.00" y="551.60" width="2.00" height="3.70" fill="#1a32da" />
<rect x="274.00" y="551.60" width="1.00" height="3.70" fill="#2941e9" />
<rect x="284.00" y="551.60" width="2.00" height="3.70" fill="#172fd7" />
<rect x="287.00" y="551.60" width="1.00" height="3.70" fill="#243ce4" />
<rect x="301.00" y="551.60" width="1.00" height="3.70" fill="#1e36de" />
<rect x="303.00" y="551.60" width="1.00" height="3.70" fill="#1a32da" />
<rect x="309.00" y="551.60" width="1.00" height="3.70" fill="#263ee6" />
<rect x="316.00" y="551.60" width="2.00" height="3.70" fill="#1931d9" />
<rect x="334.00" y="551.60" width="2.00" height="3.70" fill="#1f37df" />
<rect x="352.00" y="551.60" width="2.00" height="3.70" fill="#1a32da" />
<rect x="367.00" y="551.60" width="2.00" height="3.70" fill="#1d35dd" />
<rect x="372.00" y="551.60" width="2.00" height="3.70" fill="#1d35dd" />
<rect x="395.00" y="551.60" width="2.00" height="3.70" fill="#2941e9" />
<rect x="399.00" y="551.60" width="1.00" height="3.70" fill="#273fe7" />
<rect x="405.00" y="551.60" width="2.00" height="3.70" fill="#253de5" />
<rect x="411.00" y="551.60" width="1.00" height="3.70" fill="#1a32da" />
<rect x="413.00" y="551.60" width="1.00" height="3.70" fill="#1931d9" />
<rect x="415.00" y="551.60" width="1.00" height="3.70" fill="#2840e8" />
<rect x="417.00" y="551.60" width="1.00" height="3.70" fill="#2139e1" />
<rect x="424.00" y="551.60" width="1.00" height="3.70" fill="#233be3" />
<rect x="442.00" y="551.60" width="2.00" height="3.70" fill="#233be3" />
<rect x="446.00" y="551.60" width="2.00" height="3.70" fill="#2139e1" />
<rect x="449.00" y="551.60" width="2.00" height="3.70" fill="#223ae2" />
<rect x="463.00" y="551.60" width="2.00" height="3.70" fill="#233be3" />
<rect x="466.00" y="551.60" width="3.00" height="3.70" fill="#1a32da" />
<rect x="486.00" y="551.60" width="2.00" height="3.70" fill="#172fd7" />
<rect x="490.00" y="551.60" width="2.00" height="3.70" fill="#1830d8" />
<rect x="495.00" y="551.60" width="1.00" height="3.70" fill="#1d35dd" />
<rect x="497.00" y="551.60" width="1.00" height="3.70" fill="#2941e9" />
<rect x="500.00" y="551.60" width="1.00" height="3.70" fill="#1b33db" />
<rect x="513.00" y="551.60" width="2.00" height="3.70" fill="#1b33db" />
<rect x="523.00" y="551.60" width="2.00" height="3.70" fill="#1a32da" />
<rect x="535.00" y="551.60" width="1.00" height="3.70" fill="#162ed6" />
<rect x="538.00" y="551.60" width="1.00" height="3.70" fill="#172fd7" />
<rect x="542.00" y="551.60" width="1.00" height="3.70" fill="#253de5" />
<rect x="560.00" y="551.60" width="1.00" height="3.70" fill="#243ce4" />
<rect x="563.00" y="551.60" width="1.00" height="3.70" fill="#233be3" />
<rect x="566.00" y="551.60" width="2.00" height="3.70" fill="#2941e9" />
<rect x="584.00" y="551.60" width="2.00" height="3.70" fill="#1a32da" />
<rect x="588.00" y="551.60" width="2.00" height="3.70" fill="#273fe7" />
<rect x="592.00" y="551.60" width="1.00" height="3.70" fill="#172fd7" />
<rect x="596.00" y="551.60" width="1.00" height="3.70" fill="#1e36de" />
<rect x="598.00" y="551.60" width="1.00" height="3.70" fill="#2139e1" />
<rect x="603.00" y="551.60" width="1.00" height="3.70" fill="#263ee6" />
<rect x="605.00" y="551.60" width="2.00" height="3.70" fill="#1830d8" />
<rect x="609.00" y="551.60" width="2.00" height="3.70" fill="#243ce4" />
<rect x="621.00" y="551.60" width="2.00" height="3.70" fill="#1e36de" />
<rect x="626.00" y="551.60" width="2.00" height="3.70" fill="#243ce4" />
<rect x="643.00" y="551.60" width="1.00" height="3.70" fill="#273fe7" />
<rect x="645.00" y="551.60" width="1.00" height="3.70" fill="#2139e1" />
<rect x="650.00" y="551.60" width="2.00" height="3.70" fill="#2941e9" />
<rect x="657.00" y="551.60" width="1.00" height="3.70" fill="#2941e9" />
<rect x="688.00" y="551.60" width="1.00" height="3.70" fill="#2840e8" />
<rect x="696.00" y="551.60" width="2.00" height="3.70" fill="#263ee6" />
<rect x="704.00" y="551.60" width="1.00" height="3.70" fill="#162ed6" />
<rect x="717.00" y="551.60" width="1.00" height="3.70" fill="#1d35dd" />
<rect x="720.00" y="551.60" width="2.00" height="3.70" fill="#2139e1" />
<rect x="742.00" y="551.60" width="2.00" height="3.70" fill="#1b33db" />
<rect x="750.00" y="551.60" width="2.00" height="3.70" fill="#1830d8" />
<rect x="759.00" y="551.60" width="1.00" height="3.70" fill="#273fe7" />
<rect x="766.00" y="551.60" width="2.00" height="3.70" fill="#233be3" />
<rect x="771.00" y="551.60" width="1.00" height="3.70" fill="#223ae2" />
<rect x="777.00" y="551.60" width="1.00" height="3.70" fill="#2941e9" />
<rect x="784.00" y="551.60" width="1.00" height="3.70" fill="#223ae2" />
<rect x="787.00" y="551.60" width="1.00" height="3.70" fill="#243ce4" />
<rect x="792.00" y="551.60" width="2.00" height="3.70" fill="#243ce4" />
<rect x="795.00" y="551.60" width="2.00" height="3.70" fill="#1a32da" />
<rect x="801.00" y="551.60" width="2.00" height="3.70" fill="#172fd7" />
<rect x="808.00" y="551.60" width="1.00" height="3.70" fill="#162ed6" />
<rect x="810.00" y="551.60" width="1.00" height="3.70" fill="#1a32da" />
<rect x="816.00" y="551.60" width="1.00" height="3.70" fill="#243ce4" />
<rect x="821.00" y="551.60" width="1.00" height="3.70" fill="#233be3" />
<rect x="832.00" y="551.60" width="1.00" height="3.70" fill="#243ce4" />
<rect x="840.00" y="551.60" width="2.00" height="3.70" fill="#1830d8" />
<rect x="849.00" y="551.60" width="1.00" height="3.70" fill="#1830d8" />
<rect x="856.00" y="551.60" width="1.00" height="3.70" fill="#1f37df" />
<rect x="865.00" y="551.60" width="2.00" height="3.70" fill="#1a32da" />
<rect x="868.00" y="551.60" width="2.00" height="3.70" fill="#223ae2" />
<rect x="872.00" y="551.60" width="1.00" height="3.70" fill="#263ee6" />
<rect x="885.00" y="551.60" width="1.00" height="3.70" fill="#162ed6" />
<rect x="888.00" y="551.60" width="1.00" height="3.70" fill="#263ee6" />
<rect x="893.00" y="551.60" width="2.00" height="3.70" fill="#2139e1" />
<rect x="903.00" y="551.60" width="2.00" height="3.70" fill="#1c34dc" />
<rect x="913.00" y="551.60" width="2.00" height="3.70" fill="#1a32da" />
<rect x="917.00" y="551.60" width="2.00" height="3.70" fill="#1c34dc" />
<rect x="922.00" y="551.60" width="1.00" height="3.70" fill="#1a32da" />
<rect x="924.00" y="551.60" width="1.00" height="3.70" fill="#1c34dc" />
<rect x="930.00" y="551.60" width="2.00" height="3.70" fill="#162ed6" />
<rect x="936.00" y="551.60" width="2.00" height="3.70" fill="#1d35dd" />
<rect x="955.00" y="551.60" width="1.00" height="3.70" fill="#273fe7" />
<rect x="961.00" y="551.60" width="2.00" height="3.70" fill="#1f37df" />
<rect x="967.00" y="551.60" width="1.00" height="3.70" fill="#1830d8" />
<rect x="984.00" y="551.60" width="2.00" height="3.70" fill="#2038e0" />
<rect x="987.00" y="551.60" width="2.00" height="3.70" fill="#253de5" />
<rect x="997.00" y="551.60" width="1.00" height="3.70" fill="#2139e1" />
<rect x="1008.00" y="551.60" width="2.00" height="3.70" fill="#1f37df" />
<rect x="1030.00" y="551.60" width="1.00" height="3.70" fill="#2139e1" />
<rect x="1036.00" y="551.60" width="1.00" height="3.70" fill="#1a32da" />
<rect x="1039.00" y="551.60" width="2.00" height="3.70" fill="#2840e8" />
<rect x="1045.00" y="551.60" width="2.00" height="3.70" fill="#1931d9" />
<rect x="1052.00" y="551.60" width="1.00" height="3.70" fill="#2139e1" />
<rect x="1055.00" y="551.60" width="4.00" height="3.70" fill="#2941e9" />
<rect x="1069.00" y="551.60" width="2.00" height="3.70" fill="#1830d8" />
<rect x="1073.00" y="551.60" width="2.00" height="3.70" fill="#1b33db" />
<rect x="109.00" y="555.30" width="4.00" height="12.90" fill="#2145e9" />
<rect x="120.00" y="555.30" width="2.00" height="12.90" fill="#1d41e5" />
<rect x="124.00" y="555.30" width="1.00" height="12.90" fill="#1b3fe3" />
<rect x="132.00" y="555.30" width="1.00" height="12.90" fill="#2246ea" />
<rect x="139.00" y="555.30" width="1.00" height="12.90" fill="#1a3ee2" />
<rect x="145.00" y="555.30" width="1.00" height="12.90" fill="#2549ed" />
<rect x="165.00" y="555.30" width="2.00" height="12.90" fill="#1f43e7" />
<rect x="169.00" y="555.30" width="1.00" height="12.90" fill="#2145e9" />
<rect x="174.00" y="555.30" width="2.00" height="12.90" fill="#1b3fe3" />
<rect x="181.00" y="555.30" width="1.00" height="12.90" fill="#2549ed" />
<rect x="187.00" y="555.30" width="2.00" height="12.90" fill="#2044e8" />
<rect x="192.00" y="555.30" width="1.00" height="12.90" fill="#183ce0" />
<rect x="195.00" y="555.30" width="1.00" height="12.90" fill="#1c40e4" />
<rect x="200.00" y="555.30" width="1.00" height="12.90" fill="#173bdf" />
<rect x="221.00" y="555.30" width="2.00" height="12.90" fill="#2448ec" />
<rect x="230.00" y="555.30" width="2.00" height="12.90" fill="#2347eb" />
<rect x="243.00" y="555.30" width="1.00" height="12.90" fill="#2549ed" />
<rect x="256.00" y="555.30" width="1.00" height="12.90" fill="#183ce0" />
<rect x="262.00" y="555.30" width="2.00" height="12.90" fill="#284cf0" />
<rect x="265.00" y="555.30" width="2.00" height="12.90" fill="#2347eb" />
<rect x="284.00" y="555.30" width="2.00" height="12.90" fill="#2448ec" />
<rect x="287.00" y="555.30" width="1.00" height="12.90" fill="#2044e8" />
<rect x="301.00" y="555.30" width="1.00" height="12.90" fill="#2347eb" />
<rect x="303.00" y="555.30" width="1.00" height="12.90" fill="#2145e9" />
<rect x="325.00" y="555.30" width="2.00" height="12.90" fill="#173bdf" />
<rect x="334.00" y="555.30" width="2.00" height="12.90" fill="#284cf0" />
<rect x="345.00" y="555.30" width="2.00" height="12.90" fill="#1d41e5" />
<rect x="359.00" y="555.30" width="2.00" height="12.90" fill="#1c40e4" />
<rect x="372.00" y="555.30" width="2.00" height="12.90" fill="#2347eb" />
<rect x="395.00" y="555.30" width="2.00" height="12.90" fill="#1d41e5" />
<rect x="405.00" y="555.30" width="2.00" height="12.90" fill="#1f43e7" />
<rect x="411.00" y="555.30" width="1.00" height="12.90" fill="#1d41e5" />
<rect x="413.00" y="555.30" width="1.00" height="12.90" fill="#2044e8" />
<rect x="417.00" y="555.30" width="1.00" height="12.90" fill="#294df1" />
<rect x="424.00" y="555.30" width="1.00" height="12.90" fill="#173bdf" />
<rect x="428.00" y="555.30" width="1.00" height="12.90" fill="#173bdf" />
<rect x="449.00" y="555.30" width="2.00" height="12.90" fill="#1a3ee2" />
<rect x="454.00" y="555.30" width="1.00" height="12.90" fill="#2448ec" />
<rect x="459.00" y="555.30" width="2.00" height="12.90" fill="#1e42e6" />
<rect x="463.00" y="555.30" width="2.00" height="12.90" fill="#274bef" />
<rect x="466.00" y="555.30" width="2.00" height="12.90" fill="#1f43e7" />
<rect x="480.00" y="555.30" width="1.00" height="12.90" fill="#274bef" />
<rect x="486.00" y="555.30" width="2.00" height="12.90" fill="#1e42e6" />
<rect x="490.00" y="555.30" width="2.00" height="12.90" fill="#294df1" />
<rect x="497.00" y="555.30" width="1.00" height="12.90" fill="#2347eb" />
<rect x="523.00" y="555.30" width="2.00" height="12.90" fill="#284cf0" />
<rect x="535.00" y="555.30" width="1.00" height="12.90" fill="#2347eb" />
<rect x="538.00" y="555.30" width="1.00" height="12.90" fill="#274bef" />
<rect x="542.00" y="555.30" width="1.00" height="12.90" fill="#274bef" />
<rect x="560.00" y="555.30" width="1.00" height="12.90" fill="#2246ea" />
<rect x="563.00" y="555.30" width="1.00" height="12.90" fill="#2448ec" />
<rect x="579.00" y="555.30" width="2.00" height="12.90" fill="#2347eb" />
<rect x="584.00" y="555.30" width="2.00" height="12.90" fill="#294df1" />
<rect x="587.00" y="555.30" width="1.00" height="12.90" fill="#1c40e4" />
<rect x="593.00" y="555.30" width="1.00" height="12.90" fill="#264aee" />
<rect x="596.00" y="555.30" width="1.00" height="12.90" fill="#264aee" />
<rect x="598.00" y="555.30" width="1.00" height="12.90" fill="#274bef" />
<rect x="603.00" y="555.30" width="1.00" height="12.90" fill="#264aee" />
<rect x="605.00" y="555.30" width="2.00" height="12.90" fill="#264aee" />
<rect x="620.00" y="555.30" width="3.00" height="12.90" fill="#2347eb" />
<rect x="624.00" y="555.30" width="4.00" height="12.90" fill="#1d41e5" />
<rect x="632.00" y="555.30" width="2.00" height="12.90" fill="#2246ea" />
<rect x="638.00" y="555.30" width="1.00" height="12.90" fill="#1c40e4" />
<rect x="643.00" y="555.30" width="1.00" height="12.90" fill="#173bdf" />
<rect x="645.00" y="555.30" width="1.00" height="12.90" fill="#2145e9" />
<rect x="650.00" y="555.30" width="2.00" height="12.90" fill="#193de1" />
<rect x="657.00" y="555.30" width="1.00" height="12.90" fill="#1b3fe3" />
<rect x="688.00" y="555.30" width="1.00" height="12.90" fill="#284cf0" />
<rect x="691.00" y="555.30" width="2.00" height="12.90" fill="#2044e8" />
<rect x="697.00" y="555.30" width="1.00" height="12.90" fill="#1e42e6" />
<rect x="704.00" y="555.30" width="3.00" height="12.90" fill="#2549ed" />
<rect x="710.00" y="555.30" width="1.00" height="12.90" fill="#2246ea" />
<rect x="716.00" y="555.30" width="1.00" height="12.90" fill="#1f43e7" />
<rect x="720.00" y="555.30" width="2.00" height="12.90" fill="#2347eb" />
<rect x="750.00" y="555.30" width="2.00" height="12.90" fill="#264aee" />
<rect x="759.00" y="555.30" width="1.00" height="12.90" fill="#294df1" />
<rect x="763.00" y="555.30" width="1.00" height="12.90" fill="#1f43e7" />
<rect x="766.00" y="555.30" width="2.00" height="12.90" fill="#163ade" />
<rect x="795.00" y="555.30" width="2.00" height="12.90" fill="#2246ea" />
<rect x="810.00" y="555.30" width="1.00" height="12.90" fill="#1c40e4" />
<rect x="814.00" y="555.30" width="1.00" height="12.90" fill="#274bef" />
<rect x="816.00" y="555.30" width="1.00" height="12.90" fill="#1b3fe3" />
<rect x="821.00" y="555.30" width="1.00" height="12.90" fill="#264aee" />
<rect x="840.00" y="555.30" width="2.00" height="12.90" fill="#1b3fe3" />
<rect x="849.00" y="555.30" width="1.00" height="12.90" fill="#193de1" />
<rect x="852.00" y="555.30" width="1.00" height="12.90" fill="#183ce0" />
<rect x="856.00" y="555.30" width="1.00" height="12.90" fill="#2549ed" />
<rect x="868.00" y="555.30" width="2.00" height="12.90" fill="#2347eb" />
<rect x="871.00" y="555.30" width="2.00" height="12.90" fill="#2448ec" />
<rect x="888.00" y="555.30" width="1.00" height="12.90" fill="#173bdf" />
<rect x="903.00" y="555.30" width="2.00" height="12.90" fill="#1e42e6" />
<rect x="908.00" y="555.30" width="1.00" height="12.90" fill="#2549ed" />
<rect x="913.00" y="555.30" width="2.00" height="12.90" fill="#1e42e6" />
<rect x="922.00" y="555.30" width="1.00" height="12.90" fill="#284cf0" />
<rect x="924.00" y="555.30" width="1.00" height="12.90" fill="#284cf0" />
<rect x="928.00" y="555.30" width="2.00" height="12.90" fill="#264aee" />
<rect x="936.00" y="555.30" width="2.00" height="12.90" fill="#1b3fe3" />
<rect x="941.00" y="555.30" width="2.00" height="12.90" fill="#2145e9" />
<rect x="953.00" y="555.30" width="1.00" height="12.90" fill="#173bdf" />
<rect x="955.00" y="555.30" width="1.00" height="12.90" fill="#2145e9" />
<rect x="967.00" y="555.30" width="1.00" height="12.90" fill="#1b3fe3" />
<rect x="979.00" y="555.30" width="1.00" height="12.90" fill="#1c40e4" />
<rect x="1008.00" y="555.30" width="2.00" height="12.90" fill="#183ce0" />
<rect x="1045.00" y="555.30" width="2.00" height="12.90" fill="#1c40e4" />
<rect x="1052.00" y="555.30" width="2.00" height="12.90" fill="#1a3ee2" />
<rect x="1057.00" y="555.30" width="2.00" height="12.90" fill="#1b3fe3" />
<rect x="1069.00" y="555.30" width="2.00" height="12.90" fill="#193de1" />
<rect x="1075.00" y="555.30" width="2.00" height="12.90" fill="#1d41e5" />
<rect x="1079.00" y="555.30" width="1.00" height="12.90" fill="#274bef" />
<rect x="97.00" y="568.20" width="2.00" height="12.00" fill="#1850f0" />
<rect x="101.00" y="568.20" width="2.00" height="12.00" fill="#174fef" />
<rect x="109.00" y="568.20" width="4.00" height="12.00" fill="#1e56f6" />
<rect x="116.00" y="568.20" width="1.00" height="12.00" fill="#1e56f6" />
<rect x="124.00" y="568.20" width="1.00" height="12.00" fill="#1a52f2" />
<rect x="132.00" y="568.20" width="1.00" height="12.00" fill="#134beb" />
<rect x="136.00" y="568.20" width="3.00" height="12.00" fill="#2159f9" />
<rect x="163.00" y="568.20" width="1.00" height="12.00" fill="#2159f9" />
<rect x="165.00" y="568.20" width="1.00" height="12.00" fill="#1f57f7" />
<rect x="169.00" y="568.20" width="1.00" height="12.00" fill="#1850f0" />
<rect x="174.00" y="568.20" width="2.00" height="12.00" fill="#1f57f7" />
<rect x="181.00" y="568.20" width="1.00" height="12.00" fill="#144cec" />
<rect x="187.00" y="568.20" width="2.00" height="12.00" fill="#1c54f4" />
<rect x="192.00" y="568.20" width="1.00" height="12.00" fill="#1951f1" />
<rect x="195.00" y="568.20" width="1.00" height="12.00" fill="#174fef" />
<rect x="198.00" y="568.20" width="3.00" height="12.00" fill="#1e56f6" />
<rect x="214.00" y="568.20" width="2.00" height="12.00" fill="#1a52f2" />
<rect x="220.00" y="568.20" width="3.00" height="12.00" fill="#1951f1" />
<rect x="229.00" y="568.20" width="1.00" height="12.00" fill="#1f57f7" />
<rect x="234.00" y="568.20" width="1.00" height="12.00" fill="#144cec" />
<rect x="238.00" y="568.20" width="1.00" height="12.00" fill="#124aea" />
<rect x="243.00" y="568.20" width="1.00" height="12.00" fill="#1951f1" />
<rect x="256.00" y="568.20" width="1.00" height="12.00" fill="#2058f8" />
<rect x="262.00" y="568.20" width="2.00" height="12.00" fill="#174fef" />
<rect x="265.00" y="568.20" width="2.00" height="12.00" fill="#1a52f2" />
<rect x="284.00" y="568.20" width="2.00" height="12.00" fill="#2159f9" />
<rect x="301.00" y="568.20" width="1.00" height="12.00" fill="#2058f8" />
<rect x="325.00" y="568.20" width="2.00" height="12.00" fill="#1e56f6" />
<rect x="334.00" y="568.20" width="2.00" height="12.00" fill="#1c54f4" />
<rect x="339.00" y="568.20" width="1.00" height="12.00" fill="#1149e9" />
<rect x="345.00" y="568.20" width="2.00" height="12.00" fill="#2159f9" />
<rect x="357.00" y="568.20" width="2.00" height="12.00" fill="#1b53f3" />
<rect x="372.00" y="568.20" width="2.00" height="12.00" fill="#174fef" />
<rect x="376.00" y="568.20" width="1.00" height="12.00" fill="#134beb" />
<rect x="390.00" y="568.20" width="1.00" height="12.00" fill="#1b53f3" />
<rect x="395.00" y="568.20" width="2.00" height="12.00" fill="#1c54f4" />
<rect x="405.00" y="568.20" width="2.00" height="12.00" fill="#164eee" />
<rect x="411.00" y="568.20" width="1.00" height="12.00" fill="#1951f1" />
<rect x="413.00" y="568.20" width="1.00" height="12.00" fill="#164eee" />
<rect x="415.00" y="568.20" width="1.00" height="12.00" fill="#1951f1" />
<rect x="428.00" y="568.20" width="1.00" height="12.00" fill="#0f47e7" />
<rect x="431.00" y="568.20" width="1.00" height="12.00" fill="#1f57f7" />
<rect x="434.00" y="568.20" width="1.00" height="12.00" fill="#134beb" />
<rect x="438.00" y="568.20" width="1.00" height="12.00" fill="#134beb" />
<rect x="442.00" y="568.20" width="2.00" height="12.00" fill="#1951f1" />
<rect x="454.00" y="568.20" width="1.00" height="12.00" fill="#1b53f3" />
<rect x="459.00" y="568.20" width="2.00" height="12.00" fill="#164eee" />
<rect x="463.00" y="568.20" width="2.00" height="12.00" fill="#2159f9" />
<rect x="472.00" y="568.20" width="2.00" height="12.00" fill="#144cec" />
<rect x="480.00" y="568.20" width="1.00" height="12.00" fill="#144cec" />
<rect x="486.00" y="568.20" width="2.00" height="12.00" fill="#2058f8" />
<rect x="490.00" y="568.20" width="2.00" height="12.00" fill="#1149e9" />
<rect x="497.00" y="568.20" width="1.00" height="12.00" fill="#154ded" />
<rect x="500.00" y="568.20" width="1.00" height="12.00" fill="#1850f0" />
<rect x="523.00" y="568.20" width="2.00" height="12.00" fill="#1c54f4" />
<rect x="535.00" y="568.20" width="1.00" height="12.00" fill="#1149e9" />
<rect x="538.00" y="568.20" width="3.00" height="12.00" fill="#134beb" />
<rect x="542.00" y="568.20" width="1.00" height="12.00" fill="#174fef" />
<rect x="560.00" y="568.20" width="1.00" height="12.00" fill="#144cec" />
<rect x="563.00" y="568.20" width="1.00" height="12.00" fill="#1850f0" />
<rect x="579.00" y="568.20" width="2.00" height="12.00" fill="#2058f8" />
<rect x="582.00" y="568.20" width="2.00" height="12.00" fill="#1048e8" />
<rect x="601.00" y="568.20" width="3.00" height="12.00" fill="#174fef" />
<rect x="605.00" y="568.20" width="2.00" height="12.00" fill="#1a52f2" />
<rect x="616.00" y="568.20" width="2.00" height="12.00" fill="#1850f0" />
<rect x="620.00" y="568.20" width="1.00" height="12.00" fill="#1048e8" />
<rect x="623.00" y="568.20" width="1.00" height="12.00" fill="#0e46e6" />
<rect x="626.00" y="568.20" width="2.00" height="12.00" fill="#1048e8" />
<rect x="632.00" y="568.20" width="2.00" height="12.00" fill="#1048e8" />
<rect x="638.00" y="568.20" width="1.00" height="12.00" fill="#1f57f7" />
<rect x="643.00" y="568.20" width="1.00" height="12.00" fill="#1149e9" />
<rect x="645.00" y="568.20" width="1.00" height="12.00" fill="#1b53f3" />
<rect x="652.00" y="568.20" width="1.00" height="12.00" fill="#154ded" />
<rect x="657.00" y="568.20" width="1.00" height="12.00" fill="#1c54f4" />
<rect x="688.00" y="568.20" width="1.00" height="12.00" fill="#2058f8" />
<rect x="691.00" y="568.20" width="2.00" height="12.00" fill="#2058f8" />
<rect x="697.00" y="568.20" width="1.00" height="12.00" fill="#144cec" />
<rect x="705.00" y="568.20" width="2.00" height="12.00" fill="#1b53f3" />
<rect x="710.00" y="568.20" width="1.00" height="12.00" fill="#174fef" />
<rect x="729.00" y="568.20" width="1.00" height="12.00" fill="#2159f9" />
<rect x="746.00" y="568.20" width="2.00" height="12.00" fill="#1d55f5" />
<rect x="750.00" y="568.20" width="3.00" height="12.00" fill="#2159f9" />
<rect x="757.00" y="568.20" width="2.00" height="12.00" fill="#134beb" />
<rect x="779.00" y="568.20" width="1.00" height="12.00" fill="#1149e9" />
<rect x="792.00" y="568.20" width="2.00" height="12.00" fill="#1e56f6" />
<rect x="795.00" y="568.20" width="2.00" height="12.00" fill="#2159f9" />
<rect x="798.00" y="568.20" width="3.00" height="12.00" fill="#144cec" />
<rect x="814.00" y="568.20" width="1.00" height="12.00" fill="#1c54f4" />
<rect x="816.00" y="568.20" width="1.00" height="12.00" fill="#0f47e7" />
<rect x="819.00" y="568.20" width="2.00" height="12.00" fill="#124aea" />
<rect x="834.00" y="568.20" width="2.00" height="12.00" fill="#2058f8" />
<rect x="838.00" y="568.20" width="4.00" height="12.00" fill="#1a52f2" />
<rect x="849.00" y="568.20" width="1.00" height="12.00" fill="#2159f9" />
<rect x="852.00" y="568.20" width="1.00" height="12.00" fill="#1149e9" />
<rect x="868.00" y="568.20" width="2.00" height="12.00" fill="#1149e9" />
<rect x="872.00" y="568.20" width="1.00" height="12.00" fill="#134beb" />
<rect x="888.00" y="568.20" width="1.00" height="12.00" fill="#1149e9" />
<rect x="893.00" y="568.20" width="2.00" height="12.00" fill="#0e46e6" />
<rect x="912.00" y="568.20" width="1.00" height="12.00" fill="#2058f8" />
<rect x="922.00" y="568.20" width="1.00" height="12.00" fill="#1048e8" />
<rect x="924.00" y="568.20" width="1.00" height="12.00" fill="#2159f9" />
<rect x="928.00" y="568.20" width="2.00" height="12.00" fill="#1a52f2" />
<rect x="941.00" y="568.20" width="2.00" height="12.00" fill="#2058f8" />
<rect x="955.00" y="568.20" width="1.00" height="12.00" fill="#164eee" />
<rect x="967.00" y="568.20" width="1.00" height="12.00" fill="#1b53f3" />
<rect x="975.00" y="568.20" width="1.00" height="12.00" fill="#1951f1" />
<rect x="979.00" y="568.20" width="1.00" height="12.00" fill="#1d55f5" />
<rect x="993.00" y="568.20" width="2.00" height="12.00" fill="#1a52f2" />
<rect x="1008.00" y="568.20" width="2.00" height="12.00" fill="#144cec" />
<rect x="1030.00" y="568.20" width="1.00" height="12.00" fill="#134beb" />
<rect x="1033.00" y="568.20" width="3.00" height="12.00" fill="#124aea" />
<rect x="1053.00" y="568.20" width="1.00" height="12.00" fill="#1048e8" />
<rect x="1075.00" y="568.20" width="2.00" height="12.00" fill="#134beb" />
<rect x="1078.00" y="568.20" width="1.00" height="12.00" fill="#1d55f5" />
<rect x="97.00" y="580.20" width="2.00" height="3.80" fill="#1262ea" />
<rect x="101.00" y="580.20" width="2.00" height="3.80" fill="#1161e9" />
<rect x="109.00" y="580.20" width="4.00" height="3.80" fill="#1868f0" />
<rect x="116.00" y="580.20" width="2.00" height="3.80" fill="#1363eb" />
<rect x="124.00" y="580.20" width="1.00" height="3.80" fill="#0e5ee6" />
<rect x="132.00" y="580.20" width="1.00" height="3.80" fill="#1c6cf4" />
<rect x="136.00" y="580.20" width="1.00" height="3.80" fill="#1464ec" />
<rect x="159.00" y="580.20" width="2.00" height="3.80" fill="#1767ef" />
<rect x="163.00" y="580.20" width="1.00" height="3.80" fill="#1161e9" />
<rect x="165.00" y="580.20" width="1.00" height="3.80" fill="#1c6cf4" />
<rect x="169.00" y="580.20" width="1.00" height="3.80" fill="#1d6df5" />
<rect x="174.00" y="580.20" width="2.00" height="3.80" fill="#1262ea" />
<rect x="179.00" y="580.20" width="2.00" height="3.80" fill="#1868f0" />
<rect x="187.00" y="580.20" width="2.00" height="3.80" fill="#1161e9" />
<rect x="190.00" y="580.20" width="2.00" height="3.80" fill="#1c6cf4" />
<rect x="195.00" y="580.20" width="1.00" height="3.80" fill="#1868f0" />
<rect x="198.00" y="580.20" width="3.00" height="3.80" fill="#1868f0" />
<rect x="214.00" y="580.20" width="2.00" height="3.80" fill="#1464ec" />
<rect x="220.00" y="580.20" width="1.00" height="3.80" fill="#1666ee" />
<rect x="225.00" y="580.20" width="2.00" height="3.80" fill="#1666ee" />
<rect x="229.00" y="580.20" width="1.00" height="3.80" fill="#1161e9" />
<rect x="234.00" y="580.20" width="1.00" height="3.80" fill="#1767ef" />
<rect x="238.00" y="580.20" width="1.00" height="3.80" fill="#1b6bf3" />
<rect x="243.00" y="580.20" width="1.00" height="3.80" fill="#1b6bf3" />
<rect x="249.00" y="580.20" width="1.00" height="3.80" fill="#2171f9" />
<rect x="256.00" y="580.20" width="1.00" height="3.80" fill="#1262ea" />
<rect x="262.00" y="580.20" width="2.00" height="3.80" fill="#1f6ff7" />
<rect x="265.00" y="580.20" width="2.00" height="3.80" fill="#1767ef" />
<rect x="284.00" y="580.20" width="2.00" height="3.80" fill="#1f6ff7" />
<rect x="301.00" y="580.20" width="1.00" height="3.80" fill="#0f5fe7" />
<rect x="307.00" y="580.20" width="2.00" height="3.80" fill="#1b6bf3" />
<rect x="325.00" y="580.20" width="2.00" height="3.80" fill="#1363eb" />
<rect x="334.00" y="580.20" width="2.00" height="3.80" fill="#1464ec" />
<rect x="339.00" y="580.20" width="1.00" height="3.80" fill="#1b6bf3" />
<rect x="345.00" y="580.20" width="2.00" height="3.80" fill="#1767ef" />
<rect x="357.00" y="580.20" width="2.00" height="3.80" fill="#1666ee" />
<rect x="372.00" y="580.20" width="2.00" height="3.80" fill="#1161e9" />
<rect x="376.00" y="580.20" width="1.00" height="3.80" fill="#1767ef" />
<rect x="395.00" y="580.20" width="2.00" height="3.80" fill="#1161e9" />
<rect x="405.00" y="580.20" width="2.00" height="3.80" fill="#1e6ef6" />
<rect x="411.00" y="580.20" width="1.00" height="3.80" fill="#1363eb" />
<rect x="413.00" y="580.20" width="1.00" height="3.80" fill="#1767ef" />
<rect x="415.00" y="580.20" width="1.00" height="3.80" fill="#1e6ef6" />
<rect x="428.00" y="580.20" width="1.00" height="3.80" fill="#1b6bf3" />
<rect x="430.00" y="580.20" width="2.00" height="3.80" fill="#1c6cf4" />
<rect x="434.00" y="580.20" width="1.00" height="3.80" fill="#1161e9" />
<rect x="438.00" y="580.20" width="1.00" height="3.80" fill="#2070f8" />
<rect x="442.00" y="580.20" width="2.00" height="3.80" fill="#1767ef" />
<rect x="454.00" y="580.20" width="1.00" height="3.80" fill="#0e5ee6" />
<rect x="463.00" y="580.20" width="2.00" height="3.80" fill="#2171f9" />
<rect x="475.00" y="580.20" width="2.00" height="3.80" fill="#1767ef" />
<rect x="480.00" y="580.20" width="2.00" height="3.80" fill="#1969f1" />
<rect x="486.00" y="580.20" width="2.00" height="3.80" fill="#1565ed" />
<rect x="490.00" y="580.20" width="2.00" height="3.80" fill="#2070f8" />
<rect x="500.00" y="580.20" width="2.00" height="3.80" fill="#1d6df5" />
<rect x="504.00" y="580.20" width="2.00" height="3.80" fill="#1f6ff7" />
<rect x="523.00" y="580.20" width="2.00" height="3.80" fill="#1868f0" />
<rect x="535.00" y="580.20" width="1.00" height="3.80" fill="#1868f0" />
<rect x="538.00" y="580.20" width="3.00" height="3.80" fill="#1e6ef6" />
<rect x="542.00" y="580.20" width="1.00" height="3.80" fill="#1060e8" />
<rect x="554.00" y="580.20" width="2.00" height="3.80" fill="#1c6cf4" />
<rect x="560.00" y="580.20" width="1.00" height="3.80" fill="#1e6ef6" />
<rect x="563.00" y="580.20" width="1.00" height="3.80" fill="#1e6ef6" />
<rect x="566.00" y="580.20" width="2.00" height="3.80" fill="#1464ec" />
<rect x="579.00" y="580.20" width="2.00" height="3.80" fill="#1161e9" />
<rect x="582.00" y="580.20" width="2.00" height="3.80" fill="#1f6ff7" />
<rect x="587.00" y="580.20" width="1.00" height="3.80" fill="#1969f1" />
<rect x="601.00" y="580.20" width="3.00" height="3.80" fill="#1e6ef6" />
<rect x="605.00" y="580.20" width="2.00" height="3.80" fill="#1666ee" />
<rect x="616.00" y="580.20" width="2.00" height="3.80" fill="#2070f8" />
<rect x="620.00" y="580.20" width="1.00" height="3.80" fill="#0e5ee6" />
<rect x="623.00" y="580.20" width="1.00" height="3.80" fill="#1969f1" />
<rect x="626.00" y="580.20" width="2.00" height="3.80" fill="#1c6cf4" />
<rect x="632.00" y="580.20" width="2.00" height="3.80" fill="#1060e8" />
<rect x="643.00" y="580.20" width="1.00" height="3.80" fill="#1b6bf3" />
<rect x="645.00" y="580.20" width="1.00" height="3.80" fill="#0f5fe7" />
<rect x="652.00" y="580.20" width="1.00" height="3.80" fill="#1d6df5" />
<rect x="657.00" y="580.20" width="1.00" height="3.80" fill="#1a6af2" />
<rect x="691.00" y="580.20" width="2.00" height="3.80" fill="#2171f9" />
<rect x="697.00" y="580.20" width="1.00" height="3.80" fill="#1f6ff7" />
<rect x="705.00" y="580.20" width="2.00" height="3.80" fill="#1666ee" />
<rect x="710.00" y="580.20" width="1.00" height="3.80" fill="#1262ea" />
<rect x="729.00" y="580.20" width="1.00" height="3.80" fill="#1565ed" />
<rect x="739.00" y="580.20" width="2.00" height="3.80" fill="#1767ef" />
<rect x="742.00" y="580.20" width="2.00" height="3.80" fill="#1666ee" />
<rect x="746.00" y="580.20" width="2.00" height="3.80" fill="#1868f0" />
<rect x="750.00" y="580.20" width="2.00" height="3.80" fill="#1d6df5" />
<rect x="757.00" y="580.20" width="2.00" height="3.80" fill="#1060e8" />
<rect x="766.00" y="580.20" width="2.00" height="3.80" fill="#1464ec" />
<rect x="779.00" y="580.20" width="1.00" height="3.80" fill="#1060e8" />
<rect x="795.00" y="580.20" width="2.00" height="3.80" fill="#1e6ef6" />
<rect x="798.00" y="580.20" width="2.00" height="3.80" fill="#1b6bf3" />
<rect x="816.00" y="580.20" width="1.00" height="3.80" fill="#1464ec" />
<rect x="819.00" y="580.20" width="2.00" height="3.80" fill="#1c6cf4" />
<rect x="838.00" y="580.20" width="2.00" height="3.80" fill="#1a6af2" />
<rect x="849.00" y="580.20" width="1.00" height="3.80" fill="#0e5ee6" />
<rect x="852.00" y="580.20" width="1.00" height="3.80" fill="#1f6ff7" />
<rect x="854.00" y="580.20" width="1.00" height="3.80" fill="#1666ee" />
<rect x="868.00" y="580.20" width="2.00" height="3.80" fill="#1b6bf3" />
<rect x="888.00" y="580.20" width="1.00" height="3.80" fill="#1b6bf3" />
<rect x="893.00" y="580.20" width="2.00" height="3.80" fill="#2171f9" />
<rect x="912.00" y="580.20" width="1.00" height="3.80" fill="#1868f0" />
<rect x="921.00" y="580.20" width="2.00" height="3.80" fill="#1363eb" />
<rect x="926.00" y="580.20" width="2.00" height="3.80" fill="#0e5ee6" />
<rect x="932.00" y="580.20" width="2.00" height="3.80" fill="#1363eb" />
<rect x="941.00" y="580.20" width="2.00" height="3.80" fill="#1262ea" />
<rect x="955.00" y="580.20" width="1.00" height="3.80" fill="#1b6bf3" />
<rect x="959.00" y="580.20" width="1.00" height="3.80" fill="#0f5fe7" />
<rect x="967.00" y="580.20" width="1.00" height="3.80" fill="#1d6df5" />
<rect x="975.00" y="580.20" width="1.00" height="3.80" fill="#1363eb" />
<rect x="979.00" y="580.20" width="1.00" height="3.80" fill="#1161e9" />
<rect x="1008.00" y="580.20" width="2.00" height="3.80" fill="#1969f1" />
<rect x="1018.00" y="580.20" width="1.00" height="3.80" fill="#1c6cf4" />
<rect x="1030.00" y="580.20" width="1.00" height="3.80" fill="#1161e9" />
<rect x="1033.00" y="580.20" width="3.00" height="3.80" fill="#1767ef" />
<rect x="1053.00" y="580.20" width="1.00" height="3.80" fill="#1363eb" />
<rect x="1075.00" y="580.20" width="2.00" height="3.80" fill="#1a6af2" />
<rect x="1078.00" y="580.20" width="1.00" height="3.80" fill="#1868f0" />
<rect x="1080.00" y="580.20" width="1.00" height="3.80" fill="#1c6cf4" />
<rect x="97.00" y="584.00" width="2.00" height="21.20" fill="#1488e0" />
<rect x="101.00" y="584.00" width="2.00" height="21.20" fill="#1084dc" />
<rect x="107.00" y="584.00" width="1.00" height="21.20" fill="#198de5" />
<rect x="111.00" y="584.00" width="2.00" height="21.20" fill="#1d91e9" />
<rect x="116.00" y="584.00" width="2.00" height="21.20" fill="#1488e0" />
<rect x="123.00" y="584.00" width="1.00" height="21.20" fill="#1488e0" />
<rect x="132.00" y="584.00" width="1.00" height="21.20" fill="#1c90e8" />
<rect x="135.00" y="584.00" width="1.00" height="21.20" fill="#1e92ea" />
<rect x="143.00" y="584.00" width="2.00" height="21.20" fill="#1a8ee6" />
<rect x="146.00" y="584.00" width="2.00" height="21.20" fill="#1286de" />
<rect x="152.00" y="584.00" width="1.00" height="21.20" fill="#2094ec" />
<rect x="163.00" y="584.00" width="2.00" height="21.20" fill="#178be3" />
<rect x="167.00" y="584.00" width="5.00" height="21.20" fill="#1589e1" />
<rect x="174.00" y="584.00" width="2.00" height="21.20" fill="#1b8fe7" />
<rect x="177.00" y="584.00" width="1.00" height="21.20" fill="#1d91e9" />
<rect x="179.00" y="584.00" width="2.00" height="21.20" fill="#1589e1" />
<rect x="187.00" y="584.00" width="2.00" height="21.20" fill="#1286de" />
<rect x="190.00" y="584.00" width="3.00" height="21.20" fill="#1e92ea" />
<rect x="195.00" y="584.00" width="1.00" height="21.20" fill="#0e82da" />
<rect x="197.00" y="584.00" width="3.00" height="21.20" fill="#1084dc" />
<rect x="201.00" y="584.00" width="2.00" height="21.20" fill="#1d91e9" />
<rect x="209.00" y="584.00" width="2.00" height="21.20" fill="#1e92ea" />
<rect x="214.00" y="584.00" width="2.00" height="21.20" fill="#1185dd" />
<rect x="220.00" y="584.00" width="1.00" height="21.20" fill="#0f83db" />
<rect x="223.00" y="584.00" width="1.00" height="21.20" fill="#1e92ea" />
<rect x="225.00" y="584.00" width="2.00" height="21.20" fill="#1f93eb" />
<rect x="234.00" y="584.00" width="1.00" height="21.20" fill="#1589e1" />
<rect x="239.00" y="584.00" width="2.00" height="21.20" fill="#188ce4" />
<rect x="243.00" y="584.00" width="1.00" height="21.20" fill="#2094ec" />
<rect x="249.00" y="584.00" width="1.00" height="21.20" fill="#198de5" />
<rect x="256.00" y="584.00" width="1.00" height="21.20" fill="#1b8fe7" />
<rect x="262.00" y="584.00" width="2.00" height="21.20" fill="#1e92ea" />
<rect x="269.00" y="584.00" width="2.00" height="21.20" fill="#178be3" />
<rect x="275.00" y="584.00" width="1.00" height="21.20" fill="#178be3" />
<rect x="282.00" y="584.00" width="4.00" height="21.20" fill="#1c90e8" />
<rect x="287.00" y="584.00" width="1.00" height="21.20" fill="#0f83db" />
<rect x="299.00" y="584.00" width="3.00" height="21.20" fill="#1e92ea" />
<rect x="304.00" y="584.00" width="1.00" height="21.20" fill="#1f93eb" />
<rect x="307.00" y="584.00" width="3.00" height="21.20" fill="#1a8ee6" />
<rect x="314.00" y="584.00" width="2.00" height="21.20" fill="#1488e0" />
<rect x="321.00" y="584.00" width="2.00" height="21.20" fill="#1a8ee6" />
<rect x="325.00" y="584.00" width="2.00" height="21.20" fill="#2094ec" />
<rect x="329.00" y="584.00" width="1.00" height="21.20" fill="#1a8ee6" />
<rect x="339.00" y="584.00" width="1.00" height="21.20" fill="#1d91e9" />
<rect x="342.00" y="584.00" width="3.00" height="21.20" fill="#2195ed" />
<rect x="347.00" y="584.00" width="2.00" height="21.20" fill="#1387df" />
<rect x="350.00" y="584.00" width="2.00" height="21.20" fill="#1387df" />
<rect x="359.00" y="584.00" width="6.00" height="21.20" fill="#1d91e9" />
<rect x="369.00" y="584.00" width="2.00" height="21.20" fill="#2094ec" />
<rect x="372.00" y="584.00" width="2.00" height="21.20" fill="#1084dc" />
<rect x="388.00" y="584.00" width="2.00" height="21.20" fill="#1286de" />
<rect x="393.00" y="584.00" width="4.00" height="21.20" fill="#1e92ea" />
<rect x="399.00" y="584.00" width="1.00" height="21.20" fill="#1488e0" />
<rect x="402.00" y="584.00" width="2.00" height="21.20" fill="#0e82da" />
<rect x="405.00" y="584.00" width="2.00" height="21.20" fill="#1488e0" />
<rect x="411.00" y="584.00" width="1.00" height="21.20" fill="#1286de" />
<rect x="413.00" y="584.00" width="2.00" height="21.20" fill="#1a8ee6" />
<rect x="416.00" y="584.00" width="1.00" height="21.20" fill="#1589e1" />
<rect x="420.00" y="584.00" width="2.00" height="21.20" fill="#1387df" />
<rect x="430.00" y="584.00" width="1.00" height="21.20" fill="#1a8ee6" />
<rect x="434.00" y="584.00" width="1.00" height="21.20" fill="#1c90e8" />
<rect x="436.00" y="584.00" width="2.00" height="21.20" fill="#1a8ee6" />
<rect x="442.00" y="584.00" width="2.00" height="21.20" fill="#1a8ee6" />
<rect x="448.00" y="584.00" width="1.00" height="21.20" fill="#1084dc" />
<rect x="451.00" y="584.00" width="2.00" height="21.20" fill="#2094ec" />
<rect x="454.00" y="584.00" width="1.00" height="21.20" fill="#188ce4" />
<rect x="459.00" y="584.00" width="2.00" height="21.20" fill="#188ce4" />
<rect x="463.00" y="584.00" width="2.00" height="21.20" fill="#2094ec" />
<rect x="468.00" y="584.00" width="1.00" height="21.20" fill="#1387df" />
<rect x="477.00" y="584.00" width="2.00" height="21.20" fill="#1387df" />
<rect x="480.00" y="584.00" width="2.00" height="21.20" fill="#1c90e8" />
<rect x="485.00" y="584.00" width="1.00" height="21.20" fill="#1b8fe7" />
<rect x="490.00" y="584.00" width="2.00" height="21.20" fill="#1589e1" />
<rect x="496.00" y="584.00" width="1.00" height="21.20" fill="#1488e0" />
<rect x="501.00" y="584.00" width="2.00" height="21.20" fill="#178be3" />
<rect x="512.00" y="584.00" width="1.00" height="21.20" fill="#0e82da" />
<rect x="518.00" y="584.00" width="2.00" height="21.20" fill="#1589e1" />
<rect x="521.00" y="584.00" width="1.00" height="21.20" fill="#1f93eb" />
<rect x="523.00" y="584.00" width="2.00" height="21.20" fill="#1084dc" />
<rect x="526.00" y="584.00" width="3.00" height="21.20" fill="#1e92ea" />
<rect x="535.00" y="584.00" width="1.00" height="21.20" fill="#2094ec" />
<rect x="541.00" y="584.00" width="1.00" height="21.20" fill="#1589e1" />
<rect x="554.00" y="584.00" width="2.00" height="21.20" fill="#198de5" />
<rect x="560.00" y="584.00" width="1.00" height="21.20" fill="#1589e1" />
<rect x="563.00" y="584.00" width="1.00" height="21.20" fill="#178be3" />
<rect x="566.00" y="584.00" width="2.00" height="21.20" fill="#178be3" />
<rect x="570.00" y="584.00" width="1.00" height="21.20" fill="#1589e1" />
<rect x="577.00" y="584.00" width="2.00" height="21.20" fill="#1f93eb" />
<rect x="582.00" y="584.00" width="2.00" height="21.20" fill="#168ae2" />
<rect x="590.00" y="584.00" width="2.00" height="21.20" fill="#1185dd" />
<rect x="593.00" y="584.00" width="1.00" height="21.20" fill="#2094ec" />
<rect x="599.00" y="584.00" width="2.00" height="21.20" fill="#178be3" />
<rect x="605.00" y="584.00" width="2.00" height="21.20" fill="#1d91e9" />
<rect x="609.00" y="584.00" width="2.00" height="21.20" fill="#1589e1" />
<rect x="620.00" y="584.00" width="1.00" height="21.20" fill="#1387df" />
<rect x="623.00" y="584.00" width="1.00" height="21.20" fill="#1589e1" />
<rect x="626.00" y="584.00" width="2.00" height="21.20" fill="#178be3" />
<rect x="632.00" y="584.00" width="3.00" height="21.20" fill="#1185dd" />
<rect x="637.00" y="584.00" width="1.00" height="21.20" fill="#1a8ee6" />
<rect x="643.00" y="584.00" width="1.00" height="21.20" fill="#1d91e9" />
<rect x="650.00" y="584.00" width="2.00" height="21.20" fill="#1c90e8" />
<rect x="653.00" y="584.00" width="1.00" height="21.20" fill="#1084dc" />
<rect x="657.00" y="584.00" width="1.00" height="21.20" fill="#2195ed" />
<rect x="660.00" y="584.00" width="1.00" height="21.20" fill="#178be3" />
<rect x="667.00" y="584.00" width="2.00" height="21.20" fill="#1589e1" />
<rect x="671.00" y="584.00" width="2.00" height="21.20" fill="#1d91e9" />
<rect x="676.00" y="584.00" width="2.00" height="21.20" fill="#1589e1" />
<rect x="679.00" y="584.00" width="2.00" height="21.20" fill="#1488e0" />
<rect x="683.00" y="584.00" width="1.00" height="21.20" fill="#2195ed" />
<rect x="688.00" y="584.00" width="1.00" height="21.20" fill="#1185dd" />
<rect x="691.00" y="584.00" width="2.00" height="21.20" fill="#0f83db" />
<rect x="701.00" y="584.00" width="2.00" height="21.20" fill="#1e92ea" />
<rect x="704.00" y="584.00" width="3.00" height="21.20" fill="#1c90e8" />
<rect x="708.00" y="584.00" width="2.00" height="21.20" fill="#1589e1" />
<rect x="714.00" y="584.00" width="2.00" height="21.20" fill="#1c90e8" />
<rect x="717.00" y="584.00" width="1.00" height="21.20" fill="#1488e0" />
<rect x="724.00" y="584.00" width="1.00" height="21.20" fill="#1a8ee6" />
<rect x="729.00" y="584.00" width="1.00" height="21.20" fill="#1c90e8" />
<rect x="739.00" y="584.00" width="2.00" height="21.20" fill="#2195ed" />
<rect x="750.00" y="584.00" width="2.00" height="21.20" fill="#1f93eb" />
<rect x="753.00" y="584.00" width="1.00" height="21.20" fill="#188ce4" />
<rect x="755.00" y="584.00" width="1.00" height="21.20" fill="#1084dc" />
<rect x="757.00" y="584.00" width="2.00" height="21.20" fill="#188ce4" />
<rect x="762.00" y="584.00" width="4.00" height="21.20" fill="#0f83db" />
<rect x="768.00" y="584.00" width="1.00" height="21.20" fill="#198de5" />
<rect x="772.00" y="584.00" width="1.00" height="21.20" fill="#2094ec" />
<rect x="779.00" y="584.00" width="1.00" height="21.20" fill="#1b8fe7" />
<rect x="781.00" y="584.00" width="1.00" height="21.20" fill="#178be3" />
<rect x="787.00" y="584.00" width="1.00" height="21.20" fill="#1b8fe7" />
<rect x="790.00" y="584.00" width="4.00" height="21.20" fill="#1084dc" />
<rect x="795.00" y="584.00" width="2.00" height="21.20" fill="#1b8fe7" />
<rect x="798.00" y="584.00" width="2.00" height="21.20" fill="#198de5" />
<rect x="808.00" y="584.00" width="1.00" height="21.20" fill="#1b8fe7" />
<rect x="810.00" y="584.00" width="1.00" height="21.20" fill="#198de5" />
<rect x="814.00" y="584.00" width="1.00" height="21.20" fill="#2195ed" />
<rect x="817.00" y="584.00" width="2.00" height="21.20" fill="#1f93eb" />
<rect x="822.00" y="584.00" width="3.00" height="21.20" fill="#188ce4" />
<rect x="833.00" y="584.00" width="1.00" height="21.20" fill="#1a8ee6" />
<rect x="838.00" y="584.00" width="2.00" height="21.20" fill="#1b8fe7" />
<rect x="850.00" y="584.00" width="2.00" height="21.20" fill="#2195ed" />
<rect x="855.00" y="584.00" width="1.00" height="21.20" fill="#2094ec" />
<rect x="868.00" y="584.00" width="2.00" height="21.20" fill="#1084dc" />
<rect x="879.00" y="584.00" width="2.00" height="21.20" fill="#1589e1" />
<rect x="882.00" y="584.00" width="1.00" height="21.20" fill="#168ae2" />
<rect x="888.00" y="584.00" width="1.00" height="21.20" fill="#198de5" />
<rect x="896.00" y="584.00" width="1.00" height="21.20" fill="#198de5" />
<rect x="899.00" y="584.00" width="1.00" height="21.20" fill="#1084dc" />
<rect x="901.00" y="584.00" width="1.00" height="21.20" fill="#0f83db" />
<rect x="905.00" y="584.00" width="2.00" height="21.20" fill="#1286de" />
<rect x="908.00" y="584.00" width="1.00" height="21.20" fill="#1d91e9" />
<rect x="912.00" y="584.00" width="1.00" height="21.20" fill="#2094ec" />
<rect x="917.00" y="584.00" width="2.00" height="21.20" fill="#188ce4" />
<rect x="921.00" y="584.00" width="1.00" height="21.20" fill="#2195ed" />
<rect x="923.00" y="584.00" width="1.00" height="21.20" fill="#1286de" />
<rect x="926.00" y="584.00" width="4.00" height="21.20" fill="#1185dd" />
<rect x="932.00" y="584.00" width="2.00" height="21.20" fill="#2195ed" />
<rect x="939.00" y="584.00" width="4.00" height="21.20" fill="#1d91e9" />
<rect x="950.00" y="584.00" width="2.00" height="21.20" fill="#1084dc" />
<rect x="953.00" y="584.00" width="1.00" height="21.20" fill="#178be3" />
<rect x="956.00" y="584.00" width="1.00" height="21.20" fill="#1387df" />
<rect x="959.00" y="584.00" width="2.00" height="21.20" fill="#178be3" />
<rect x="976.00" y="584.00" width="1.00" height="21.20" fill="#1e92ea" />
<rect x="979.00" y="584.00" width="1.00" height="21.20" fill="#2195ed" />
<rect x="997.00" y="584.00" width="1.00" height="21.20" fill="#1286de" />
<rect x="1008.00" y="584.00" width="2.00" height="21.20" fill="#1d91e9" />
<rect x="1012.00" y="584.00" width="3.00" height="21.20" fill="#2094ec" />
<rect x="1017.00" y="584.00" width="1.00" height="21.20" fill="#1b8fe7" />
<rect x="1022.00" y="584.00" width="2.00" height="21.20" fill="#198de5" />
<rect x="1025.00" y="584.00" width="2.00" height="21.20" fill="#1c90e8" />
<rect x="1033.00" y="584.00" width="3.00" height="21.20" fill="#168ae2" />
<rect x="1045.00" y="584.00" width="3.00" height="21.20" fill="#198de5" />
<rect x="1049.00" y="584.00" width="2.00" height="21.20" fill="#198de5" />
<rect x="1053.00" y="584.00" width="1.00" height="21.20" fill="#1e92ea" />
<rect x="1065.00" y="584.00" width="4.00" height="21.20" fill="#1185dd" />
<rect x="1071.00" y="584.00" width="4.00" height="21.20" fill="#1f93eb" />
<rect x="1078.00" y="584.00" width="1.00" height="21.20" fill="#1c90e8" />
<rect x="97.00" y="605.20" width="2.00" height="12.80" fill="#16aebe" />
<rect x="101.00" y="605.20" width="2.00" height="12.80" fill="#09a1b1" />
<rect x="107.00" y="605.20" width="1.00" height="12.80" fill="#09a1b1" />
<rect x="113.00" y="605.20" width="2.00" height="12.80" fill="#12aaba" />
<rect x="116.00" y="605.20" width="1.00" height="12.80" fill="#0ba3b3" />
<rect x="118.00" y="605.20" width="2.00" height="12.80" fill="#15adbd" />
<rect x="122.00" y="605.20" width="1.00" height="12.80" fill="#0ba3b3" />
<rect x="125.00" y="605.20" width="2.00" height="12.80" fill="#16aebe" />
<rect x="135.00" y="605.20" width="1.00" height="12.80" fill="#15adbd" />
<rect x="139.00" y="605.20" width="1.00" height="12.80" fill="#19b1c1" />
<rect x="141.00" y="605.20" width="2.00" height="12.80" fill="#16aebe" />
<rect x="153.00" y="605.20" width="2.00" height="12.80" fill="#0fa7b7" />
<rect x="167.00" y="605.20" width="5.00" height="12.80" fill="#079faf" />
<rect x="174.00" y="605.20" width="2.00" height="12.80" fill="#10a8b8" />
<rect x="177.00" y="605.20" width="1.00" height="12.80" fill="#15adbd" />
<rect x="184.00" y="605.20" width="1.00" height="12.80" fill="#18b0c0" />
<rect x="192.00" y="605.20" width="1.00" height="12.80" fill="#08a0b0" />
<rect x="197.00" y="605.20" width="3.00" height="12.80" fill="#10a8b8" />
<rect x="201.00" y="605.20" width="2.00" height="12.80" fill="#069eae" />
<rect x="209.00" y="605.20" width="4.00" height="12.80" fill="#16aebe" />
<rect x="214.00" y="605.20" width="2.00" height="12.80" fill="#0ca4b4" />
<rect x="218.00" y="605.20" width="3.00" height="12.80" fill="#17afbf" />
<rect x="223.00" y="605.20" width="1.00" height="12.80" fill="#19b1c1" />
<rect x="225.00" y="605.20" width="4.00" height="12.80" fill="#0ea6b6" />
<rect x="234.00" y="605.20" width="1.00" height="12.80" fill="#0aa2b2" />
<rect x="239.00" y="605.20" width="2.00" height="12.80" fill="#0da5b5" />
<rect x="243.00" y="605.20" width="1.00" height="12.80" fill="#16aebe" />
<rect x="245.00" y="605.20" width="2.00" height="12.80" fill="#0aa2b2" />
<rect x="249.00" y="605.20" width="1.00" height="12.80" fill="#0fa7b7" />
<rect x="255.00" y="605.20" width="1.00" height="12.80" fill="#08a0b0" />
<rect x="262.00" y="605.20" width="2.00" height="12.80" fill="#10a8b8" />
<rect x="269.00" y="605.20" width="2.00" height="12.80" fill="#0da5b5" />
<rect x="273.00" y="605.20" width="1.00" height="12.80" fill="#08a0b0" />
<rect x="278.00" y="605.20" width="1.00" height="12.80" fill="#18b0c0" />
<rect x="280.00" y="605.20" width="2.00" height="12.80" fill="#13abbb" />
<rect x="284.00" y="605.20" width="2.00" height="12.80" fill="#11a9b9" />
<rect x="287.00" y="605.20" width="1.00" height="12.80" fill="#09a1b1" />
<rect x="301.00" y="605.20" width="2.00" height="12.80" fill="#0da5b5" />
<rect x="304.00" y="605.20" width="1.00" height="12.80" fill="#13abbb" />
<rect x="307.00" y="605.20" width="2.00" height="12.80" fill="#17afbf" />
<rect x="312.00" y="605.20" width="2.00" height="12.80" fill="#079faf" />
<rect x="321.00" y="605.20" width="2.00" height="12.80" fill="#15adbd" />
<rect x="325.00" y="605.20" width="2.00" height="12.80" fill="#0ca4b4" />
<rect x="329.00" y="605.20" width="1.00" height="12.80" fill="#15adbd" />
<rect x="343.00" y="605.20" width="2.00" height="12.80" fill="#12aaba" />
<rect x="349.00" y="605.20" width="3.00" height="12.80" fill="#09a1b1" />
<rect x="361.00" y="605.20" width="4.00" height="12.80" fill="#0ca4b4" />
<rect x="376.00" y="605.20" width="1.00" height="12.80" fill="#10a8b8" />
<rect x="384.00" y="605.20" width="2.00" height="12.80" fill="#10a8b8" />
<rect x="388.00" y="605.20" width="2.00" height="12.80" fill="#14acbc" />
<rect x="395.00" y="605.20" width="2.00" height="12.80" fill="#15adbd" />
<rect x="400.00" y="605.20" width="1.00" height="12.80" fill="#18b0c0" />
<rect x="405.00" y="605.20" width="2.00" height="12.80" fill="#18b0c0" />
<rect x="411.00" y="605.20" width="1.00" height="12.80" fill="#11a9b9" />
<rect x="414.00" y="605.20" width="2.00" height="12.80" fill="#17afbf" />
<rect x="420.00" y="605.20" width="2.00" height="12.80" fill="#14acbc" />
<rect x="424.00" y="605.20" width="1.00" height="12.80" fill="#13abbb" />
<rect x="436.00" y="605.20" width="2.00" height="12.80" fill="#09a1b1" />
<rect x="439.00" y="605.20" width="2.00" height="12.80" fill="#11a9b9" />
<rect x="442.00" y="605.20" width="2.00" height="12.80" fill="#11a9b9" />
<rect x="448.00" y="605.20" width="1.00" height="12.80" fill="#0ba3b3" />
<rect x="451.00" y="605.20" width="3.00" height="12.80" fill="#18b0c0" />
<rect x="465.00" y="605.20" width="1.00" height="12.80" fill="#069eae" />
<rect x="468.00" y="605.20" width="1.00" height="12.80" fill="#10a8b8" />
<rect x="477.00" y="605.20" width="2.00" height="12.80" fill="#079faf" />
<rect x="480.00" y="605.20" width="1.00" height="12.80" fill="#17afbf" />
<rect x="496.00" y="605.20" width="1.00" height="12.80" fill="#0ea6b6" />
<rect x="500.00" y="605.20" width="2.00" height="12.80" fill="#0fa7b7" />
<rect x="503.00" y="605.20" width="1.00" height="12.80" fill="#09a1b1" />
<rect x="508.00" y="605.20" width="2.00" height="12.80" fill="#0aa2b2" />
<rect x="512.00" y="605.20" width="1.00" height="12.80" fill="#0fa7b7" />
<rect x="520.00" y="605.20" width="2.00" height="12.80" fill="#19b1c1" />
<rect x="523.00" y="605.20" width="2.00" height="12.80" fill="#18b0c0" />
<rect x="526.00" y="605.20" width="2.00" height="12.80" fill="#0ca4b4" />
<rect x="531.00" y="605.20" width="2.00" height="12.80" fill="#17afbf" />
<rect x="541.00" y="605.20" width="1.00" height="12.80" fill="#13abbb" />
<rect x="543.00" y="605.20" width="2.00" height="12.80" fill="#09a1b1" />
<rect x="554.00" y="605.20" width="2.00" height="12.80" fill="#0ea6b6" />
<rect x="560.00" y="605.20" width="1.00" height="12.80" fill="#19b1c1" />
<rect x="563.00" y="605.20" width="3.00" height="12.80" fill="#12aaba" />
<rect x="570.00" y="605.20" width="3.00" height="12.80" fill="#15adbd" />
<rect x="574.00" y="605.20" width="1.00" height="12.80" fill="#15adbd" />
<rect x="577.00" y="605.20" width="1.00" height="12.80" fill="#0da5b5" />
<rect x="582.00" y="605.20" width="2.00" height="12.80" fill="#10a8b8" />
<rect x="586.00" y="605.20" width="1.00" height="12.80" fill="#069eae" />
<rect x="590.00" y="605.20" width="2.00" height="12.80" fill="#15adbd" />
<rect x="593.00" y="605.20" width="1.00" height="12.80" fill="#09a1b1" />
<rect x="599.00" y="605.20" width="2.00" height="12.80" fill="#12aaba" />
<rect x="605.00" y="605.20" width="2.00" height="12.80" fill="#11a9b9" />
<rect x="609.00" y="605.20" width="3.00" height="12.80" fill="#16aebe" />
<rect x="616.00" y="605.20" width="2.00" height="12.80" fill="#0fa7b7" />
<rect x="621.00" y="605.20" width="2.00" height="12.80" fill="#08a0b0" />
<rect x="626.00" y="605.20" width="2.00" height="12.80" fill="#12aaba" />
<rect x="632.00" y="605.20" width="2.00" height="12.80" fill="#0ba3b3" />
<rect x="637.00" y="605.20" width="1.00" height="12.80" fill="#15adbd" />
<rect x="641.00" y="605.20" width="1.00" height="12.80" fill="#09a1b1" />
<rect x="648.00" y="605.20" width="2.00" height="12.80" fill="#12aaba" />
<rect x="653.00" y="605.20" width="1.00" height="12.80" fill="#0ea6b6" />
<rect x="657.00" y="605.20" width="1.00" height="12.80" fill="#12aaba" />
<rect x="660.00" y="605.20" width="1.00" height="12.80" fill="#18b0c0" />
<rect x="667.00" y="605.20" width="2.00" height="12.80" fill="#0ba3b3" />
<rect x="673.00" y="605.20" width="2.00" height="12.80" fill="#09a1b1" />
<rect x="678.00" y="605.20" width="3.00" height="12.80" fill="#14acbc" />
<rect x="688.00" y="605.20" width="1.00" height="12.80" fill="#0ba3b3" />
<rect x="698.00" y="605.20" width="2.00" height="12.80" fill="#069eae" />
<rect x="701.00" y="605.20" width="2.00" height="12.80" fill="#16aebe" />
<rect x="704.00" y="605.20" width="1.00" height="12.80" fill="#0ba3b3" />
<rect x="708.00" y="605.20" width="2.00" height="12.80" fill="#09a1b1" />
<rect x="712.00" y="605.20" width="2.00" height="12.80" fill="#079faf" />
<rect x="716.00" y="605.20" width="2.00" height="12.80" fill="#17afbf" />
<rect x="724.00" y="605.20" width="1.00" height="12.80" fill="#079faf" />
<rect x="729.00" y="605.20" width="1.00" height="12.80" fill="#14acbc" />
<rect x="753.00" y="605.20" width="1.00" height="12.80" fill="#13abbb" />
<rect x="755.00" y="605.20" width="1.00" height="12.80" fill="#0ea6b6" />
<rect x="757.00" y="605.20" width="2.00" height="12.80" fill="#0aa2b2" />
<rect x="762.00" y="605.20" width="2.00" height="12.80" fill="#16aebe" />
<rect x="768.00" y="605.20" width="1.00" height="12.80" fill="#15adbd" />
<rect x="772.00" y="605.20" width="1.00" height="12.80" fill="#10a8b8" />
<rect x="774.00" y="605.20" width="1.00" height="12.80" fill="#19b1c1" />
<rect x="777.00" y="605.20" width="1.00" height="12.80" fill="#11a9b9" />
<rect x="780.00" y="605.20" width="1.00" height="12.80" fill="#16aebe" />
<rect x="783.00" y="605.20" width="1.00" height="12.80" fill="#12aaba" />
<rect x="785.00" y="605.20" width="2.00" height="12.80" fill="#09a1b1" />
<rect x="788.00" y="605.20" width="4.00" height="12.80" fill="#11a9b9" />
<rect x="795.00" y="605.20" width="2.00" height="12.80" fill="#17afbf" />
<rect x="798.00" y="605.20" width="2.00" height="12.80" fill="#19b1c1" />
<rect x="803.00" y="605.20" width="2.00" height="12.80" fill="#08a0b0" />
<rect x="810.00" y="605.20" width="1.00" height="12.80" fill="#14acbc" />
<rect x="813.00" y="605.20" width="1.00" height="12.80" fill="#10a8b8" />
<rect x="815.00" y="605.20" width="1.00" height="12.80" fill="#12aaba" />
<rect x="817.00" y="605.20" width="2.00" height="12.80" fill="#0ea6b6" />
<rect x="822.00" y="605.20" width="1.00" height="12.80" fill="#17afbf" />
<rect x="832.00" y="605.20" width="1.00" height="12.80" fill="#0da5b5" />
<rect x="834.00" y="605.20" width="3.00" height="12.80" fill="#14acbc" />
<rect x="847.00" y="605.20" width="2.00" height="12.80" fill="#0da5b5" />
<rect x="850.00" y="605.20" width="2.00" height="12.80" fill="#0ea6b6" />
<rect x="855.00" y="605.20" width="1.00" height="12.80" fill="#11a9b9" />
<rect x="865.00" y="605.20" width="2.00" height="12.80" fill="#18b0c0" />
<rect x="868.00" y="605.20" width="2.00" height="12.80" fill="#0ea6b6" />
<rect x="877.00" y="605.20" width="2.00" height="12.80" fill="#079faf" />
<rect x="896.00" y="605.20" width="1.00" height="12.80" fill="#0ba3b3" />
<rect x="899.00" y="605.20" width="1.00" height="12.80" fill="#0ba3b3" />
<rect x="901.00" y="605.20" width="1.00" height="12.80" fill="#19b1c1" />
<rect x="908.00" y="605.20" width="1.00" height="12.80" fill="#0ea6b6" />
<rect x="912.00" y="605.20" width="3.00" height="12.80" fill="#0ba3b3" />
<rect x="919.00" y="605.20" width="3.00" height="12.80" fill="#0da5b5" />
<rect x="925.00" y="605.20" width="1.00" height="12.80" fill="#069eae" />
<rect x="928.00" y="605.20" width="2.00" height="12.80" fill="#11a9b9" />
<rect x="932.00" y="605.20" width="2.00" height="12.80" fill="#13abbb" />
<rect x="936.00" y="605.20" width="2.00" height="12.80" fill="#09a1b1" />
<rect x="939.00" y="605.20" width="2.00" height="12.80" fill="#0aa2b2" />
<rect x="950.00" y="605.20" width="3.00" height="12.80" fill="#13abbb" />
<rect x="959.00" y="605.20" width="1.00" height="12.80" fill="#069eae" />
<rect x="973.00" y="605.20" width="2.00" height="12.80" fill="#069eae" />
<rect x="976.00" y="605.20" width="1.00" height="12.80" fill="#15adbd" />
<rect x="979.00" y="605.20" width="1.00" height="12.80" fill="#079faf" />
<rect x="984.00" y="605.20" width="2.00" height="12.80" fill="#17afbf" />
<rect x="1008.00" y="605.20" width="2.00" height="12.80" fill="#0ca4b4" />
<rect x="1012.00" y="605.20" width="2.00" height="12.80" fill="#10a8b8" />
<rect x="1017.00" y="605.20" width="1.00" height="12.80" fill="#0fa7b7" />
<rect x="1029.00" y="605.20" width="1.00" height="12.80" fill="#18b0c0" />
<rect x="1031.00" y="605.20" width="2.00" height="12.80" fill="#11a9b9" />
<rect x="1034.00" y="605.20" width="2.00" height="12.80" fill="#08a0b0" />
<rect x="1038.00" y="605.20" width="1.00" height="12.80" fill="#15adbd" />
<rect x="1045.00" y="605.20" width="3.00" height="12.80" fill="#0aa2b2" />
<rect x="1049.00" y="605.20" width="2.00" height="12.80" fill="#19b1c1" />
<rect x="1065.00" y="605.20" width="2.00" height="12.80" fill="#0ba3b3" />
<rect x="1069.00" y="605.20" width="2.00" height="12.80" fill="#0ca4b4" />
<rect x="1073.00" y="605.20" width="2.00" height="12.80" fill="#0fa7b7" />
<rect x="1077.00" y="605.20" width="2.00" height="12.80" fill="#13abbb" />
<rect x="107.00" y="618.00" width="1.00" height="12.10" fill="#14b494" />
<rect x="118.00" y="618.00" width="2.00" height="12.10" fill="#11b191" />
<rect x="122.00" y="618.00" width="1.00" height="12.10" fill="#13b393" />
<rect x="124.00" y="618.00" width="1.00" height="12.10" fill="#1ebe9e" />
<rect x="127.00" y="618.00" width="2.00" height="12.10" fill="#15b595" />
<rect x="132.00" y="618.00" width="1.00" height="12.10" fill="#1ebe9e" />
<rect x="135.00" y="618.00" width="1.00" height="12.10" fill="#11b191" />
<rect x="139.00" y="618.00" width="1.00" height="12.10" fill="#11b191" />
<rect x="145.00" y="618.00" width="3.00" height="12.10" fill="#1bbb9b" />
<rect x="152.00" y="618.00" width="1.00" height="12.10" fill="#11b191" />
<rect x="161.00" y="618.00" width="1.00" height="12.10" fill="#20c0a0" />
<rect x="165.00" y="618.00" width="1.00" height="12.10" fill="#1ebe9e" />
<rect x="167.00" y="618.00" width="3.00" height="12.10" fill="#19b999" />
<rect x="174.00" y="618.00" width="4.00" height="12.10" fill="#17b797" />
<rect x="184.00" y="618.00" width="1.00" height="12.10" fill="#10b090" />
<rect x="192.00" y="618.00" width="1.00" height="12.10" fill="#17b797" />
<rect x="195.00" y="618.00" width="1.00" height="12.10" fill="#1cbc9c" />
<rect x="197.00" y="618.00" width="3.00" height="12.10" fill="#12b292" />
<rect x="201.00" y="618.00" width="2.00" height="12.10" fill="#1dbd9d" />
<rect x="211.00" y="618.00" width="2.00" height="12.10" fill="#12b292" />
<rect x="214.00" y="618.00" width="2.00" height="12.10" fill="#0faf8f" />
<rect x="218.00" y="618.00" width="2.00" height="12.10" fill="#21c1a1" />
<rect x="223.00" y="618.00" width="1.00" height="12.10" fill="#1fbf9f" />
<rect x="225.00" y="618.00" width="4.00" height="12.10" fill="#1ebe9e" />
<rect x="234.00" y="618.00" width="1.00" height="12.10" fill="#1fbf9f" />
<rect x="236.00" y="618.00" width="1.00" height="12.10" fill="#20c0a0" />
<rect x="238.00" y="618.00" width="1.00" height="12.10" fill="#16b696" />
<rect x="245.00" y="618.00" width="2.00" height="12.10" fill="#18b898" />
<rect x="249.00" y="618.00" width="2.00" height="12.10" fill="#19b999" />
<rect x="255.00" y="618.00" width="1.00" height="12.10" fill="#16b696" />
<rect x="258.00" y="618.00" width="2.00" height="12.10" fill="#16b696" />
<rect x="261.00" y="618.00" width="1.00" height="12.10" fill="#0faf8f" />
<rect x="267.00" y="618.00" width="2.00" height="12.10" fill="#10b090" />
<rect x="273.00" y="618.00" width="1.00" height="12.10" fill="#20c0a0" />
<rect x="278.00" y="618.00" width="1.00" height="12.10" fill="#19b999" />
<rect x="280.00" y="618.00" width="2.00" height="12.10" fill="#1cbc9c" />
<rect x="284.00" y="618.00" width="2.00" height="12.10" fill="#1dbd9d" />
<rect x="287.00" y="618.00" width="1.00" height="12.10" fill="#16b696" />
<rect x="292.00" y="618.00" width="1.00" height="12.10" fill="#13b393" />
<rect x="295.00" y="618.00" width="2.00" height="12.10" fill="#1ebe9e" />
<rect x="301.00" y="618.00" width="2.00" height="12.10" fill="#19b999" />
<rect x="304.00" y="618.00" width="1.00" height="12.10" fill="#1dbd9d" />
<rect x="309.00" y="618.00" width="3.00" height="12.10" fill="#11b191" />
<rect x="320.00" y="618.00" width="3.00" height="12.10" fill="#0faf8f" />
<rect x="327.00" y="618.00" width="2.00" height="12.10" fill="#15b595" />
<rect x="332.00" y="618.00" width="2.00" height="12.10" fill="#17b797" />
<rect x="343.00" y="618.00" width="2.00" height="12.10" fill="#1dbd9d" />
<rect x="349.00" y="618.00" width="1.00" height="12.10" fill="#11b191" />
<rect x="361.00" y="618.00" width="4.00" height="12.10" fill="#0faf8f" />
<rect x="381.00" y="618.00" width="2.00" height="12.10" fill="#17b797" />
<rect x="388.00" y="618.00" width="2.00" height="12.10" fill="#0faf8f" />
<rect x="395.00" y="618.00" width="2.00" height="12.10" fill="#1cbc9c" />
<rect x="399.00" y="618.00" width="1.00" height="12.10" fill="#1dbd9d" />
<rect x="401.00" y="618.00" width="1.00" height="12.10" fill="#18b898" />
<rect x="405.00" y="618.00" width="4.00" height="12.10" fill="#10b090" />
<rect x="413.00" y="618.00" width="1.00" height="12.10" fill="#13b393" />
<rect x="415.00" y="618.00" width="1.00" height="12.10" fill="#1bbb9b" />
<rect x="419.00" y="618.00" width="1.00" height="12.10" fill="#16b696" />
<rect x="430.00" y="618.00" width="2.00" height="12.10" fill="#19b999" />
<rect x="436.00" y="618.00" width="2.00" height="12.10" fill="#10b090" />
<rect x="439.00" y="618.00" width="2.00" height="12.10" fill="#0faf8f" />
<rect x="442.00" y="618.00" width="2.00" height="12.10" fill="#1aba9a" />
<rect x="446.00" y="618.00" width="2.00" height="12.10" fill="#17b797" />
<rect x="451.00" y="618.00" width="2.00" height="12.10" fill="#21c1a1" />
<rect x="468.00" y="618.00" width="1.00" height="12.10" fill="#1cbc9c" />
<rect x="474.00" y="618.00" width="1.00" height="12.10" fill="#0eae8e" />
<rect x="477.00" y="618.00" width="2.00" height="12.10" fill="#19b999" />
<rect x="480.00" y="618.00" width="1.00" height="12.10" fill="#13b393" />
<rect x="485.00" y="618.00" width="1.00" height="12.10" fill="#17b797" />
<rect x="500.00" y="618.00" width="2.00" height="12.10" fill="#1bbb9b" />
<rect x="503.00" y="618.00" width="3.00" height="12.10" fill="#0faf8f" />
<rect x="510.00" y="618.00" width="2.00" height="12.10" fill="#21c1a1" />
<rect x="520.00" y="618.00" width="1.00" height="12.10" fill="#1aba9a" />
<rect x="523.00" y="618.00" width="2.00" height="12.10" fill="#17b797" />
<rect x="526.00" y="618.00" width="2.00" height="12.10" fill="#17b797" />
<rect x="531.00" y="618.00" width="2.00" height="12.10" fill="#1dbd9d" />
<rect x="536.00" y="618.00" width="2.00" height="12.10" fill="#18b898" />
<rect x="539.00" y="618.00" width="3.00" height="12.10" fill="#11b191" />
<rect x="543.00" y="618.00" width="3.00" height="12.10" fill="#14b494" />
<rect x="552.00" y="618.00" width="1.00" height="12.10" fill="#21c1a1" />
<rect x="554.00" y="618.00" width="2.00" height="12.10" fill="#21c1a1" />
<rect x="560.00" y="618.00" width="1.00" height="12.10" fill="#1aba9a" />
<rect x="570.00" y="618.00" width="1.00" height="12.10" fill="#20c0a0" />
<rect x="574.00" y="618.00" width="1.00" height="12.10" fill="#15b595" />
<rect x="577.00" y="618.00" width="1.00" height="12.10" fill="#14b494" />
<rect x="582.00" y="618.00" width="4.00" height="12.10" fill="#14b494" />
<rect x="590.00" y="618.00" width="2.00" height="12.10" fill="#20c0a0" />
<rect x="593.00" y="618.00" width="3.00" height="12.10" fill="#20c0a0" />
<rect x="598.00" y="618.00" width="1.00" height="12.10" fill="#1bbb9b" />
<rect x="601.00" y="618.00" width="3.00" height="12.10" fill="#0eae8e" />
<rect x="609.00" y="618.00" width="3.00" height="12.10" fill="#13b393" />
<rect x="616.00" y="618.00" width="2.00" height="12.10" fill="#17b797" />
<rect x="621.00" y="618.00" width="3.00" height="12.10" fill="#1cbc9c" />
<rect x="626.00" y="618.00" width="2.00" height="12.10" fill="#20c0a0" />
<rect x="630.00" y="618.00" width="1.00" height="12.10" fill="#1ebe9e" />
<rect x="632.00" y="618.00" width="2.00" height="12.10" fill="#19b999" />
<rect x="637.00" y="618.00" width="1.00" height="12.10" fill="#18b898" />
<rect x="642.00" y="618.00" width="1.00" height="12.10" fill="#1dbd9d" />
<rect x="645.00" y="618.00" width="1.00" height="12.10" fill="#0faf8f" />
<rect x="653.00" y="618.00" width="1.00" height="12.10" fill="#14b494" />
<rect x="657.00" y="618.00" width="1.00" height="12.10" fill="#12b292" />
<rect x="660.00" y="618.00" width="1.00" height="12.10" fill="#1aba9a" />
<rect x="671.00" y="618.00" width="4.00" height="12.10" fill="#17b797" />
<rect x="676.00" y="618.00" width="3.00" height="12.10" fill="#17b797" />
<rect x="689.00" y="618.00" width="2.00" height="12.10" fill="#1fbf9f" />
<rect x="694.00" y="618.00" width="2.00" height="12.10" fill="#20c0a0" />
<rect x="701.00" y="618.00" width="2.00" height="12.10" fill="#20c0a0" />
<rect x="704.00" y="618.00" width="1.00" height="12.10" fill="#17b797" />
<rect x="707.00" y="618.00" width="3.00" height="12.10" fill="#13b393" />
<rect x="711.00" y="618.00" width="1.00" height="12.10" fill="#12b292" />
<rect x="717.00" y="618.00" width="1.00" height="12.10" fill="#1aba9a" />
<rect x="729.00" y="618.00" width="1.00" height="12.10" fill="#17b797" />
<rect x="734.00" y="618.00" width="1.00" height="12.10" fill="#19b999" />
<rect x="746.00" y="618.00" width="2.00" height="12.10" fill="#17b797" />
<rect x="755.00" y="618.00" width="1.00" height="12.10" fill="#18b898" />
<rect x="757.00" y="618.00" width="2.00" height="12.10" fill="#0faf8f" />
<rect x="762.00" y="618.00" width="1.00" height="12.10" fill="#17b797" />
<rect x="768.00" y="618.00" width="1.00" height="12.10" fill="#1bbb9b" />
<rect x="773.00" y="618.00" width="2.00" height="12.10" fill="#1fbf9f" />
<rect x="777.00" y="618.00" width="1.00" height="12.10" fill="#13b393" />
<rect x="780.00" y="618.00" width="1.00" height="12.10" fill="#1aba9a" />
<rect x="783.00" y="618.00" width="1.00" height="12.10" fill="#1aba9a" />
<rect x="785.00" y="618.00" width="2.00" height="12.10" fill="#16b696" />
<rect x="788.00" y="618.00" width="2.00" height="12.10" fill="#1bbb9b" />
<rect x="795.00" y="618.00" width="2.00" height="12.10" fill="#1fbf9f" />
<rect x="798.00" y="618.00" width="3.00" height="12.10" fill="#10b090" />
<rect x="803.00" y="618.00" width="3.00" height="12.10" fill="#1bbb9b" />
<rect x="810.00" y="618.00" width="1.00" height="12.10" fill="#10b090" />
<rect x="813.00" y="618.00" width="1.00" height="12.10" fill="#0eae8e" />
<rect x="815.00" y="618.00" width="1.00" height="12.10" fill="#1ebe9e" />
<rect x="819.00" y="618.00" width="2.00" height="12.10" fill="#0eae8e" />
<rect x="825.00" y="618.00" width="2.00" height="12.10" fill="#12b292" />
<rect x="830.00" y="618.00" width="3.00" height="12.10" fill="#1bbb9b" />
<rect x="834.00" y="618.00" width="3.00" height="12.10" fill="#18b898" />
<rect x="840.00" y="618.00" width="4.00" height="12.10" fill="#1dbd9d" />
<rect x="846.00" y="618.00" width="1.00" height="12.10" fill="#1aba9a" />
<rect x="861.00" y="618.00" width="1.00" height="12.10" fill="#12b292" />
<rect x="865.00" y="618.00" width="2.00" height="12.10" fill="#0faf8f" />
<rect x="872.00" y="618.00" width="1.00" height="12.10" fill="#0faf8f" />
<rect x="875.00" y="618.00" width="4.00" height="12.10" fill="#15b595" />
<rect x="896.00" y="618.00" width="1.00" height="12.10" fill="#13b393" />
<rect x="899.00" y="618.00" width="1.00" height="12.10" fill="#21c1a1" />
<rect x="905.00" y="618.00" width="2.00" height="12.10" fill="#16b696" />
<rect x="908.00" y="618.00" width="1.00" height="12.10" fill="#1dbd9d" />
<rect x="911.00" y="618.00" width="2.00" height="12.10" fill="#21c1a1" />
<rect x="917.00" y="618.00" width="2.00" height="12.10" fill="#1dbd9d" />
<rect x="925.00" y="618.00" width="1.00" height="12.10" fill="#1cbc9c" />
<rect x="928.00" y="618.00" width="2.00" height="12.10" fill="#16b696" />
<rect x="936.00" y="618.00" width="2.00" height="12.10" fill="#15b595" />
<rect x="939.00" y="618.00" width="2.00" height="12.10" fill="#19b999" />
<rect x="952.00" y="618.00" width="1.00" height="12.10" fill="#0eae8e" />
<rect x="959.00" y="618.00" width="1.00" height="12.10" fill="#19b999" />
<rect x="973.00" y="618.00" width="2.00" height="12.10" fill="#16b696" />
<rect x="979.00" y="618.00" width="1.00" height="12.10" fill="#12b292" />
<rect x="982.00" y="618.00" width="4.00" height="12.10" fill="#16b696" />
<rect x="1012.00" y="618.00" width="2.00" height="12.10" fill="#1cbc9c" />
<rect x="1018.00" y="618.00" width="1.00" height="12.10" fill="#1ebe9e" />
<rect x="1022.00" y="618.00" width="2.00" height="12.10" fill="#20c0a0" />
<rect x="1029.00" y="618.00" width="1.00" height="12.10" fill="#16b696" />
<rect x="1034.00" y="618.00" width="2.00" height="12.10" fill="#12b292" />
<rect x="1038.00" y="618.00" width="1.00" height="12.10" fill="#1cbc9c" />
<rect x="1043.00" y="618.00" width="2.00" height="12.10" fill="#1fbf9f" />
<rect x="1047.00" y="618.00" width="1.00" height="12.10" fill="#1fbf9f" />
<rect x="1055.00" y="618.00" width="2.00" height="12.10" fill="#16b696" />
<rect x="1062.00" y="618.00" width="1.00" height="12.10" fill="#11b191" />
<rect x="1065.00" y="618.00" width="2.00" height="12.10" fill="#21c1a1" />
<rect x="1069.00" y="618.00" width="2.00" height="12.10" fill="#11b191" />
<rect x="1073.00" y="618.00" width="2.00" height="12.10" fill="#0faf8f" />
<rect x="1077.00" y="618.00" width="2.00" height="12.10" fill="#1dbd9d" />
<rect x="107.00" y="630.10" width="1.00" height="17.60" fill="#27bf6f" />
<rect x="111.00" y="630.10" width="2.00" height="17.60" fill="#35cd7d" />
<rect x="122.00" y="630.10" width="1.00" height="17.60" fill="#36ce7e" />
<rect x="124.00" y="630.10" width="1.00" height="17.60" fill="#2ec676" />
<rect x="127.00" y="630.10" width="2.00" height="17.60" fill="#36ce7e" />
<rect x="132.00" y="630.10" width="1.00" height="17.60" fill="#32ca7a" />
<rect x="137.00" y="630.10" width="2.00" height="17.60" fill="#2dc575" />
<rect x="143.00" y="630.10" width="2.00" height="17.60" fill="#26be6e" />
<rect x="146.00" y="630.10" width="2.00" height="17.60" fill="#30c878" />
<rect x="152.00" y="630.10" width="1.00" height="17.60" fill="#30c878" />
<rect x="159.00" y="630.10" width="3.00" height="17.60" fill="#37cf7f" />
<rect x="169.00" y="630.10" width="1.00" height="17.60" fill="#2cc474" />
<rect x="174.00" y="630.10" width="2.00" height="17.60" fill="#2dc575" />
<rect x="177.00" y="630.10" width="1.00" height="17.60" fill="#31c979" />
<rect x="179.00" y="630.10" width="2.00" height="17.60" fill="#2cc474" />
<rect x="184.00" y="630.10" width="1.00" height="17.60" fill="#33cb7b" />
<rect x="192.00" y="630.10" width="1.00" height="17.60" fill="#26be6e" />
<rect x="196.00" y="630.10" width="1.00" height="17.60" fill="#35cd7d" />
<rect x="198.00" y="630.10" width="2.00" height="17.60" fill="#34cc7c" />
<rect x="201.00" y="630.10" width="4.00" height="17.60" fill="#28c070" />
<rect x="211.00" y="630.10" width="2.00" height="17.60" fill="#29c171" />
<rect x="216.00" y="630.10" width="2.00" height="17.60" fill="#2fc777" />
<rect x="221.00" y="630.10" width="2.00" height="17.60" fill="#34cc7c" />
<rect x="225.00" y="630.10" width="2.00" height="17.60" fill="#2ac272" />
<rect x="236.00" y="630.10" width="1.00" height="17.60" fill="#2dc575" />
<rect x="249.00" y="630.10" width="2.00" height="17.60" fill="#34cc7c" />
<rect x="258.00" y="630.10" width="2.00" height="17.60" fill="#32ca7a" />
<rect x="261.00" y="630.10" width="1.00" height="17.60" fill="#33cb7b" />
<rect x="267.00" y="630.10" width="2.00" height="17.60" fill="#29c171" />
<rect x="273.00" y="630.10" width="2.00" height="17.60" fill="#39d181" />
<rect x="278.00" y="630.10" width="1.00" height="17.60" fill="#28c070" />
<rect x="280.00" y="630.10" width="2.00" height="17.60" fill="#2cc474" />
<rect x="284.00" y="630.10" width="2.00" height="17.60" fill="#28c070" />
<rect x="292.00" y="630.10" width="1.00" height="17.60" fill="#37cf7f" />
<rect x="294.00" y="630.10" width="3.00" height="17.60" fill="#30c878" />
<rect x="301.00" y="630.10" width="1.00" height="17.60" fill="#28c070" />
<rect x="304.00" y="630.10" width="1.00" height="17.60" fill="#27bf6f" />
<rect x="309.00" y="630.10" width="1.00" height="17.60" fill="#31c979" />
<rect x="314.00" y="630.10" width="2.00" height="17.60" fill="#36ce7e" />
<rect x="320.00" y="630.10" width="3.00" height="17.60" fill="#2ec676" />
<rect x="327.00" y="630.10" width="3.00" height="17.60" fill="#37cf7f" />
<rect x="332.00" y="630.10" width="2.00" height="17.60" fill="#31c979" />
<rect x="343.00" y="630.10" width="4.00" height="17.60" fill="#2fc777" />
<rect x="352.00" y="630.10" width="2.00" height="17.60" fill="#39d181" />
<rect x="361.00" y="630.10" width="4.00" height="17.60" fill="#33cb7b" />
<rect x="371.00" y="630.10" width="1.00" height="17.60" fill="#2dc575" />
<rect x="374.00" y="630.10" width="2.00" height="17.60" fill="#39d181" />
<rect x="381.00" y="630.10" width="2.00" height="17.60" fill="#32ca7a" />
<rect x="386.00" y="630.10" width="2.00" height="17.60" fill="#2dc575" />
<rect x="395.00" y="630.10" width="2.00" height="17.60" fill="#28c070" />
<rect x="399.00" y="630.10" width="1.00" height="17.60" fill="#27bf6f" />
<rect x="401.00" y="630.10" width="1.00" height="17.60" fill="#27bf6f" />
<rect x="404.00" y="630.10" width="6.00" height="17.60" fill="#37cf7f" />
<rect x="412.00" y="630.10" width="2.00" height="17.60" fill="#39d181" />
<rect x="415.00" y="630.10" width="1.00" height="17.60" fill="#31c979" />
<rect x="419.00" y="630.10" width="1.00" height="17.60" fill="#34cc7c" />
<rect x="424.00" y="630.10" width="1.00" height="17.60" fill="#34cc7c" />
<rect x="427.00" y="630.10" width="1.00" height="17.60" fill="#2ac272" />
<rect x="430.00" y="630.10" width="1.00" height="17.60" fill="#2dc575" />
<rect x="442.00" y="630.10" width="2.00" height="17.60" fill="#37cf7f" />
<rect x="446.00" y="630.10" width="2.00" height="17.60" fill="#28c070" />
<rect x="449.00" y="630.10" width="2.00" height="17.60" fill="#27bf6f" />
<rect x="459.00" y="630.10" width="2.00" height="17.60" fill="#32ca7a" />
<rect x="465.00" y="630.10" width="1.00" height="17.60" fill="#2ec676" />
<rect x="468.00" y="630.10" width="1.00" height="17.60" fill="#2dc575" />
<rect x="474.00" y="630.10" width="1.00" height="17.60" fill="#30c878" />
<rect x="477.00" y="630.10" width="2.00" height="17.60" fill="#2ec676" />
<rect x="480.00" y="630.10" width="1.00" height="17.60" fill="#34cc7c" />
<rect x="485.00" y="630.10" width="1.00" height="17.60" fill="#34cc7c" />
<rect x="492.00" y="630.10" width="1.00" height="17.60" fill="#2cc474" />
<rect x="497.00" y="630.10" width="4.00" height="17.60" fill="#36ce7e" />
<rect x="503.00" y="630.10" width="1.00" height="17.60" fill="#28c070" />
<rect x="507.00" y="630.10" width="1.00" height="17.60" fill="#32ca7a" />
<rect x="510.00" y="630.10" width="2.00" height="17.60" fill="#2fc777" />
<rect x="526.00" y="630.10" width="2.00" height="17.60" fill="#39d181" />
<rect x="529.00" y="630.10" width="2.00" height="17.60" fill="#26be6e" />
<rect x="539.00" y="630.10" width="2.00" height="17.60" fill="#2dc575" />
<rect x="545.00" y="630.10" width="1.00" height="17.60" fill="#34cc7c" />
<rect x="547.00" y="630.10" width="2.00" height="17.60" fill="#37cf7f" />
<rect x="552.00" y="630.10" width="1.00" height="17.60" fill="#31c979" />
<rect x="554.00" y="630.10" width="6.00" height="17.60" fill="#2ac272" />
<rect x="561.00" y="630.10" width="2.00" height="17.60" fill="#33cb7b" />
<rect x="570.00" y="630.10" width="1.00" height="17.60" fill="#39d181" />
<rect x="577.00" y="630.10" width="4.00" height="17.60" fill="#32ca7a" />
<rect x="582.00" y="630.10" width="2.00" height="17.60" fill="#27bf6f" />
<rect x="587.00" y="630.10" width="1.00" height="17.60" fill="#2ac272" />
<rect x="590.00" y="630.10" width="2.00" height="17.60" fill="#2dc575" />
<rect x="593.00" y="630.10" width="1.00" height="17.60" fill="#28c070" />
<rect x="597.00" y="630.10" width="1.00" height="17.60" fill="#2dc575" />
<rect x="603.00" y="630.10" width="1.00" height="17.60" fill="#30c878" />
<rect x="609.00" y="630.10" width="2.00" height="17.60" fill="#39d181" />
<rect x="616.00" y="630.10" width="2.00" height="17.60" fill="#34cc7c" />
<rect x="621.00" y="630.10" width="2.00" height="17.60" fill="#26be6e" />
<rect x="626.00" y="630.10" width="2.00" height="17.60" fill="#38d080" />
<rect x="630.00" y="630.10" width="1.00" height="17.60" fill="#2fc777" />
<rect x="632.00" y="630.10" width="2.00" height="17.60" fill="#31c979" />
<rect x="635.00" y="630.10" width="2.00" height="17.60" fill="#31c979" />
<rect x="638.00" y="630.10" width="3.00" height="17.60" fill="#37cf7f" />
<rect x="642.00" y="630.10" width="1.00" height="17.60" fill="#27bf6f" />
<rect x="655.00" y="630.10" width="2.00" height="17.60" fill="#26be6e" />
<rect x="658.00" y="630.10" width="2.00" height="17.60" fill="#27bf6f" />
<rect x="662.00" y="630.10" width="2.00" height="17.60" fill="#2cc474" />
<rect x="667.00" y="630.10" width="4.00" height="17.60" fill="#39d181" />
<rect x="673.00" y="630.10" width="2.00" height="17.60" fill="#26be6e" />
<rect x="678.00" y="630.10" width="1.00" height="17.60" fill="#31c979" />
<rect x="685.00" y="630.10" width="1.00" height="17.60" fill="#37cf7f" />
<rect x="701.00" y="630.10" width="2.00" height="17.60" fill="#35cd7d" />
<rect x="705.00" y="630.10" width="2.00" height="17.60" fill="#37cf7f" />
<rect x="708.00" y="630.10" width="2.00" height="17.60" fill="#2cc474" />
<rect x="711.00" y="630.10" width="1.00" height="17.60" fill="#35cd7d" />
<rect x="716.00" y="630.10" width="2.00" height="17.60" fill="#36ce7e" />
<rect x="729.00" y="630.10" width="1.00" height="17.60" fill="#35cd7d" />
<rect x="732.00" y="630.10" width="1.00" height="17.60" fill="#39d181" />
<rect x="734.00" y="630.10" width="1.00" height="17.60" fill="#39d181" />
<rect x="739.00" y="630.10" width="2.00" height="17.60" fill="#2bc373" />
<rect x="746.00" y="630.10" width="2.00" height="17.60" fill="#28c070" />
<rect x="755.00" y="630.10" width="1.00" height="17.60" fill="#38d080" />
<rect x="768.00" y="630.10" width="1.00" height="17.60" fill="#29c171" />
<rect x="774.00" y="630.10" width="1.00" height="17.60" fill="#30c878" />
<rect x="780.00" y="630.10" width="1.00" height="17.60" fill="#2dc575" />
<rect x="783.00" y="630.10" width="1.00" height="17.60" fill="#2bc373" />
<rect x="788.00" y="630.10" width="2.00" height="17.60" fill="#28c070" />
<rect x="794.00" y="630.10" width="1.00" height="17.60" fill="#39d181" />
<rect x="797.00" y="630.10" width="3.00" height="17.60" fill="#26be6e" />
<rect x="809.00" y="630.10" width="1.00" height="17.60" fill="#2bc373" />
<rect x="811.00" y="630.10" width="3.00" height="17.60" fill="#2dc575" />
<rect x="819.00" y="630.10" width="2.00" height="17.60" fill="#26be6e" />
<rect x="825.00" y="630.10" width="2.00" height="17.60" fill="#2cc474" />
<rect x="830.00" y="630.10" width="2.00" height="17.60" fill="#30c878" />
<rect x="833.00" y="630.10" width="1.00" height="17.60" fill="#26be6e" />
<rect x="836.00" y="630.10" width="1.00" height="17.60" fill="#31c979" />
<rect x="838.00" y="630.10" width="2.00" height="17.60" fill="#2bc373" />
<rect x="846.00" y="630.10" width="1.00" height="17.60" fill="#33cb7b" />
<rect x="849.00" y="630.10" width="1.00" height="17.60" fill="#26be6e" />
<rect x="854.00" y="630.10" width="1.00" height="17.60" fill="#26be6e" />
<rect x="858.00" y="630.10" width="1.00" height="17.60" fill="#39d181" />
<rect x="865.00" y="630.10" width="2.00" height="17.60" fill="#2bc373" />
<rect x="872.00" y="630.10" width="1.00" height="17.60" fill="#34cc7c" />
<rect x="877.00" y="630.10" width="2.00" height="17.60" fill="#2fc777" />
<rect x="883.00" y="630.10" width="3.00" height="17.60" fill="#2ec676" />
<rect x="896.00" y="630.10" width="1.00" height="17.60" fill="#26be6e" />
<rect x="902.00" y="630.10" width="1.00" height="17.60" fill="#2ec676" />
<rect x="905.00" y="630.10" width="2.00" height="17.60" fill="#35cd7d" />
<rect x="908.00" y="630.10" width="1.00" height="17.60" fill="#29c171" />
<rect x="910.00" y="630.10" width="3.00" height="17.60" fill="#28c070" />
<rect x="924.00" y="630.10" width="1.00" height="17.60" fill="#28c070" />
<rect x="934.00" y="630.10" width="2.00" height="17.60" fill="#2ec676" />
<rect x="939.00" y="630.10" width="2.00" height="17.60" fill="#28c070" />
<rect x="952.00" y="630.10" width="1.00" height="17.60" fill="#38d080" />
<rect x="959.00" y="630.10" width="1.00" height="17.60" fill="#2ec676" />
<rect x="963.00" y="630.10" width="2.00" height="17.60" fill="#36ce7e" />
<rect x="971.00" y="630.10" width="2.00" height="17.60" fill="#2ac272" />
<rect x="979.00" y="630.10" width="1.00" height="17.60" fill="#30c878" />
<rect x="982.00" y="630.10" width="2.00" height="17.60" fill="#39d181" />
<rect x="989.00" y="630.10" width="1.00" height="17.60" fill="#26be6e" />
<rect x="1021.00" y="630.10" width="1.00" height="17.60" fill="#32ca7a" />
<rect x="1029.00" y="630.10" width="1.00" height="17.60" fill="#27bf6f" />
<rect x="1034.00" y="630.10" width="3.00" height="17.60" fill="#30c878" />
<rect x="1039.00" y="630.10" width="2.00" height="17.60" fill="#2cc474" />
<rect x="1047.00" y="630.10" width="1.00" height="17.60" fill="#39d181" />
<rect x="1057.00" y="630.10" width="2.00" height="17.60" fill="#36ce7e" />
<rect x="1069.00" y="630.10" width="2.00" height="17.60" fill="#36ce7e" />
<rect x="1073.00" y="630.10" width="2.00" height="17.60" fill="#30c878" />
<rect x="1079.00" y="630.10" width="1.00" height="17.60" fill="#2ac272" />
<rect x="111.00" y="647.70" width="2.00" height="16.60" fill="#49d161" />
<rect x="117.00" y="647.70" width="1.00" height="16.60" fill="#4ed666" />
<rect x="127.00" y="647.70" width="2.00" height="16.60" fill="#50d868" />
<rect x="136.00" y="647.70" width="3.00" height="16.60" fill="#4ad262" />
<rect x="143.00" y="647.70" width="2.00" height="16.60" fill="#4dd565" />
<rect x="146.00" y="647.70" width="2.00" height="16.60" fill="#3ec656" />
<rect x="152.00" y="647.70" width="1.00" height="16.60" fill="#48d060" />
<rect x="159.00" y="647.70" width="3.00" height="16.60" fill="#46ce5e" />
<rect x="163.00" y="647.70" width="1.00" height="16.60" fill="#4ed666" />
<rect x="169.00" y="647.70" width="1.00" height="16.60" fill="#50d868" />
<rect x="172.00" y="647.70" width="1.00" height="16.60" fill="#47cf5f" />
<rect x="174.00" y="647.70" width="2.00" height="16.60" fill="#3ec656" />
<rect x="179.00" y="647.70" width="2.00" height="16.60" fill="#4fd767" />
<rect x="193.00" y="647.70" width="2.00" height="16.60" fill="#46ce5e" />
<rect x="198.00" y="647.70" width="2.00" height="16.60" fill="#4fd767" />
<rect x="211.00" y="647.70" width="2.00" height="16.60" fill="#4bd363" />
<rect x="216.00" y="647.70" width="2.00" height="16.60" fill="#40c858" />
<rect x="225.00" y="647.70" width="2.00" height="16.60" fill="#43cb5b" />
<rect x="236.00" y="647.70" width="1.00" height="16.60" fill="#41c959" />
<rect x="249.00" y="647.70" width="1.00" height="16.60" fill="#40c858" />
<rect x="258.00" y="647.70" width="2.00" height="16.60" fill="#3ec656" />
<rect x="261.00" y="647.70" width="1.00" height="16.60" fill="#3ec656" />
<rect x="264.00" y="647.70" width="1.00" height="16.60" fill="#3fc757" />
<rect x="267.00" y="647.70" width="2.00" height="16.60" fill="#51d969" />
<rect x="278.00" y="647.70" width="1.00" height="16.60" fill="#49d161" />
<rect x="280.00" y="647.70" width="2.00" height="16.60" fill="#41c959" />
<rect x="294.00" y="647.70" width="1.00" height="16.60" fill="#50d868" />
<rect x="301.00" y="647.70" width="1.00" height="16.60" fill="#40c858" />
<rect x="304.00" y="647.70" width="1.00" height="16.60" fill="#3fc757" />
<rect x="310.00" y="647.70" width="2.00" height="16.60" fill="#44cc5c" />
<rect x="314.00" y="647.70" width="2.00" height="16.60" fill="#41c959" />
<rect x="321.00" y="647.70" width="2.00" height="16.60" fill="#4dd565" />
<rect x="329.00" y="647.70" width="1.00" height="16.60" fill="#40c858" />
<rect x="332.00" y="647.70" width="2.00" height="16.60" fill="#42ca5a" />
<rect x="343.00" y="647.70" width="2.00" height="16.60" fill="#4ed666" />
<rect x="363.00" y="647.70" width="2.00" height="16.60" fill="#4ed666" />
<rect x="377.00" y="647.70" width="2.00" height="16.60" fill="#41c959" />
<rect x="381.00" y="647.70" width="2.00" height="16.60" fill="#3ec656" />
<rect x="384.00" y="647.70" width="2.00" height="16.60" fill="#4ad262" />
<rect x="395.00" y="647.70" width="2.00" height="16.60" fill="#4bd363" />
<rect x="401.00" y="647.70" width="1.00" height="16.60" fill="#4bd363" />
<rect x="405.00" y="647.70" width="5.00" height="16.60" fill="#45cd5d" />
<rect x="412.00" y="647.70" width="1.00" height="16.60" fill="#45cd5d" />
<rect x="415.00" y="647.70" width="1.00" height="16.60" fill="#51d969" />
<rect x="419.00" y="647.70" width="1.00" height="16.60" fill="#50d868" />
<rect x="422.00" y="647.70" width="2.00" height="16.60" fill="#50d868" />
<rect x="430.00" y="647.70" width="1.00" height="16.60" fill="#42ca5a" />
<rect x="442.00" y="647.70" width="2.00" height="16.60" fill="#40c858" />
<rect x="465.00" y="647.70" width="1.00" height="16.60" fill="#45cd5d" />
<rect x="474.00" y="647.70" width="1.00" height="16.60" fill="#51d969" />
<rect x="480.00" y="647.70" width="1.00" height="16.60" fill="#47cf5f" />
<rect x="485.00" y="647.70" width="1.00" height="16.60" fill="#4fd767" />
<rect x="492.00" y="647.70" width="1.00" height="16.60" fill="#4ed666" />
<rect x="497.00" y="647.70" width="1.00" height="16.60" fill="#48d060" />
<rect x="502.00" y="647.70" width="1.00" height="16.60" fill="#49d161" />
<rect x="507.00" y="647.70" width="1.00" height="16.60" fill="#4fd767" />
<rect x="510.00" y="647.70" width="3.00" height="16.60" fill="#4ad262" />
<rect x="518.00" y="647.70" width="2.00" height="16.60" fill="#4cd464" />
<rect x="529.00" y="647.70" width="2.00" height="16.60" fill="#4fd767" />
<rect x="543.00" y="647.70" width="2.00" height="16.60" fill="#4fd767" />
<rect x="547.00" y="647.70" width="2.00" height="16.60" fill="#4ad262" />
<rect x="553.00" y="647.70" width="1.00" height="16.60" fill="#3ec656" />
<rect x="556.00" y="647.70" width="2.00" height="16.60" fill="#45cd5d" />
<rect x="570.00" y="647.70" width="1.00" height="16.60" fill="#4cd464" />
<rect x="573.00" y="647.70" width="1.00" height="16.60" fill="#44cc5c" />
<rect x="582.00" y="647.70" width="2.00" height="16.60" fill="#46ce5e" />
<rect x="587.00" y="647.70" width="1.00" height="16.60" fill="#49d161" />
<rect x="603.00" y="647.70" width="1.00" height="16.60" fill="#4bd363" />
<rect x="620.00" y="647.70" width="1.00" height="16.60" fill="#41c959" />
<rect x="626.00" y="647.70" width="2.00" height="16.60" fill="#45cd5d" />
<rect x="635.00" y="647.70" width="2.00" height="16.60" fill="#49d161" />
<rect x="638.00" y="647.70" width="1.00" height="16.60" fill="#40c858" />
<rect x="642.00" y="647.70" width="1.00" height="16.60" fill="#44cc5c" />
<rect x="655.00" y="647.70" width="2.00" height="16.60" fill="#3fc757" />
<rect x="660.00" y="647.70" width="1.00" height="16.60" fill="#4ad262" />
<rect x="662.00" y="647.70" width="2.00" height="16.60" fill="#48d060" />
<rect x="669.00" y="647.70" width="2.00" height="16.60" fill="#43cb5b" />
<rect x="678.00" y="647.70" width="1.00" height="16.60" fill="#45cd5d" />
<rect x="681.00" y="647.70" width="2.00" height="16.60" fill="#45cd5d" />
<rect x="684.00" y="647.70" width="1.00" height="16.60" fill="#4bd363" />
<rect x="705.00" y="647.70" width="2.00" height="16.60" fill="#46ce5e" />
<rect x="708.00" y="647.70" width="4.00" height="16.60" fill="#43cb5b" />
<rect x="716.00" y="647.70" width="1.00" height="16.60" fill="#4ad262" />
<rect x="729.00" y="647.70" width="1.00" height="16.60" fill="#46ce5e" />
<rect x="739.00" y="647.70" width="2.00" height="16.60" fill="#40c858" />
<rect x="744.00" y="647.70" width="2.00" height="16.60" fill="#4bd363" />
<rect x="768.00" y="647.70" width="1.00" height="16.60" fill="#46ce5e" />
<rect x="780.00" y="647.70" width="1.00" height="16.60" fill="#43cb5b" />
<rect x="794.00" y="647.70" width="1.00" height="16.60" fill="#4ad262" />
<rect x="798.00" y="647.70" width="2.00" height="16.60" fill="#4ed666" />
<rect x="805.00" y="647.70" width="1.00" height="16.60" fill="#41c959" />
<rect x="816.00" y="647.70" width="1.00" height="16.60" fill="#42ca5a" />
<rect x="819.00" y="647.70" width="2.00" height="16.60" fill="#4ad262" />
<rect x="825.00" y="647.70" width="2.00" height="16.60" fill="#3ec656" />
<rect x="830.00" y="647.70" width="3.00" height="16.60" fill="#43cb5b" />
<rect x="838.00" y="647.70" width="2.00" height="16.60" fill="#47cf5f" />
<rect x="849.00" y="647.70" width="1.00" height="16.60" fill="#4ed666" />
<rect x="857.00" y="647.70" width="1.00" height="16.60" fill="#3ec656" />
<rect x="865.00" y="647.70" width="2.00" height="16.60" fill="#44cc5c" />
<rect x="877.00" y="647.70" width="2.00" height="16.60" fill="#4dd565" />
<rect x="883.00" y="647.70" width="2.00" height="16.60" fill="#51d969" />
<rect x="896.00" y="647.70" width="1.00" height="16.60" fill="#50d868" />
<rect x="905.00" y="647.70" width="2.00" height="16.60" fill="#42ca5a" />
<rect x="910.00" y="647.70" width="1.00" height="16.60" fill="#4bd363" />
<rect x="912.00" y="647.70" width="1.00" height="16.60" fill="#4fd767" />
<rect x="920.00" y="647.70" width="1.00" height="16.60" fill="#40c858" />
<rect x="924.00" y="647.70" width="1.00" height="16.60" fill="#43cb5b" />
<rect x="934.00" y="647.70" width="2.00" height="16.60" fill="#4bd363" />
<rect x="943.00" y="647.70" width="2.00" height="16.60" fill="#40c858" />
<rect x="952.00" y="647.70" width="1.00" height="16.60" fill="#46ce5e" />
<rect x="956.00" y="647.70" width="1.00" height="16.60" fill="#4ad262" />
<rect x="959.00" y="647.70" width="1.00" height="16.60" fill="#45cd5d" />
<rect x="971.00" y="647.70" width="2.00" height="16.60" fill="#49d161" />
<rect x="979.00" y="647.70" width="1.00" height="16.60" fill="#41c959" />
<rect x="982.00" y="647.70" width="2.00" height="16.60" fill="#45cd5d" />
<rect x="1021.00" y="647.70" width="1.00" height="16.60" fill="#4ad262" />
<rect x="1029.00" y="647.70" width="1.00" height="16.60" fill="#3ec656" />
<rect x="1034.00" y="647.70" width="3.00" height="16.60" fill="#49d161" />
<rect x="1047.00" y="647.70" width="1.00" height="16.60" fill="#4fd767" />
<rect x="1060.00" y="647.70" width="2.00" height="16.60" fill="#4ad262" />
<rect x="1073.00" y="647.70" width="2.00" height="16.60" fill="#41c959" />
<rect x="1077.00" y="647.70" width="1.00" height="16.60" fill="#50d868" />
<rect x="1079.00" y="647.70" width="1.00" height="16.60" fill="#4dd565" />
<rect x="117.00" y="664.30" width="1.00" height="12.10" fill="#88dc40" />
<rect x="127.00" y="664.30" width="2.00" height="12.10" fill="#85d93d" />
<rect x="137.00" y="664.30" width="2.00" height="12.10" fill="#88dc40" />
<rect x="145.00" y="664.30" width="1.00" height="12.10" fill="#90e448" />
<rect x="152.00" y="664.30" width="1.00" height="12.10" fill="#81d539" />
<rect x="159.00" y="664.30" width="2.00" height="12.10" fill="#8bdf43" />
<rect x="169.00" y="664.30" width="1.00" height="12.10" fill="#89dd41" />
<rect x="225.00" y="664.30" width="2.00" height="12.10" fill="#91e549" />
<rect x="258.00" y="664.30" width="2.00" height="12.10" fill="#8ee246" />
<rect x="264.00" y="664.30" width="1.00" height="12.10" fill="#91e549" />
<rect x="267.00" y="664.30" width="2.00" height="12.10" fill="#89dd41" />
<rect x="304.00" y="664.30" width="1.00" height="12.10" fill="#84d83c" />
<rect x="314.00" y="664.30" width="2.00" height="12.10" fill="#91e549" />
<rect x="321.00" y="664.30" width="2.00" height="12.10" fill="#86da3e" />
<rect x="329.00" y="664.30" width="1.00" height="12.10" fill="#88dc40" />
<rect x="343.00" y="664.30" width="2.00" height="12.10" fill="#8ce044" />
<rect x="377.00" y="664.30" width="2.00" height="12.10" fill="#8fe347" />
<rect x="384.00" y="664.30" width="2.00" height="12.10" fill="#8ee246" />
<rect x="407.00" y="664.30" width="3.00" height="12.10" fill="#83d73b" />
<rect x="412.00" y="664.30" width="1.00" height="12.10" fill="#90e448" />
<rect x="419.00" y="664.30" width="1.00" height="12.10" fill="#90e448" />
<rect x="430.00" y="664.30" width="1.00" height="12.10" fill="#86da3e" />
<rect x="480.00" y="664.30" width="1.00" height="12.10" fill="#90e448" />
<rect x="483.00" y="664.30" width="2.00" height="12.10" fill="#8ee246" />
<rect x="502.00" y="664.30" width="1.00" height="12.10" fill="#89dd41" />
<rect x="507.00" y="664.30" width="1.00" height="12.10" fill="#80d438" />
<rect x="510.00" y="664.30" width="2.00" height="12.10" fill="#8ade42" />
<rect x="513.00" y="664.30" width="2.00" height="12.10" fill="#81d539" />
<rect x="518.00" y="664.30" width="2.00" height="12.10" fill="#8de145" />
<rect x="529.00" y="664.30" width="2.00" height="12.10" fill="#81d539" />
<rect x="547.00" y="664.30" width="2.00" height="12.10" fill="#84d83c" />
<rect x="553.00" y="664.30" width="1.00" height="12.10" fill="#88dc40" />
<rect x="556.00" y="664.30" width="2.00" height="12.10" fill="#7fd337" />
<rect x="573.00" y="664.30" width="1.00" height="12.10" fill="#81d539" />
<rect x="582.00" y="664.30" width="2.00" height="12.10" fill="#8fe347" />
<rect x="586.00" y="664.30" width="1.00" height="12.10" fill="#86da3e" />
<rect x="626.00" y="664.30" width="2.00" height="12.10" fill="#82d63a" />
<rect x="638.00" y="664.30" width="1.00" height="12.10" fill="#90e448" />
<rect x="642.00" y="664.30" width="1.00" height="12.10" fill="#8ade42" />
<rect x="654.00" y="664.30" width="1.00" height="12.10" fill="#91e549" />
<rect x="669.00" y="664.30" width="2.00" height="12.10" fill="#91e549" />
<rect x="678.00" y="664.30" width="1.00" height="12.10" fill="#8fe347" />
<rect x="681.00" y="664.30" width="2.00" height="12.10" fill="#8bdf43" />
<rect x="708.00" y="664.30" width="2.00" height="12.10" fill="#8ade42" />
<rect x="716.00" y="664.30" width="1.00" height="12.10" fill="#7fd337" />
<rect x="720.00" y="664.30" width="2.00" height="12.10" fill="#87db3f" />
<rect x="724.00" y="664.30" width="1.00" height="12.10" fill="#84d83c" />
<rect x="729.00" y="664.30" width="1.00" height="12.10" fill="#89dd41" />
<rect x="744.00" y="664.30" width="2.00" height="12.10" fill="#81d539" />
<rect x="778.00" y="664.30" width="1.00" height="12.10" fill="#91e549" />
<rect x="780.00" y="664.30" width="1.00" height="12.10" fill="#82d63a" />
<rect x="798.00" y="664.30" width="2.00" height="12.10" fill="#8bdf43" />
<rect x="805.00" y="664.30" width="1.00" height="12.10" fill="#81d539" />
<rect x="838.00" y="664.30" width="2.00" height="12.10" fill="#90e448" />
<rect x="849.00" y="664.30" width="1.00" height="12.10" fill="#8bdf43" />
<rect x="857.00" y="664.30" width="1.00" height="12.10" fill="#85d93d" />
<rect x="896.00" y="664.30" width="1.00" height="12.10" fill="#90e448" />
<rect x="912.00" y="664.30" width="1.00" height="12.10" fill="#8bdf43" />
<rect x="920.00" y="664.30" width="1.00" height="12.10" fill="#83d73b" />
<rect x="925.00" y="664.30" width="1.00" height="12.10" fill="#8de145" />
<rect x="934.00" y="664.30" width="2.00" height="12.10" fill="#84d83c" />
<rect x="952.00" y="664.30" width="1.00" height="12.10" fill="#82d63a" />
<rect x="956.00" y="664.30" width="1.00" height="12.10" fill="#85d93d" />
<rect x="978.00" y="664.30" width="1.00" height="12.10" fill="#8bdf43" />
<rect x="1019.00" y="664.30" width="2.00" height="12.10" fill="#86da3e" />
<rect x="1036.00" y="664.30" width="1.00" height="12.10" fill="#7ed236" />
<rect x="1060.00" y="664.30" width="2.00" height="12.10" fill="#84d83c" />
<rect x="1073.00" y="664.30" width="2.00" height="12.10" fill="#8ade42" />
<rect x="1077.00" y="664.30" width="1.00" height="12.10" fill="#8fe347" />
<rect x="101.00" y="676.40" width="2.00" height="15.10" fill="#d6da06" />
<rect x="107.00" y="676.40" width="1.00" height="15.10" fill="#e0e410" />
<rect x="116.00" y="676.40" width="1.00" height="15.10" fill="#d7db07" />
<rect x="122.00" y="676.40" width="1.00" height="15.10" fill="#dbdf0b" />
<rect x="124.00" y="676.40" width="1.00" height="15.10" fill="#dbdf0b" />
<rect x="127.00" y="676.40" width="2.00" height="15.10" fill="#d8dc08" />
<rect x="135.00" y="676.40" width="1.00" height="15.10" fill="#dbdf0b" />
<rect x="140.00" y="676.40" width="1.00" height="15.10" fill="#e7eb17" />
<rect x="159.00" y="676.40" width="2.00" height="15.10" fill="#dbdf0b" />
<rect x="164.00" y="676.40" width="1.00" height="15.10" fill="#dee20e" />
<rect x="172.00" y="676.40" width="2.00" height="15.10" fill="#dfe30f" />
<rect x="185.00" y="676.40" width="2.00" height="15.10" fill="#e4e814" />
<rect x="189.00" y="676.40" width="1.00" height="15.10" fill="#e9ed19" />
<rect x="193.00" y="676.40" width="2.00" height="15.10" fill="#e4e814" />
<rect x="198.00" y="676.40" width="2.00" height="15.10" fill="#dbdf0b" />
<rect x="209.00" y="676.40" width="2.00" height="15.10" fill="#e6ea16" />
<rect x="225.00" y="676.40" width="2.00" height="15.10" fill="#dfe30f" />
<rect x="232.00" y="676.40" width="2.00" height="15.10" fill="#e6ea16" />
<rect x="250.00" y="676.40" width="1.00" height="15.10" fill="#dce00c" />
<rect x="253.00" y="676.40" width="2.00" height="15.10" fill="#e2e612" />
<rect x="256.00" y="676.40" width="1.00" height="15.10" fill="#e2e612" />
<rect x="291.00" y="676.40" width="2.00" height="15.10" fill="#dce00c" />
<rect x="295.00" y="676.40" width="2.00" height="15.10" fill="#d9dd09" />
<rect x="299.00" y="676.40" width="3.00" height="15.10" fill="#e9ed19" />
<rect x="304.00" y="676.40" width="1.00" height="15.10" fill="#dee20e" />
<rect x="309.00" y="676.40" width="1.00" height="15.10" fill="#dee20e" />
<rect x="314.00" y="676.40" width="2.00" height="15.10" fill="#e4e814" />
<rect x="320.00" y="676.40" width="1.00" height="15.10" fill="#dade0a" />
<rect x="323.00" y="676.40" width="1.00" height="15.10" fill="#dbdf0b" />
<rect x="327.00" y="676.40" width="2.00" height="15.10" fill="#dde10d" />
<rect x="330.00" y="676.40" width="2.00" height="15.10" fill="#dade0a" />
<rect x="336.00" y="676.40" width="1.00" height="15.10" fill="#e6ea16" />
<rect x="345.00" y="676.40" width="2.00" height="15.10" fill="#dce00c" />
<rect x="349.00" y="676.40" width="1.00" height="15.10" fill="#e3e713" />
<rect x="377.00" y="676.40" width="2.00" height="15.10" fill="#dee20e" />
<rect x="381.00" y="676.40" width="2.00" height="15.10" fill="#e1e511" />
<rect x="386.00" y="676.40" width="2.00" height="15.10" fill="#e2e612" />
<rect x="390.00" y="676.40" width="1.00" height="15.10" fill="#e5e915" />
<rect x="407.00" y="676.40" width="2.00" height="15.10" fill="#d7db07" />
<rect x="410.00" y="676.40" width="1.00" height="15.10" fill="#e1e511" />
<rect x="420.00" y="676.40" width="4.00" height="15.10" fill="#e3e713" />
<rect x="425.00" y="676.40" width="2.00" height="15.10" fill="#dce00c" />
<rect x="430.00" y="676.40" width="1.00" height="15.10" fill="#dade0a" />
<rect x="432.00" y="676.40" width="4.00" height="15.10" fill="#dfe30f" />
<rect x="438.00" y="676.40" width="1.00" height="15.10" fill="#e7eb17" />
<rect x="448.00" y="676.40" width="1.00" height="15.10" fill="#e0e410" />
<rect x="454.00" y="676.40" width="3.00" height="15.10" fill="#dade0a" />
<rect x="459.00" y="676.40" width="2.00" height="15.10" fill="#e6ea16" />
<rect x="465.00" y="676.40" width="1.00" height="15.10" fill="#e9ed19" />
<rect x="474.00" y="676.40" width="1.00" height="15.10" fill="#d6da06" />
<rect x="480.00" y="676.40" width="1.00" height="15.10" fill="#e1e511" />
<rect x="483.00" y="676.40" width="2.00" height="15.10" fill="#dbdf0b" />
<rect x="488.00" y="676.40" width="2.00" height="15.10" fill="#d8dc08" />
<rect x="493.00" y="676.40" width="2.00" height="15.10" fill="#d9dd09" />
<rect x="498.00" y="676.40" width="3.00" height="15.10" fill="#d6da06" />
<rect x="502.00" y="676.40" width="1.00" height="15.10" fill="#d7db07" />
<rect x="506.00" y="676.40" width="1.00" height="15.10" fill="#dce00c" />
<rect x="508.00" y="676.40" width="2.00" height="15.10" fill="#e9ed19" />
<rect x="512.00" y="676.40" width="1.00" height="15.10" fill="#dee20e" />
<rect x="518.00" y="676.40" width="4.00" height="15.10" fill="#e5e915" />
<rect x="523.00" y="676.40" width="2.00" height="15.10" fill="#d8dc08" />
<rect x="526.00" y="676.40" width="2.00" height="15.10" fill="#d7db07" />
<rect x="545.00" y="676.40" width="1.00" height="15.10" fill="#dce00c" />
<rect x="549.00" y="676.40" width="3.00" height="15.10" fill="#e6ea16" />
<rect x="553.00" y="676.40" width="1.00" height="15.10" fill="#e0e410" />
<rect x="556.00" y="676.40" width="2.00" height="15.10" fill="#e9ed19" />
<rect x="566.00" y="676.40" width="5.00" height="15.10" fill="#dbdf0b" />
<rect x="575.00" y="676.40" width="2.00" height="15.10" fill="#d6da06" />
<rect x="588.00" y="676.40" width="2.00" height="15.10" fill="#dade0a" />
<rect x="594.00" y="676.40" width="2.00" height="15.10" fill="#dde10d" />
<rect x="609.00" y="676.40" width="2.00" height="15.10" fill="#e7eb17" />
<rect x="616.00" y="676.40" width="4.00" height="15.10" fill="#e7eb17" />
<rect x="628.00" y="676.40" width="2.00" height="15.10" fill="#d7db07" />
<rect x="632.00" y="676.40" width="5.00" height="15.10" fill="#dbdf0b" />
<rect x="638.00" y="676.40" width="1.00" height="15.10" fill="#e5e915" />
<rect x="642.00" y="676.40" width="1.00" height="15.10" fill="#d6da06" />
<rect x="644.00" y="676.40" width="2.00" height="15.10" fill="#e5e915" />
<rect x="648.00" y="676.40" width="2.00" height="15.10" fill="#d7db07" />
<rect x="660.00" y="676.40" width="1.00" height="15.10" fill="#e0e410" />
<rect x="681.00" y="676.40" width="2.00" height="15.10" fill="#d7db07" />
<rect x="686.00" y="676.40" width="2.00" height="15.10" fill="#dce00c" />
<rect x="703.00" y="676.40" width="1.00" height="15.10" fill="#dbdf0b" />
<rect x="714.00" y="676.40" width="2.00" height="15.10" fill="#e5e915" />
<rect x="720.00" y="676.40" width="4.00" height="15.10" fill="#d7db07" />
<rect x="729.00" y="676.40" width="1.00" height="15.10" fill="#dade0a" />
<rect x="735.00" y="676.40" width="2.00" height="15.10" fill="#e0e410" />
<rect x="744.00" y="676.40" width="2.00" height="15.10" fill="#d7db07" />
<rect x="752.00" y="676.40" width="1.00" height="15.10" fill="#d6da06" />
<rect x="778.00" y="676.40" width="1.00" height="15.10" fill="#e4e814" />
<rect x="798.00" y="676.40" width="2.00" height="15.10" fill="#d7db07" />
<rect x="807.00" y="676.40" width="1.00" height="15.10" fill="#e2e612" />
<rect x="819.00" y="676.40" width="3.00" height="15.10" fill="#e8ec18" />
<rect x="840.00" y="676.40" width="2.00" height="15.10" fill="#e5e915" />
<rect x="854.00" y="676.40" width="1.00" height="15.10" fill="#e3e713" />
<rect x="858.00" y="676.40" width="1.00" height="15.10" fill="#e5e915" />
<rect x="872.00" y="676.40" width="1.00" height="15.10" fill="#dee20e" />
<rect x="877.00" y="676.40" width="2.00" height="15.10" fill="#e9ed19" />
<rect x="888.00" y="676.40" width="3.00" height="15.10" fill="#dfe30f" />
<rect x="907.00" y="676.40" width="1.00" height="15.10" fill="#e5e915" />
<rect x="913.00" y="676.40" width="2.00" height="15.10" fill="#e7eb17" />
<rect x="917.00" y="676.40" width="2.00" height="15.10" fill="#dfe30f" />
<rect x="926.00" y="676.40" width="2.00" height="15.10" fill="#e4e814" />
<rect x="952.00" y="676.40" width="1.00" height="15.10" fill="#e4e814" />
<rect x="956.00" y="676.40" width="1.00" height="15.10" fill="#e1e511" />
<rect x="961.00" y="676.40" width="2.00" height="15.10" fill="#e0e410" />
<rect x="967.00" y="676.40" width="1.00" height="15.10" fill="#d6da06" />
<rect x="1010.00" y="676.40" width="2.00" height="15.10" fill="#d6da06" />
<rect x="1021.00" y="676.40" width="1.00" height="15.10" fill="#e5e915" />
<rect x="1036.00" y="676.40" width="1.00" height="15.10" fill="#d6da06" />
<rect x="1041.00" y="676.40" width="2.00" height="15.10" fill="#e0e410" />
<rect x="1048.00" y="676.40" width="1.00" height="15.10" fill="#e2e612" />
<rect x="1053.00" y="676.40" width="1.00" height="15.10" fill="#dbdf0b" />
<rect x="1062.00" y="676.40" width="1.00" height="15.10" fill="#e6ea16" />
<rect x="1075.00" y="676.40" width="2.00" height="15.10" fill="#e1e511" />
<rect x="101.00" y="687.00" width="2.00" height="4.50" fill="#f0a000" />
<rect x="107.00" y="687.00" width="1.00" height="4.50" fill="#f0a000" />
<rect x="225.00" y="687.00" width="2.00" height="4.50" fill="#f0a000" />
<rect x="250.00" y="687.00" width="1.00" height="4.50" fill="#f0a000" />
<rect x="295.00" y="687.00" width="2.00" height="4.50" fill="#f0a000" />
<rect x="386.00" y="687.00" width="2.00" height="4.50" fill="#f0a000" />
<rect x="420.00" y="687.00" width="4.00" height="4.50" fill="#f0a000" />
<rect x="648.00" y="687.00" width="2.00" height="4.50" fill="#f0a000" />
<rect x="714.00" y="687.00" width="2.00" height="4.50" fill="#f0a000" />
<rect x="729.00" y="687.00" width="1.00" height="4.50" fill="#f0a000" />
<rect x="735.00" y="687.00" width="2.00" height="4.50" fill="#f0a000" />
<rect x="798.00" y="687.00" width="2.00" height="4.50" fill="#f0a000" />
<rect x="1062.00" y="687.00" width="1.00" height="4.50" fill="#f0a000" />
<rect x="245.00" y="630.00" width="3.00" height="61.50" fill="#d8606a" />
<rect x="245.50" y="583.00" width="2.50" height="3.50" fill="#80e030" />
<line x1="136.50" y1="690.00" x2="136.50" y2="692.00" stroke="#666" stroke-width="1"/>
<line x1="177.50" y1="690.00" x2="177.50" y2="692.00" stroke="#666" stroke-width="1"/>
<line x1="218.50" y1="689.00" x2="218.50" y2="692.00" stroke="#666" stroke-width="1"/>
<line x1="259.50" y1="690.00" x2="259.50" y2="692.00" stroke="#666" stroke-width="1"/>
<line x1="300.50" y1="690.00" x2="300.50" y2="692.00" stroke="#666" stroke-width="1"/>
<line x1="341.50" y1="689.00" x2="341.50" y2="692.00" stroke="#666" stroke-width="1"/>
<line x1="382.50" y1="690.00" x2="382.50" y2="692.00" stroke="#666" stroke-width="1"/>
<line x1="423.50" y1="690.00" x2="423.50" y2="692.00" stroke="#666" stroke-width="1"/>
<line x1="464.50" y1="689.00" x2="464.50" y2="692.00" stroke="#666" stroke-width="1"/>
<line x1="505.50" y1="690.00" x2="505.50" y2="692.00" stroke="#666" stroke-width="1"/>
<line x1="546.50" y1="690.00" x2="546.50" y2="692.00" stroke="#666" stroke-width="1"/>
<line x1="588.50" y1="689.00" x2="588.50" y2="692.00" stroke="#666" stroke-width="1"/>
<line x1="629.50" y1="690.00" x2="629.50" y2="692.00" stroke="#666" stroke-width="1"/>
<line x1="670.50" y1="690.00" x2="670.50" y2="692.00" stroke="#666" stroke-width="1"/>
<line x1="711.50" y1="689.00" x2="711.50" y2="692.00" stroke="#666" stroke-width="1"/>
<line x1="752.50" y1="690.00" x2="752.50" y2="692.00" stroke="#666" stroke-width="1"/>
<line x1="793.50" y1="690.00" x2="793.50" y2="692.00" stroke="#666" stroke-width="1"/>
<line x1="834.50" y1="689.00" x2="834.50" y2="692.00" stroke="#666" stroke-width="1"/>
<line x1="875.50" y1="690.00" x2="875.50" y2="692.00" stroke="#666" stroke-width="1"/>
<line x1="916.50" y1="690.00" x2="916.50" y2="692.00" stroke="#666" stroke-width="1"/>
<line x1="957.50" y1="689.00" x2="957.50" y2="692.00" stroke="#666" stroke-width="1"/>
<line x1="998.50" y1="690.00" x2="998.50" y2="692.00" stroke="#666" stroke-width="1"/>
<line x1="1039.50" y1="690.00" x2="1039.50" y2="692.00" stroke="#666" stroke-width="1"/>
<line x1="91.00" y1="686.50" x2="95.00" y2="686.50" stroke="#2a2a2a" stroke-width="1"/>
<line x1="91.00" y1="680.50" x2="95.00" y2="680.50" stroke="#2a2a2a" stroke-width="1"/>
<line x1="91.00" y1="675.50" x2="95.00" y2="675.50" stroke="#2a2a2a" stroke-width="1"/>
<line x1="91.00" y1="670.50" x2="95.00" y2="670.50" stroke="#2a2a2a" stroke-width="1"/>
<line x1="91.00" y1="667.50" x2="95.00" y2="667.50" stroke="#2a2a2a" stroke-width="1"/>
<line x1="91.00" y1="664.50" x2="95.00" y2="664.50" stroke="#2a2a2a" stroke-width="1"/>
<line x1="91.00" y1="661.50" x2="95.00" y2="661.50" stroke="#2a2a2a" stroke-width="1"/>
<line x1="87.00" y1="659.50" x2="95.00" y2="659.50" stroke="#2a2a2a" stroke-width="1"/>
<line x1="91.00" y1="643.50" x2="95.00" y2="643.50" stroke="#2a2a2a" stroke-width="1"/>
<line x1="91.00" y1="634.50" x2="95.00" y2="634.50" stroke="#2a2a2a" stroke-width="1"/>
<line x1="91.00" y1="627.50" x2="95.00" y2="627.50" stroke="#2a2a2a" stroke-width="1"/>
<line x1="91.00" y1="622.50" x2="95.00" y2="622.50" stroke="#2a2a2a" stroke-width="1"/>
<line x1="91.00" y1="618.50" x2="95.00" y2="618.50" stroke="#2a2a2a" stroke-width="1"/>
<line x1="91.00" y1="615.50" x2="95.00" y2="615.50" stroke="#2a2a2a" stroke-width="1"/>
<line x1="91.00" y1="611.50" x2="95.00" y2="611.50" stroke="#2a2a2a" stroke-width="1"/>
<line x1="91.00" y1="609.50" x2="95.00" y2="609.50" stroke="#2a2a2a" stroke-width="1"/>
<line x1="87.00" y1="606.50" x2="95.00" y2="606.50" stroke="#2a2a2a" stroke-width="1"/>
<line x1="91.00" y1="591.50" x2="95.00" y2="591.50" stroke="#2a2a2a" stroke-width="1"/>
<line x1="91.00" y1="581.50" x2="95.00" y2="581.50" stroke="#2a2a2a" stroke-width="1"/>
<line x1="91.00" y1="575.50" x2="95.00" y2="575.50" stroke="#2a2a2a" stroke-width="1"/>
<line x1="91.00" y1="570.50" x2="95.00" y2="570.50" stroke="#2a2a2a" stroke-width="1"/>
<line x1="91.00" y1="566.50" x2="95.00" y2="566.50" stroke="#2a2a2a" stroke-width="1"/>
<line x1="91.00" y1="562.50" x2="95.00" y2="562.50" stroke="#2a2a2a" stroke-width="1"/>
<line x1="91.00" y1="559.50" x2="95.00" y2="559.50" stroke="#2a2a2a" stroke-width="1"/>
<line x1="91.00" y1="556.50" x2="95.00" y2="556.50" stroke="#2a2a2a" stroke-width="1"/>
<line x1="87.00" y1="554.50" x2="95.00" y2="554.50" stroke="#2a2a2a" stroke-width="1"/>
<line x1="91.00" y1="538.50" x2="95.00" y2="538.50" stroke="#2a2a2a" stroke-width="1"/>
<line x1="91.00" y1="529.50" x2="95.00" y2="529.50" stroke="#2a2a2a" stroke-width="1"/>
<line x1="91.00" y1="522.50" x2="95.00" y2="522.50" stroke="#2a2a2a" stroke-width="1"/>
<line x1="91.00" y1="517.50" x2="95.00" y2="517.50" stroke="#2a2a2a" stroke-width="1"/>
<line x1="91.00" y1="513.50" x2="95.00" y2="513.50" stroke="#2a2a2a" stroke-width="1"/>
<text x="74.88" y="556.20" font-size="12.4" fill="#2a2a2a" textLength="6.70" lengthAdjust="spacingAndGlyphs">4</text>
<text x="58.95" y="562.20" font-size="12.4" fill="#2a2a2a" textLength="14.46" lengthAdjust="spacing">10</text>
<text x="75.23" y="608.60" font-size="12.4" fill="#2a2a2a" textLength="6.45" lengthAdjust="spacingAndGlyphs">3</text>
<text x="59.51" y="614.60" font-size="12.4" fill="#2a2a2a" textLength="14.46" lengthAdjust="spacing">10</text>
<text x="75.40" y="661.00" font-size="12.4" fill="#2a2a2a" textLength="6.39" lengthAdjust="spacingAndGlyphs">2</text>
<text x="59.80" y="667.00" font-size="12.4" fill="#2a2a2a" textLength="14.46" lengthAdjust="spacing">10</text>
<text x="8.58" y="536.75" font-size="12.4" fill="#2a2a2a" textLength="66.07" lengthAdjust="spacingAndGlyphs">LEMMS Ions</text>
<text transform="translate(49.60,639.00) rotate(-90)" x="0" y="0" font-size="12.4" fill="#2a2a2a" textLength="73.27" lengthAdjust="spacing">Energy (keV)</text>
<rect x="1092.00" y="515.00" width="12.40" height="177.00" fill="url(#cmap)" />
<line x1="1104.50" y1="514.50" x2="1104.50" y2="692.00" stroke="#2a2a2a" stroke-width="1"/>
<line x1="1104.50" y1="690.50" x2="1113.00" y2="690.50" stroke="#2a2a2a" stroke-width="1"/>
<line x1="1104.50" y1="671.50" x2="1113.00" y2="671.50" stroke="#2a2a2a" stroke-width="1"/>
<text x="1116.23" y="679.10" font-size="12.4" fill="#2a2a2a" textLength="14.46" lengthAdjust="spacing">10</text>
<text x="1132.40" y="673.10" font-size="12.4" fill="#2a2a2a" textLength="13.60" lengthAdjust="spacingAndGlyphs">–4</text>
<line x1="1104.50" y1="651.50" x2="1113.00" y2="651.50" stroke="#2a2a2a" stroke-width="1"/>
<line x1="1104.50" y1="632.50" x2="1113.00" y2="632.50" stroke="#2a2a2a" stroke-width="1"/>
<text x="1116.23" y="640.00" font-size="12.4" fill="#2a2a2a" textLength="14.46" lengthAdjust="spacing">10</text>
<text x="1132.40" y="634.00" font-size="12.4" fill="#2a2a2a" textLength="13.22" lengthAdjust="spacingAndGlyphs">–2</text>
<line x1="1104.50" y1="612.50" x2="1113.00" y2="612.50" stroke="#2a2a2a" stroke-width="1"/>
<line x1="1104.50" y1="593.50" x2="1113.00" y2="593.50" stroke="#2a2a2a" stroke-width="1"/>
<text x="1116.23" y="600.90" font-size="12.4" fill="#2a2a2a" textLength="14.46" lengthAdjust="spacing">10</text>
<text x="1131.93" y="594.90" font-size="12.4" fill="#2a2a2a" textLength="6.60" lengthAdjust="spacingAndGlyphs">0</text>
<line x1="1104.50" y1="573.50" x2="1113.00" y2="573.50" stroke="#2a2a2a" stroke-width="1"/>
<line x1="1104.50" y1="554.50" x2="1113.00" y2="554.50" stroke="#2a2a2a" stroke-width="1"/>
<text x="1116.23" y="561.80" font-size="12.4" fill="#2a2a2a" textLength="14.46" lengthAdjust="spacing">10</text>
<text x="1131.83" y="555.80" font-size="12.4" fill="#2a2a2a" textLength="6.39" lengthAdjust="spacingAndGlyphs">2</text>
<line x1="1104.50" y1="534.50" x2="1113.00" y2="534.50" stroke="#2a2a2a" stroke-width="1"/>
<line x1="1104.50" y1="515.50" x2="1113.00" y2="515.50" stroke="#2a2a2a" stroke-width="1"/>
<text x="1116.23" y="522.70" font-size="12.4" fill="#2a2a2a" textLength="14.46" lengthAdjust="spacing">10</text>
<text x="1132.16" y="516.70" font-size="12.4" fill="#2a2a2a" textLength="6.70" lengthAdjust="spacingAndGlyphs">4</text>
<text transform="translate(1156.30,517.22) rotate(90)" x="0" y="0" font-size="12.4" fill="#2a2a2a" textLength="169.34" lengthAdjust="spacing">intensity 1/(s cm^2 ster keV)</text>
<rect x="95.00" y="695.00" width="147.30" height="16.00" fill="#00ff00" />
<rect x="242.30" y="695.00" width="7.70" height="16.00" fill="#ff0000" />
<rect x="250.00" y="695.00" width="3.30" height="16.00" fill="#00ff00" />
<rect x="253.30" y="695.00" width="5.00" height="16.00" fill="#ff0000" />
<rect x="258.30" y="695.00" width="23.40" height="16.00" fill="#00ff00" />
<rect x="281.70" y="695.00" width="41.60" height="16.00" fill="#ff0000" />
<rect x="323.30" y="695.00" width="88.00" height="16.00" fill="#00ff00" />
<rect x="411.30" y="695.00" width="46.00" height="16.00" fill="#ff0000" />
<rect x="457.30" y="695.00" width="70.00" height="16.00" fill="#00ff00" />
<rect x="527.30" y="695.00" width="43.00" height="16.00" fill="#ff0000" />
<rect x="570.30" y="695.00" width="12.00" height="16.00" fill="#00ff00" />
<rect x="582.30" y="695.00" width="7.00" height="16.00" fill="#ff0000" />
<rect x="589.30" y="695.00" width="13.00" height="16.00" fill="#00ff00" />
<rect x="602.30" y="695.00" width="9.00" height="16.00" fill="#ff0000" />
<rect x="611.30" y="695.00" width="383.00" height="16.00" fill="#00ff00" />
<rect x="994.30" y="695.00" width="9.00" height="16.00" fill="#ff0000" />
<rect x="1003.30" y="695.00" width="48.40" height="16.00" fill="#00ff00" />
<rect x="1051.70" y="695.00" width="29.30" height="16.00" fill="#ff0000" />
<line x1="242.50" y1="695.00" x2="242.50" y2="711.00" stroke="#222" stroke-width="1"/>
<line x1="250.50" y1="695.00" x2="250.50" y2="711.00" stroke="#222" stroke-width="1"/>
<line x1="253.50" y1="695.00" x2="253.50" y2="711.00" stroke="#222" stroke-width="1"/>
<line x1="258.50" y1="695.00" x2="258.50" y2="711.00" stroke="#222" stroke-width="1"/>
<line x1="281.50" y1="695.00" x2="281.50" y2="711.00" stroke="#222" stroke-width="1"/>
<line x1="323.50" y1="695.00" x2="323.50" y2="711.00" stroke="#222" stroke-width="1"/>
<line x1="411.50" y1="695.00" x2="411.50" y2="711.00" stroke="#222" stroke-width="1"/>
<line x1="457.50" y1="695.00" x2="457.50" y2="711.00" stroke="#222" stroke-width="1"/>
<line x1="527.50" y1="695.00" x2="527.50" y2="711.00" stroke="#222" stroke-width="1"/>
<line x1="570.50" y1="695.00" x2="570.50" y2="711.00" stroke="#222" stroke-width="1"/>
<line x1="582.50" y1="695.00" x2="582.50" y2="711.00" stroke="#222" stroke-width="1"/>
<line x1="589.50" y1="695.00" x2="589.50" y2="711.00" stroke="#222" stroke-width="1"/>
<line x1="602.50" y1="695.00" x2="602.50" y2="711.00" stroke="#222" stroke-width="1"/>
<line x1="611.50" y1="695.00" x2="611.50" y2="711.00" stroke="#222" stroke-width="1"/>
<line x1="994.50" y1="695.00" x2="994.50" y2="711.00" stroke="#222" stroke-width="1"/>
<line x1="1003.50" y1="695.00" x2="1003.50" y2="711.00" stroke="#222" stroke-width="1"/>
<line x1="1051.50" y1="695.00" x2="1051.50" y2="711.00" stroke="#222" stroke-width="1"/>
<rect x="95.50" y="695.50" width="985.00" height="15.00" fill="none" stroke="#222" stroke-width="1"/>
<text x="29.16" y="706.90" font-size="12.4" fill="#2a2a2a" textLength="50.47" lengthAdjust="spacingAndGlyphs">Sunlight?</text>
<line x1="136.50" y1="711.00" x2="136.50" y2="715.00" stroke="#2a2a2a" stroke-width="1"/>
<line x1="177.50" y1="711.00" x2="177.50" y2="715.00" stroke="#2a2a2a" stroke-width="1"/>
<line x1="218.50" y1="711.00" x2="218.50" y2="719.00" stroke="#2a2a2a" stroke-width="1"/>
<line x1="259.50" y1="711.00" x2="259.50" y2="715.00" stroke="#2a2a2a" stroke-width="1"/>
<line x1="300.50" y1="711.00" x2="300.50" y2="715.00" stroke="#2a2a2a" stroke-width="1"/>
<line x1="341.50" y1="711.00" x2="341.50" y2="719.00" stroke="#2a2a2a" stroke-width="1"/>
<line x1="382.50" y1="711.00" x2="382.50" y2="715.00" stroke="#2a2a2a" stroke-width="1"/>
<line x1="423.50" y1="711.00" x2="423.50" y2="715.00" stroke="#2a2a2a" stroke-width="1"/>
<line x1="464.50" y1="711.00" x2="464.50" y2="719.00" stroke="#2a2a2a" stroke-width="1"/>
<line x1="505.50" y1="711.00" x2="505.50" y2="715.00" stroke="#2a2a2a" stroke-width="1"/>
<line x1="546.50" y1="711.00" x2="546.50" y2="715.00" stroke="#2a2a2a" stroke-width="1"/>
<line x1="588.50" y1="711.00" x2="588.50" y2="719.00" stroke="#2a2a2a" stroke-width="1"/>
<line x1="629.50" y1="711.00" x2="629.50" y2="715.00" stroke="#2a2a2a" stroke-width="1"/>
<line x1="670.50" y1="711.00" x2="670.50" y2="715.00" stroke="#2a2a2a" stroke-width="1"/>
<line x1="711.50" y1="711.00" x2="711.50" y2="719.00" stroke="#2a2a2a" stroke-width="1"/>
<line x1="752.50" y1="711.00" x2="752.50" y2="715.00" stroke="#2a2a2a" stroke-width="1"/>
<line x1="793.50" y1="711.00" x2="793.50" y2="715.00" stroke="#2a2a2a" stroke-width="1"/>
<line x1="834.50" y1="711.00" x2="834.50" y2="719.00" stroke="#2a2a2a" stroke-width="1"/>
<line x1="875.50" y1="711.00" x2="875.50" y2="715.00" stroke="#2a2a2a" stroke-width="1"/>
<line x1="916.50" y1="711.00" x2="916.50" y2="715.00" stroke="#2a2a2a" stroke-width="1"/>
<line x1="957.50" y1="711.00" x2="957.50" y2="719.00" stroke="#2a2a2a" stroke-width="1"/>
<line x1="998.50" y1="711.00" x2="998.50" y2="715.00" stroke="#2a2a2a" stroke-width="1"/>
<line x1="1039.50" y1="711.00" x2="1039.50" y2="715.00" stroke="#2a2a2a" stroke-width="1"/>
<line x1="1081.50" y1="711.00" x2="1081.50" y2="719.00" stroke="#2a2a2a" stroke-width="1"/>
<text x="201.13" y="733.90" font-size="12.4" fill="#2a2a2a" textLength="33.61" lengthAdjust="spacing">03:00</text>
<text x="324.38" y="733.90" font-size="12.4" fill="#2a2a2a" textLength="33.61" lengthAdjust="spacing">06:00</text>
<text x="447.63" y="733.90" font-size="12.4" fill="#2a2a2a" textLength="33.61" lengthAdjust="spacing">09:00</text>
<text x="570.66" y="733.90" font-size="12.4" fill="#2a2a2a" textLength="33.59" lengthAdjust="spacing">12:00</text>
<text x="693.91" y="733.90" font-size="12.4" fill="#2a2a2a" textLength="33.59" lengthAdjust="spacing">15:00</text>
<text x="817.16" y="733.90" font-size="12.4" fill="#2a2a2a" textLength="33.59" lengthAdjust="spacing">18:00</text>
<text x="940.54" y="733.90" font-size="12.4" fill="#2a2a2a" textLength="33.65" lengthAdjust="spacing">21:00</text>
<text x="1063.88" y="733.90" font-size="12.4" fill="#2a2a2a" textLength="33.61" lengthAdjust="spacing">00:00</text>
<text x="201.16" y="748.90" font-size="12.4" fill="#2a2a2a" textLength="33.21" lengthAdjust="spacing">14.01</text>
<text x="324.46" y="748.90" font-size="12.4" fill="#2a2a2a" textLength="33.17" lengthAdjust="spacing">14.02</text>
<text x="447.41" y="748.90" font-size="12.4" fill="#2a2a2a" textLength="33.52" lengthAdjust="spacing">14.04</text>
<text x="570.86" y="748.90" font-size="12.4" fill="#2a2a2a" textLength="33.24" lengthAdjust="spacing">14.05</text>
<text x="694.11" y="748.90" font-size="12.4" fill="#2a2a2a" textLength="33.38" lengthAdjust="spacing">14.07</text>
<text x="817.26" y="748.90" font-size="12.4" fill="#2a2a2a" textLength="33.45" lengthAdjust="spacing">14.08</text>
<text x="940.51" y="748.90" font-size="12.4" fill="#2a2a2a" textLength="33.38" lengthAdjust="spacing">14.10</text>
<text x="1063.88" y="748.90" font-size="12.4" fill="#2a2a2a" textLength="33.27" lengthAdjust="spacing">14.11</text>
<text x="201.48" y="763.90" font-size="12.4" fill="#2a2a2a" textLength="33.10" lengthAdjust="spacing">53.22</text>
<text x="324.53" y="763.90" font-size="12.4" fill="#2a2a2a" textLength="33.44" lengthAdjust="spacing">53.49</text>
<text x="447.88" y="763.90" font-size="12.4" fill="#2a2a2a" textLength="33.17" lengthAdjust="spacing">53.75</text>
<text x="571.03" y="763.90" font-size="12.4" fill="#2a2a2a" textLength="33.31" lengthAdjust="spacing">54.00</text>
<text x="694.38" y="763.90" font-size="12.4" fill="#2a2a2a" textLength="33.17" lengthAdjust="spacing">54.25</text>
<text x="817.53" y="763.90" font-size="12.4" fill="#2a2a2a" textLength="33.44" lengthAdjust="spacing">54.49</text>
<text x="940.83" y="763.90" font-size="12.4" fill="#2a2a2a" textLength="33.27" lengthAdjust="spacing">54.73</text>
<text x="1063.98" y="763.90" font-size="12.4" fill="#2a2a2a" textLength="33.48" lengthAdjust="spacing">54.96</text>
<text x="201.28" y="778.90" font-size="12.4" fill="#2a2a2a" textLength="33.44" lengthAdjust="spacing">54.09</text>
<text x="324.53" y="778.90" font-size="12.4" fill="#2a2a2a" textLength="33.31" lengthAdjust="spacing">54.40</text>
<text x="447.78" y="778.90" font-size="12.4" fill="#2a2a2a" textLength="33.31" lengthAdjust="spacing">54.70</text>
<text x="571.03" y="778.90" font-size="12.4" fill="#2a2a2a" textLength="33.44" lengthAdjust="spacing">54.99</text>
<text x="694.28" y="778.90" font-size="12.4" fill="#2a2a2a" textLength="33.37" lengthAdjust="spacing">55.28</text>
<text x="817.63" y="778.90" font-size="12.4" fill="#2a2a2a" textLength="33.31" lengthAdjust="spacing">55.57</text>
<text x="940.88" y="778.90" font-size="12.4" fill="#2a2a2a" textLength="33.17" lengthAdjust="spacing">55.85</text>
<text x="1064.23" y="778.90" font-size="12.4" fill="#2a2a2a" textLength="33.10" lengthAdjust="spacing">56.12</text>
<text x="15.60" y="749.00" font-size="12.4" fill="#2a2a2a" textLength="44.62" lengthAdjust="spacing">LT (hrs)</text>
<text x="45.67" y="763.90" font-size="12.4" fill="#2a2a2a" textLength="14.16" lengthAdjust="spacingAndGlyphs">Rs</text>
<text x="12.66" y="778.90" font-size="12.4" fill="#2a2a2a" textLength="47.56" lengthAdjust="spacing">Dipole L</text>
<path d="M298.11,803.03 C295.83,805.06 289.01,810.90 284.45,815.21 C279.90,819.52 274.65,824.31 270.80,828.87 C266.95,833.42 263.80,837.79 261.34,842.52 C258.89,847.25 257.42,852.68 256.09,857.23 C254.76,861.78 253.82,865.63 253.36,869.83 C252.91,874.03 252.91,877.89 253.36,882.44 C253.82,886.99 254.41,891.89 256.09,897.14 C257.77,902.39 260.82,909.05 263.45,913.95 C266.07,918.85 268.35,922.35 271.85,926.55 C275.35,930.76 280.25,935.31 284.45,939.16 C288.66,943.01 294.96,947.91 297.06,949.66" fill="none" stroke="#2040ff" stroke-width="1.25" stroke-dasharray="2,1.1"/>
<path d="M353.78,803.03 C349.58,804.71 336.62,809.68 328.57,813.11 C320.52,816.54 312.46,819.76 305.46,823.61 C298.46,827.46 291.98,832.02 286.55,836.22 C281.13,840.42 276.40,844.62 272.90,848.82 C269.40,853.03 267.12,857.23 265.55,861.43 C263.97,865.63 263.62,870.18 263.45,874.03 C263.27,877.89 263.27,879.99 264.50,884.54 C265.72,889.09 267.82,896.44 270.80,901.34 C273.77,906.25 277.28,909.75 282.35,913.95 C287.43,918.15 294.26,922.70 301.26,926.55 C308.26,930.41 315.97,933.21 324.37,937.06 C332.77,940.91 347.13,947.56 351.68,949.66" fill="none" stroke="#8a4a20" stroke-width="1.25" stroke-dasharray="2,1.1"/>
<rect x="215.50" y="802.50" width="151.00" height="148.00" fill="none" stroke="#2a2a2a" stroke-width="1"/>
<line x1="210.90" y1="803.50" x2="215.50" y2="803.50" stroke="#2a2a2a" stroke-width="1"/>
<line x1="206.50" y1="813.50" x2="215.50" y2="813.50" stroke="#2a2a2a" stroke-width="1"/>
<line x1="210.90" y1="824.50" x2="215.50" y2="824.50" stroke="#2a2a2a" stroke-width="1"/>
<line x1="206.50" y1="834.50" x2="215.50" y2="834.50" stroke="#2a2a2a" stroke-width="1"/>
<line x1="210.90" y1="845.50" x2="215.50" y2="845.50" stroke="#2a2a2a" stroke-width="1"/>
<line x1="206.50" y1="855.50" x2="215.50" y2="855.50" stroke="#2a2a2a" stroke-width="1"/>
<line x1="210.90" y1="866.50" x2="215.50" y2="866.50" stroke="#2a2a2a" stroke-width="1"/>
<line x1="206.50" y1="876.50" x2="215.50" y2="876.50" stroke="#2a2a2a" stroke-width="1"/>
<line x1="210.90" y1="887.50" x2="215.50" y2="887.50" stroke="#2a2a2a" stroke-width="1"/>
<line x1="206.50" y1="897.50" x2="215.50" y2="897.50" stroke="#2a2a2a" stroke-width="1"/>
<line x1="210.90" y1="908.50" x2="215.50" y2="908.50" stroke="#2a2a2a" stroke-width="1"/>
<line x1="206.50" y1="918.50" x2="215.50" y2="918.50" stroke="#2a2a2a" stroke-width="1"/>
<line x1="210.90" y1="929.50" x2="215.50" y2="929.50" stroke="#2a2a2a" stroke-width="1"/>
<line x1="206.50" y1="939.50" x2="215.50" y2="939.50" stroke="#2a2a2a" stroke-width="1"/>
<line x1="210.90" y1="950.50" x2="215.50" y2="950.50" stroke="#2a2a2a" stroke-width="1"/>
<text x="176.24" y="817.94" font-size="12.4" fill="#2a2a2a" textLength="26.19" lengthAdjust="spacing">–60.</text>
<text x="176.24" y="838.96" font-size="12.4" fill="#2a2a2a" textLength="26.19" lengthAdjust="spacing">–40.</text>
<text x="176.24" y="859.98" font-size="12.4" fill="#2a2a2a" textLength="26.19" lengthAdjust="spacing">–20.</text>
<text x="190.98" y="881.00" font-size="12.4" fill="#2a2a2a" textLength="11.52" lengthAdjust="spacing">0.</text>
<text x="182.92" y="902.02" font-size="12.4" fill="#2a2a2a" textLength="19.63" lengthAdjust="spacing">20.</text>
<text x="183.03" y="923.04" font-size="12.4" fill="#2a2a2a" textLength="19.50" lengthAdjust="spacing">40.</text>
<text x="182.81" y="944.06" font-size="12.4" fill="#2a2a2a" textLength="19.74" lengthAdjust="spacing">60.</text>
<line x1="366.50" y1="950.00" x2="366.50" y2="954.60" stroke="#2a2a2a" stroke-width="1"/>
<line x1="355.50" y1="950.00" x2="355.50" y2="954.60" stroke="#2a2a2a" stroke-width="1"/>
<line x1="344.50" y1="950.00" x2="344.50" y2="959.00" stroke="#2a2a2a" stroke-width="1"/>
<line x1="334.50" y1="950.00" x2="334.50" y2="954.60" stroke="#2a2a2a" stroke-width="1"/>
<line x1="323.50" y1="950.00" x2="323.50" y2="954.60" stroke="#2a2a2a" stroke-width="1"/>
<line x1="312.50" y1="950.00" x2="312.50" y2="954.60" stroke="#2a2a2a" stroke-width="1"/>
<line x1="302.50" y1="950.00" x2="302.50" y2="954.60" stroke="#2a2a2a" stroke-width="1"/>
<line x1="291.50" y1="950.00" x2="291.50" y2="959.00" stroke="#2a2a2a" stroke-width="1"/>
<line x1="280.50" y1="950.00" x2="280.50" y2="954.60" stroke="#2a2a2a" stroke-width="1"/>
<line x1="269.50" y1="950.00" x2="269.50" y2="954.60" stroke="#2a2a2a" stroke-width="1"/>
<line x1="259.50" y1="950.00" x2="259.50" y2="954.60" stroke="#2a2a2a" stroke-width="1"/>
<line x1="248.50" y1="950.00" x2="248.50" y2="954.60" stroke="#2a2a2a" stroke-width="1"/>
<line x1="237.50" y1="950.00" x2="237.50" y2="959.00" stroke="#2a2a2a" stroke-width="1"/>
<line x1="227.50" y1="950.00" x2="227.50" y2="954.60" stroke="#2a2a2a" stroke-width="1"/>
<line x1="216.50" y1="950.00" x2="216.50" y2="954.60" stroke="#2a2a2a" stroke-width="1"/>
<text x="228.50" y="974.20" font-size="12.4" fill="#2a2a2a" textLength="19.47" lengthAdjust="spacing">50.</text>
<text x="286.01" y="974.20" font-size="12.4" fill="#2a2a2a" textLength="11.52" lengthAdjust="spacing">0.</text>
<text x="332.47" y="974.20" font-size="12.4" fill="#2a2a2a" textLength="26.19" lengthAdjust="spacing">–50.</text>
<text x="270.89" y="992.10" font-size="12.4" fill="#2a2a2a" textLength="38.54" lengthAdjust="spacingAndGlyphs">KSM–X</text>
<text transform="translate(167.90,895.87) rotate(-90)" x="0" y="0" font-size="12.4" fill="#2a2a2a" textLength="36.79" lengthAdjust="spacingAndGlyphs">KSM–Y</text>
<ellipse cx="291.4" cy="876.6" rx="22" ry="21.6" fill="none" stroke="#000" stroke-width="1.3"/>
<circle cx="291.4" cy="876.6" r="1.2" fill="none" stroke="#000" stroke-width="0.8"/>
<circle cx="313.4" cy="877.2" r="2.6" fill="#ff0000"/>
<polyline points="250.4,890.4 246,897 242.4,904.5 241.4,911.8 242.4,916" fill="none" stroke="#000" stroke-width="1.2"/>
<line x1="238.00" y1="901.00" x2="246.00" y2="909.00" stroke="#ff2020" stroke-width="1.2"/>
<line x1="238.00" y1="909.00" x2="246.00" y2="901.00" stroke="#ff2020" stroke-width="1.2"/>
<circle cx="242" cy="907.6" r="2.2" fill="#1010ff"/>
<path d="M591.68,803.03 C589.16,805.06 581.18,810.90 576.55,815.21 C571.93,819.52 567.63,823.96 563.95,828.87 C560.27,833.77 556.95,839.54 554.50,844.62 C552.04,849.70 550.47,854.43 549.24,859.33 C548.02,864.23 547.42,869.48 547.14,874.03 C546.86,878.59 546.86,882.09 547.56,886.64 C548.26,891.19 549.31,896.44 551.34,901.34 C553.38,906.25 556.42,911.15 559.75,916.05 C563.07,920.95 567.80,926.55 571.30,930.76 C574.80,934.96 577.25,938.11 580.76,941.26 C584.26,944.41 590.39,948.26 592.31,949.66" fill="none" stroke="#2040ff" stroke-width="1.25" stroke-dasharray="2,1.1"/>
<path d="M646.93,803.03 C642.91,804.53 630.65,808.98 622.77,812.06 C614.89,815.14 607.02,817.66 599.66,821.51 C592.31,825.36 584.26,830.62 578.66,835.17 C573.05,839.72 569.38,844.10 566.05,848.82 C562.72,853.55 560.20,858.63 558.70,863.53 C557.19,868.43 557.02,873.68 557.02,878.24 C557.02,882.79 557.19,885.94 558.70,890.84 C560.20,895.74 562.55,902.39 566.05,907.65 C569.55,912.90 574.10,918.15 579.71,922.35 C585.31,926.55 592.49,929.71 599.66,932.86 C606.84,936.01 614.72,938.46 622.77,941.26 C630.83,944.06 643.78,948.26 647.98,949.66" fill="none" stroke="#8a4a20" stroke-width="1.25" stroke-dasharray="2,1.1"/>
<rect x="509.50" y="802.50" width="151.00" height="148.00" fill="none" stroke="#2a2a2a" stroke-width="1"/>
<line x1="504.70" y1="950.50" x2="509.30" y2="950.50" stroke="#2a2a2a" stroke-width="1"/>
<line x1="500.30" y1="939.50" x2="509.30" y2="939.50" stroke="#2a2a2a" stroke-width="1"/>
<line x1="504.70" y1="929.50" x2="509.30" y2="929.50" stroke="#2a2a2a" stroke-width="1"/>
<line x1="500.30" y1="918.50" x2="509.30" y2="918.50" stroke="#2a2a2a" stroke-width="1"/>
<line x1="504.70" y1="908.50" x2="509.30" y2="908.50" stroke="#2a2a2a" stroke-width="1"/>
<line x1="500.30" y1="897.50" x2="509.30" y2="897.50" stroke="#2a2a2a" stroke-width="1"/>
<line x1="504.70" y1="887.50" x2="509.30" y2="887.50" stroke="#2a2a2a" stroke-width="1"/>
<line x1="500.30" y1="876.50" x2="509.30" y2="876.50" stroke="#2a2a2a" stroke-width="1"/>
<line x1="504.70" y1="866.50" x2="509.30" y2="866.50" stroke="#2a2a2a" stroke-width="1"/>
<line x1="500.30" y1="855.50" x2="509.30" y2="855.50" stroke="#2a2a2a" stroke-width="1"/>
<line x1="504.70" y1="845.50" x2="509.30" y2="845.50" stroke="#2a2a2a" stroke-width="1"/>
<line x1="500.30" y1="834.50" x2="509.30" y2="834.50" stroke="#2a2a2a" stroke-width="1"/>
<line x1="504.70" y1="824.50" x2="509.30" y2="824.50" stroke="#2a2a2a" stroke-width="1"/>
<line x1="500.30" y1="813.50" x2="509.30" y2="813.50" stroke="#2a2a2a" stroke-width="1"/>
<line x1="504.70" y1="803.50" x2="509.30" y2="803.50" stroke="#2a2a2a" stroke-width="1"/>
<text x="476.81" y="818.04" font-size="12.4" fill="#2a2a2a" textLength="19.74" lengthAdjust="spacing">60.</text>
<text x="477.03" y="839.06" font-size="12.4" fill="#2a2a2a" textLength="19.50" lengthAdjust="spacing">40.</text>
<text x="476.92" y="860.08" font-size="12.4" fill="#2a2a2a" textLength="19.63" lengthAdjust="spacing">20.</text>
<text x="484.98" y="881.10" font-size="12.4" fill="#2a2a2a" textLength="11.52" lengthAdjust="spacing">0.</text>
<text x="470.24" y="902.12" font-size="12.4" fill="#2a2a2a" textLength="26.19" lengthAdjust="spacing">–20.</text>
<text x="470.24" y="923.14" font-size="12.4" fill="#2a2a2a" textLength="26.19" lengthAdjust="spacing">–40.</text>
<text x="470.24" y="944.16" font-size="12.4" fill="#2a2a2a" textLength="26.19" lengthAdjust="spacing">–60.</text>
<line x1="659.50" y1="950.00" x2="659.50" y2="954.60" stroke="#2a2a2a" stroke-width="1"/>
<line x1="648.50" y1="950.00" x2="648.50" y2="954.60" stroke="#2a2a2a" stroke-width="1"/>
<line x1="638.50" y1="950.00" x2="638.50" y2="959.00" stroke="#2a2a2a" stroke-width="1"/>
<line x1="627.50" y1="950.00" x2="627.50" y2="954.60" stroke="#2a2a2a" stroke-width="1"/>
<line x1="616.50" y1="950.00" x2="616.50" y2="954.60" stroke="#2a2a2a" stroke-width="1"/>
<line x1="606.50" y1="950.00" x2="606.50" y2="954.60" stroke="#2a2a2a" stroke-width="1"/>
<line x1="595.50" y1="950.00" x2="595.50" y2="954.60" stroke="#2a2a2a" stroke-width="1"/>
<line x1="585.50" y1="950.00" x2="585.50" y2="959.00" stroke="#2a2a2a" stroke-width="1"/>
<line x1="574.50" y1="950.00" x2="574.50" y2="954.60" stroke="#2a2a2a" stroke-width="1"/>
<line x1="563.50" y1="950.00" x2="563.50" y2="954.60" stroke="#2a2a2a" stroke-width="1"/>
<line x1="553.50" y1="950.00" x2="553.50" y2="954.60" stroke="#2a2a2a" stroke-width="1"/>
<line x1="542.50" y1="950.00" x2="542.50" y2="954.60" stroke="#2a2a2a" stroke-width="1"/>
<line x1="531.50" y1="950.00" x2="531.50" y2="959.00" stroke="#2a2a2a" stroke-width="1"/>
<line x1="521.50" y1="950.00" x2="521.50" y2="954.60" stroke="#2a2a2a" stroke-width="1"/>
<line x1="510.50" y1="950.00" x2="510.50" y2="954.60" stroke="#2a2a2a" stroke-width="1"/>
<text x="522.50" y="974.20" font-size="12.4" fill="#2a2a2a" textLength="19.47" lengthAdjust="spacing">50.</text>
<text x="579.61" y="974.20" font-size="12.4" fill="#2a2a2a" textLength="11.52" lengthAdjust="spacing">0.</text>
<text x="625.67" y="974.20" font-size="12.4" fill="#2a2a2a" textLength="26.19" lengthAdjust="spacing">–50.</text>
<text x="564.70" y="992.10" font-size="12.4" fill="#2a2a2a" textLength="38.33" lengthAdjust="spacingAndGlyphs">KSM–X</text>
<text transform="translate(461.00,895.91) rotate(-90)" x="0" y="0" font-size="12.4" fill="#2a2a2a" textLength="37.94" lengthAdjust="spacingAndGlyphs">KSM–Z</text>
<polyline points="564,873.4 585,877 607,880.8" fill="none" stroke="#000" stroke-width="1.5"/>
<circle cx="607" cy="880.8" r="2.6" fill="#ff0000"/>
<line x1="536.20" y1="871.30" x2="544.60" y2="871.30" stroke="#000" stroke-width="1.2"/>
<line x1="532.20" y1="867.30" x2="540.20" y2="875.30" stroke="#ff2020" stroke-width="1.2"/>
<line x1="532.20" y1="875.30" x2="540.20" y2="867.30" stroke="#ff2020" stroke-width="1.2"/>
<circle cx="536.2" cy="871.3" r="2.2" fill="#1010ff"/>
<rect x="803.50" y="802.50" width="151.00" height="148.00" fill="none" stroke="#2a2a2a" stroke-width="1"/>
<line x1="795.00" y1="949.50" x2="803.50" y2="949.50" stroke="#2a2a2a" stroke-width="1"/>
<line x1="799.50" y1="947.50" x2="803.50" y2="947.50" stroke="#2a2a2a" stroke-width="1"/>
<line x1="799.50" y1="945.50" x2="803.50" y2="945.50" stroke="#2a2a2a" stroke-width="1"/>
<line x1="799.50" y1="944.50" x2="803.50" y2="944.50" stroke="#2a2a2a" stroke-width="1"/>
<line x1="799.50" y1="942.50" x2="803.50" y2="942.50" stroke="#2a2a2a" stroke-width="1"/>
<line x1="799.50" y1="940.50" x2="803.50" y2="940.50" stroke="#2a2a2a" stroke-width="1"/>
<line x1="799.50" y1="938.50" x2="803.50" y2="938.50" stroke="#2a2a2a" stroke-width="1"/>
<line x1="799.50" y1="936.50" x2="803.50" y2="936.50" stroke="#2a2a2a" stroke-width="1"/>
<line x1="799.50" y1="934.50" x2="803.50" y2="934.50" stroke="#2a2a2a" stroke-width="1"/>
<line x1="799.50" y1="933.50" x2="803.50" y2="933.50" stroke="#2a2a2a" stroke-width="1"/>
<line x1="795.00" y1="931.50" x2="803.50" y2="931.50" stroke="#2a2a2a" stroke-width="1"/>
<line x1="799.50" y1="929.50" x2="803.50" y2="929.50" stroke="#2a2a2a" stroke-width="1"/>
<line x1="799.50" y1="927.50" x2="803.50" y2="927.50" stroke="#2a2a2a" stroke-width="1"/>
<line x1="799.50" y1="925.50" x2="803.50" y2="925.50" stroke="#2a2a2a" stroke-width="1"/>
<line x1="799.50" y1="923.50" x2="803.50" y2="923.50" stroke="#2a2a2a" stroke-width="1"/>
<line x1="799.50" y1="922.50" x2="803.50" y2="922.50" stroke="#2a2a2a" stroke-width="1"/>
<line x1="799.50" y1="920.50" x2="803.50" y2="920.50" stroke="#2a2a2a" stroke-width="1"/>
<line x1="799.50" y1="918.50" x2="803.50" y2="918.50" stroke="#2a2a2a" stroke-width="1"/>
<line x1="799.50" y1="916.50" x2="803.50" y2="916.50" stroke="#2a2a2a" stroke-width="1"/>
<line x1="799.50" y1="914.50" x2="803.50" y2="914.50" stroke="#2a2a2a" stroke-width="1"/>
<line x1="795.00" y1="912.50" x2="803.50" y2="912.50" stroke="#2a2a2a" stroke-width="1"/>
<line x1="799.50" y1="911.50" x2="803.50" y2="911.50" stroke="#2a2a2a" stroke-width="1"/>
<line x1="799.50" y1="909.50" x2="803.50" y2="909.50" stroke="#2a2a2a" stroke-width="1"/>
<line x1="799.50" y1="907.50" x2="803.50" y2="907.50" stroke="#2a2a2a" stroke-width="1"/>
<line x1="799.50" y1="905.50" x2="803.50" y2="905.50" stroke="#2a2a2a" stroke-width="1"/>
<line x1="799.50" y1="903.50" x2="803.50" y2="903.50" stroke="#2a2a2a" stroke-width="1"/>
<line x1="799.50" y1="901.50" x2="803.50" y2="901.50" stroke="#2a2a2a" stroke-width="1"/>
<line x1="799.50" y1="900.50" x2="803.50" y2="900.50" stroke="#2a2a2a" stroke-width="1"/>
<line x1="799.50" y1="898.50" x2="803.50" y2="898.50" stroke="#2a2a2a" stroke-width="1"/>
<line x1="799.50" y1="896.50" x2="803.50" y2="896.50" stroke="#2a2a2a" stroke-width="1"/>
<line x1="795.00" y1="894.50" x2="803.50" y2="894.50" stroke="#2a2a2a" stroke-width="1"/>
<line x1="799.50" y1="892.50" x2="803.50" y2="892.50" stroke="#2a2a2a" stroke-width="1"/>
<line x1="799.50" y1="890.50" x2="803.50" y2="890.50" stroke="#2a2a2a" stroke-width="1"/>
<line x1="799.50" y1="888.50" x2="803.50" y2="888.50" stroke="#2a2a2a" stroke-width="1"/>
<line x1="799.50" y1="887.50" x2="803.50" y2="887.50" stroke="#2a2a2a" stroke-width="1"/>
<line x1="799.50" y1="885.50" x2="803.50" y2="885.50" stroke="#2a2a2a" stroke-width="1"/>
<line x1="799.50" y1="883.50" x2="803.50" y2="883.50" stroke="#2a2a2a" stroke-width="1"/>
<line x1="799.50" y1="881.50" x2="803.50" y2="881.50" stroke="#2a2a2a" stroke-width="1"/>
<line x1="799.50" y1="879.50" x2="803.50" y2="879.50" stroke="#2a2a2a" stroke-width="1"/>
<line x1="799.50" y1="877.50" x2="803.50" y2="877.50" stroke="#2a2a2a" stroke-width="1"/>
<line x1="795.00" y1="876.50" x2="803.50" y2="876.50" stroke="#2a2a2a" stroke-width="1"/>
<line x1="799.50" y1="874.50" x2="803.50" y2="874.50" stroke="#2a2a2a" stroke-width="1"/>
<line x1="799.50" y1="872.50" x2="803.50" y2="872.50" stroke="#2a2a2a" stroke-width="1"/>
<line x1="799.50" y1="870.50" x2="803.50" y2="870.50" stroke="#2a2a2a" stroke-width="1"/>
<line x1="799.50" y1="868.50" x2="803.50" y2="868.50" stroke="#2a2a2a" stroke-width="1"/>
<line x1="799.50" y1="866.50" x2="803.50" y2="866.50" stroke="#2a2a2a" stroke-width="1"/>
<line x1="799.50" y1="865.50" x2="803.50" y2="865.50" stroke="#2a2a2a" stroke-width="1"/>
<line x1="799.50" y1="863.50" x2="803.50" y2="863.50" stroke="#2a2a2a" stroke-width="1"/>
<line x1="799.50" y1="861.50" x2="803.50" y2="861.50" stroke="#2a2a2a" stroke-width="1"/>
<line x1="799.50" y1="859.50" x2="803.50" y2="859.50" stroke="#2a2a2a" stroke-width="1"/>
<line x1="795.00" y1="857.50" x2="803.50" y2="857.50" stroke="#2a2a2a" stroke-width="1"/>
<line x1="799.50" y1="855.50" x2="803.50" y2="855.50" stroke="#2a2a2a" stroke-width="1"/>
<line x1="799.50" y1="854.50" x2="803.50" y2="854.50" stroke="#2a2a2a" stroke-width="1"/>
<line x1="799.50" y1="852.50" x2="803.50" y2="852.50" stroke="#2a2a2a" stroke-width="1"/>
<line x1="799.50" y1="850.50" x2="803.50" y2="850.50" stroke="#2a2a2a" stroke-width="1"/>
<line x1="799.50" y1="848.50" x2="803.50" y2="848.50" stroke="#2a2a2a" stroke-width="1"/>
<line x1="799.50" y1="846.50" x2="803.50" y2="846.50" stroke="#2a2a2a" stroke-width="1"/>
<line x1="799.50" y1="844.50" x2="803.50" y2="844.50" stroke="#2a2a2a" stroke-width="1"/>
<line x1="799.50" y1="842.50" x2="803.50" y2="842.50" stroke="#2a2a2a" stroke-width="1"/>
<line x1="799.50" y1="841.50" x2="803.50" y2="841.50" stroke="#2a2a2a" stroke-width="1"/>
<line x1="795.00" y1="839.50" x2="803.50" y2="839.50" stroke="#2a2a2a" stroke-width="1"/>
<line x1="799.50" y1="837.50" x2="803.50" y2="837.50" stroke="#2a2a2a" stroke-width="1"/>
<line x1="799.50" y1="835.50" x2="803.50" y2="835.50" stroke="#2a2a2a" stroke-width="1"/>
<line x1="799.50" y1="833.50" x2="803.50" y2="833.50" stroke="#2a2a2a" stroke-width="1"/>
<line x1="799.50" y1="831.50" x2="803.50" y2="831.50" stroke="#2a2a2a" stroke-width="1"/>
<line x1="799.50" y1="830.50" x2="803.50" y2="830.50" stroke="#2a2a2a" stroke-width="1"/>
<line x1="799.50" y1="828.50" x2="803.50" y2="828.50" stroke="#2a2a2a" stroke-width="1"/>
<line x1="799.50" y1="826.50" x2="803.50" y2="826.50" stroke="#2a2a2a" stroke-width="1"/>
<line x1="799.50" y1="824.50" x2="803.50" y2="824.50" stroke="#2a2a2a" stroke-width="1"/>
<line x1="799.50" y1="822.50" x2="803.50" y2="822.50" stroke="#2a2a2a" stroke-width="1"/>
<line x1="795.00" y1="820.50" x2="803.50" y2="820.50" stroke="#2a2a2a" stroke-width="1"/>
<line x1="799.50" y1="819.50" x2="803.50" y2="819.50" stroke="#2a2a2a" stroke-width="1"/>
<line x1="799.50" y1="817.50" x2="803.50" y2="817.50" stroke="#2a2a2a" stroke-width="1"/>
<line x1="799.50" y1="815.50" x2="803.50" y2="815.50" stroke="#2a2a2a" stroke-width="1"/>
<line x1="799.50" y1="813.50" x2="803.50" y2="813.50" stroke="#2a2a2a" stroke-width="1"/>
<line x1="799.50" y1="811.50" x2="803.50" y2="811.50" stroke="#2a2a2a" stroke-width="1"/>
<line x1="799.50" y1="809.50" x2="803.50" y2="809.50" stroke="#2a2a2a" stroke-width="1"/>
<line x1="799.50" y1="808.50" x2="803.50" y2="808.50" stroke="#2a2a2a" stroke-width="1"/>
<line x1="799.50" y1="806.50" x2="803.50" y2="806.50" stroke="#2a2a2a" stroke-width="1"/>
<line x1="799.50" y1="804.50" x2="803.50" y2="804.50" stroke="#2a2a2a" stroke-width="1"/>
<line x1="795.00" y1="802.50" x2="803.50" y2="802.50" stroke="#2a2a2a" stroke-width="1"/>
<text x="771.03" y="806.84" font-size="12.4" fill="#2a2a2a" textLength="19.50" lengthAdjust="spacing">40.</text>
<text x="771.06" y="825.23" font-size="12.4" fill="#2a2a2a" textLength="19.47" lengthAdjust="spacing">30.</text>
<text x="770.92" y="843.62" font-size="12.4" fill="#2a2a2a" textLength="19.63" lengthAdjust="spacing">20.</text>
<text x="770.99" y="862.01" font-size="12.4" fill="#2a2a2a" textLength="19.55" lengthAdjust="spacing">10.</text>
<text x="778.98" y="880.40" font-size="12.4" fill="#2a2a2a" textLength="11.52" lengthAdjust="spacing">0.</text>
<text x="764.24" y="898.79" font-size="12.4" fill="#2a2a2a" textLength="26.19" lengthAdjust="spacing">–10.</text>
<text x="764.24" y="917.18" font-size="12.4" fill="#2a2a2a" textLength="26.19" lengthAdjust="spacing">–20.</text>
<text x="764.24" y="935.57" font-size="12.4" fill="#2a2a2a" textLength="26.19" lengthAdjust="spacing">–30.</text>
<text x="764.24" y="953.96" font-size="12.4" fill="#2a2a2a" textLength="26.19" lengthAdjust="spacing">–40.</text>
<line x1="803.50" y1="950.00" x2="803.50" y2="959.00" stroke="#2a2a2a" stroke-width="1"/>
<line x1="822.50" y1="950.00" x2="822.50" y2="954.60" stroke="#2a2a2a" stroke-width="1"/>
<line x1="841.50" y1="950.00" x2="841.50" y2="959.00" stroke="#2a2a2a" stroke-width="1"/>
<line x1="860.50" y1="950.00" x2="860.50" y2="954.60" stroke="#2a2a2a" stroke-width="1"/>
<line x1="879.50" y1="950.00" x2="879.50" y2="959.00" stroke="#2a2a2a" stroke-width="1"/>
<line x1="897.50" y1="950.00" x2="897.50" y2="954.60" stroke="#2a2a2a" stroke-width="1"/>
<line x1="916.50" y1="950.00" x2="916.50" y2="959.00" stroke="#2a2a2a" stroke-width="1"/>
<line x1="935.50" y1="950.00" x2="935.50" y2="954.60" stroke="#2a2a2a" stroke-width="1"/>
<line x1="954.50" y1="950.00" x2="954.50" y2="959.00" stroke="#2a2a2a" stroke-width="1"/>
<text x="791.08" y="974.20" font-size="12.4" fill="#2a2a2a" textLength="26.19" lengthAdjust="spacing">–40.</text>
<text x="828.80" y="974.20" font-size="12.4" fill="#2a2a2a" textLength="26.19" lengthAdjust="spacing">–20.</text>
<text x="873.61" y="974.20" font-size="12.4" fill="#2a2a2a" textLength="11.52" lengthAdjust="spacing">0.</text>
<text x="907.23" y="974.20" font-size="12.4" fill="#2a2a2a" textLength="19.63" lengthAdjust="spacing">20.</text>
<text x="945.22" y="974.20" font-size="12.4" fill="#2a2a2a" textLength="19.50" lengthAdjust="spacing">40.</text>
<text x="860.41" y="992.10" font-size="12.4" fill="#2a2a2a" textLength="37.82" lengthAdjust="spacingAndGlyphs">KSM–Y</text>
<text transform="translate(755.20,895.91) rotate(-90)" x="0" y="0" font-size="12.4" fill="#2a2a2a" textLength="37.94" lengthAdjust="spacingAndGlyphs">KSM–Z</text>
<ellipse cx="879.6" cy="877.0" rx="38.0" ry="6.6" fill="none" stroke="#000" stroke-width="1.5"/>
<circle cx="879.6" cy="876" r="1.8" fill="none" stroke="#000" stroke-width="1"/>
<line x1="877.50" y1="876.00" x2="881.50" y2="876.00" stroke="#c06000" stroke-width="0.8"/>
<rect x="878.00" y="882.00" width="4.50" height="4.00" fill="#ff0000" />
<polyline points="904.4,867.3 928.5,867.3 950.6,870.3" fill="none" stroke="#000" stroke-width="1.3"/>
<line x1="924.50" y1="863.30" x2="932.50" y2="871.30" stroke="#ff2020" stroke-width="1.2"/>
<line x1="924.50" y1="871.30" x2="932.50" y2="863.30" stroke="#ff2020" stroke-width="1.2"/>
<ellipse cx="932.8" cy="868.2" rx="4.3" ry="2.6" fill="#1010ff"/>
</svg></body></html>
